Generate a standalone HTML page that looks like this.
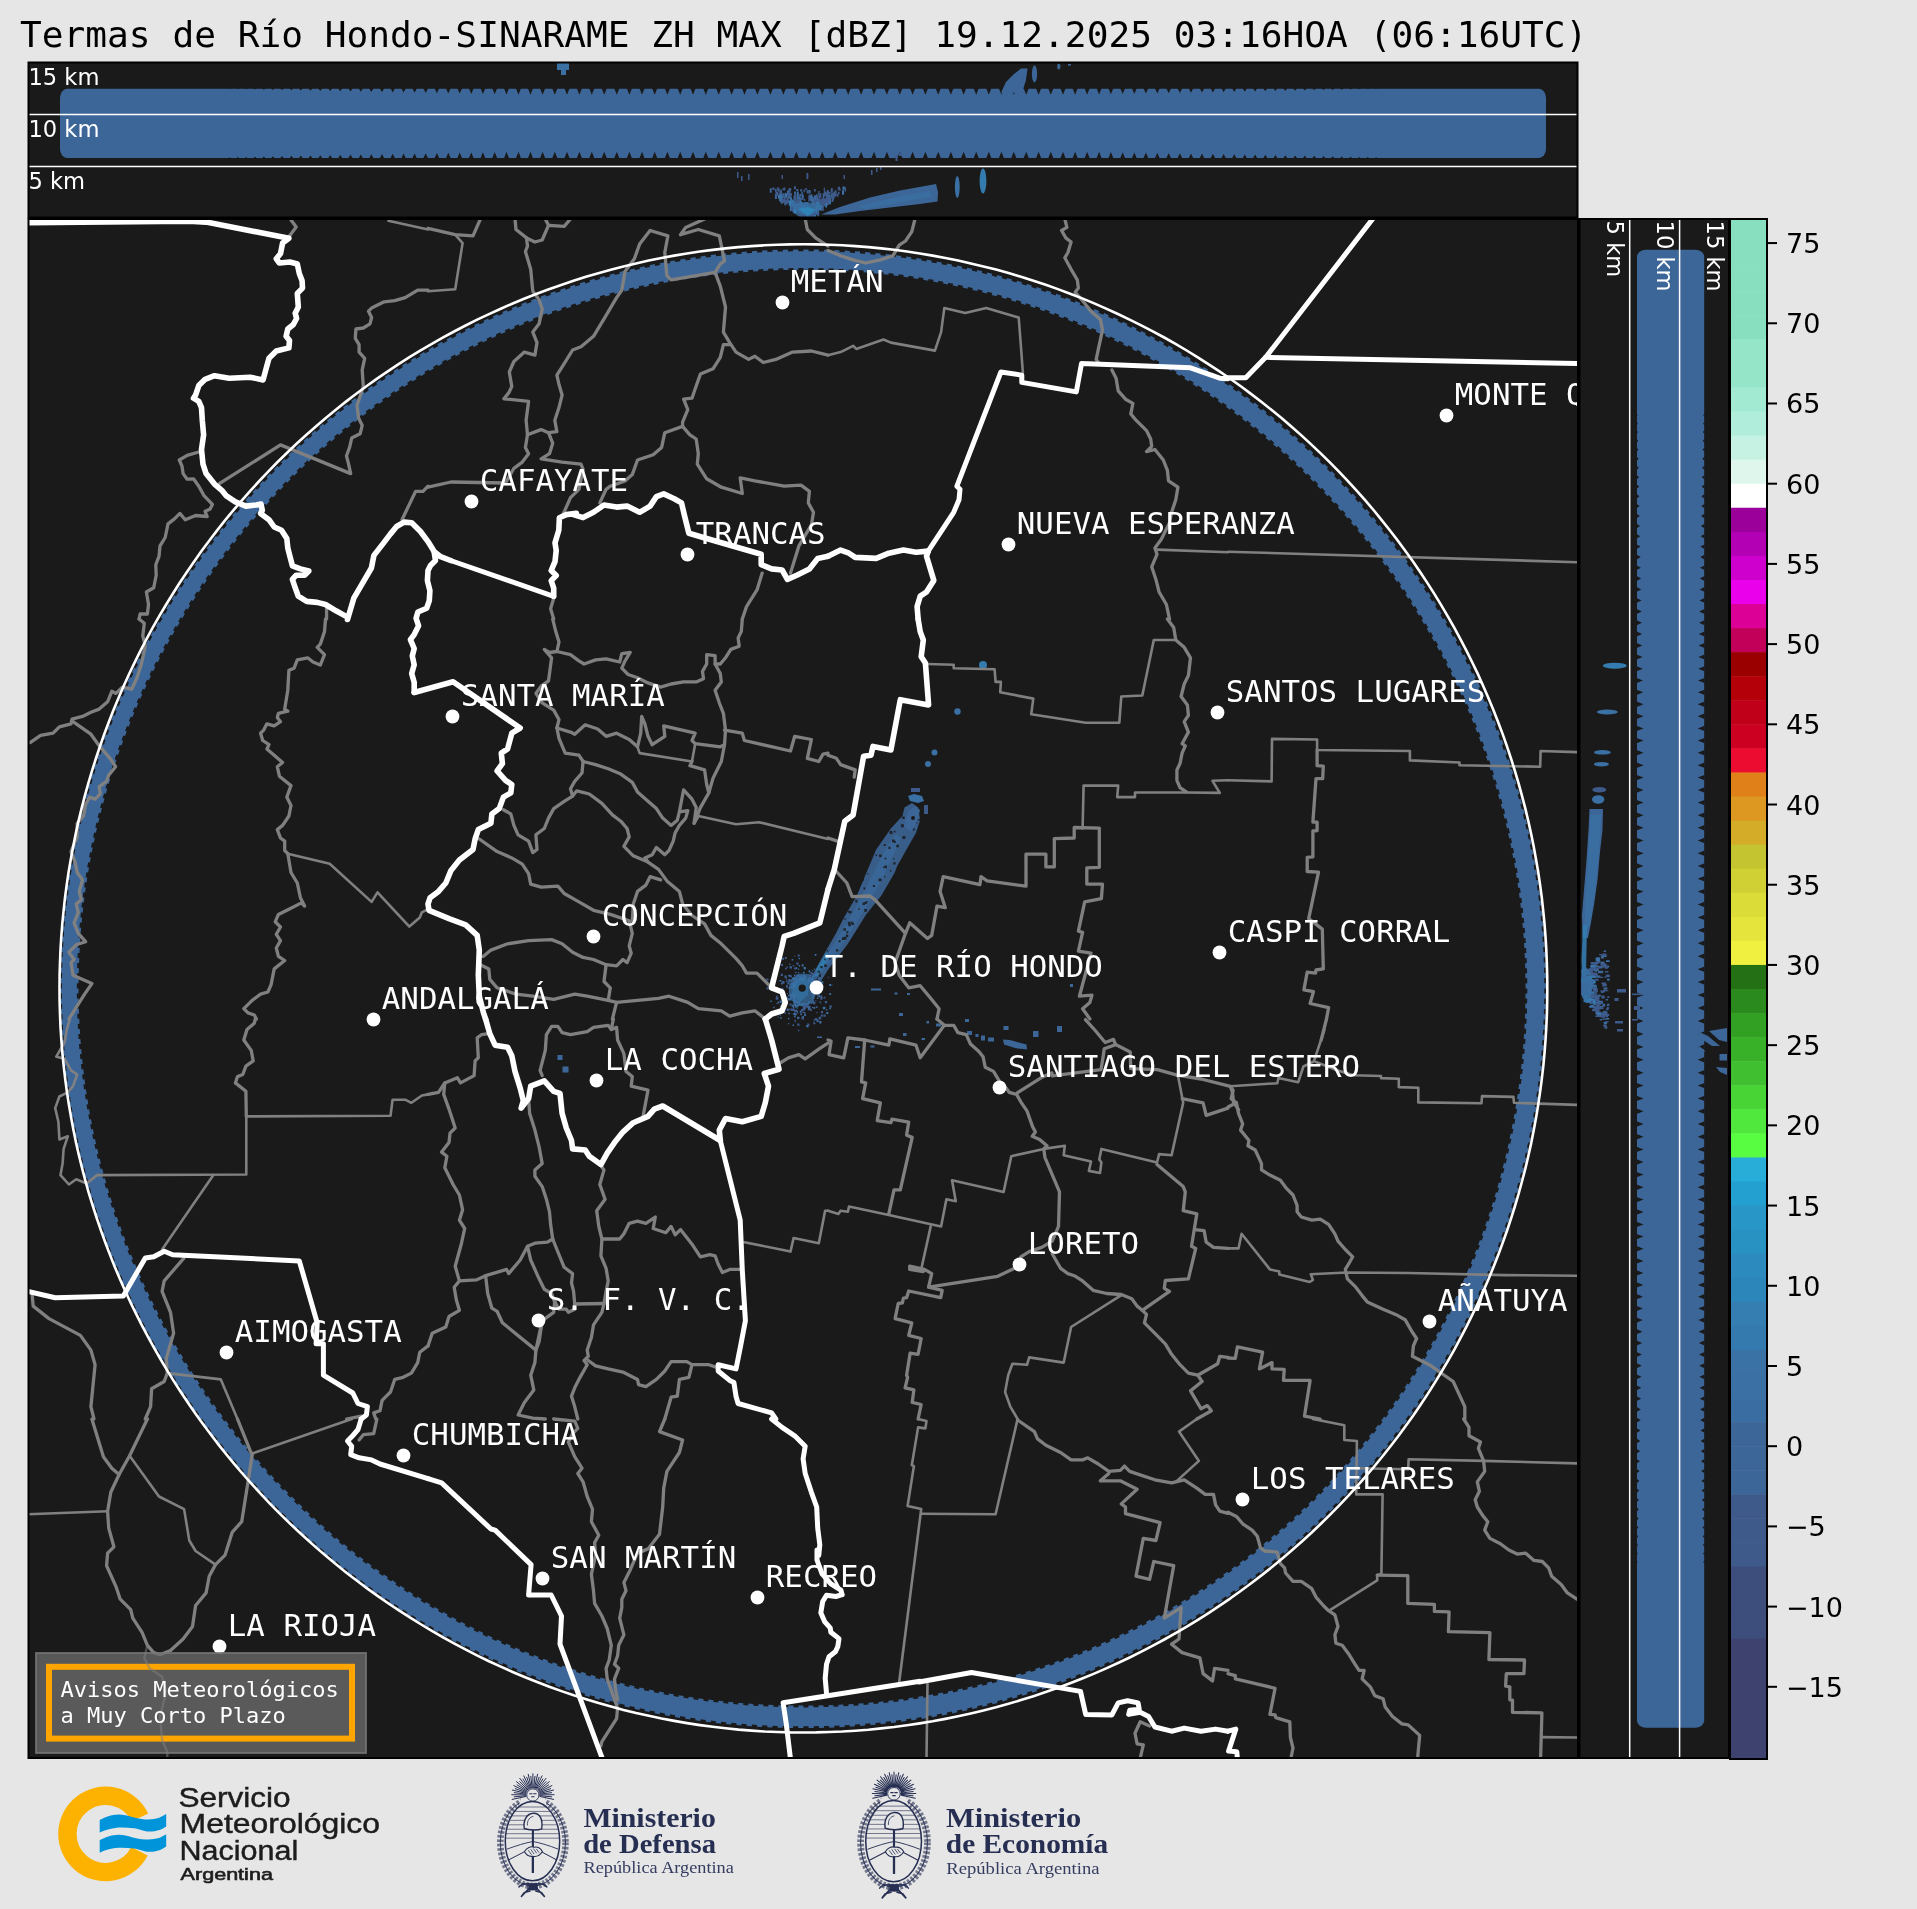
<!DOCTYPE html>
<html lang="es"><head><meta charset="utf-8"><title>Termas de Río Hondo-SINARAME ZH MAX</title>
<style>html,body{margin:0;padding:0;background:#e6e6e6;}body{width:1917px;height:1909px;overflow:hidden;}svg{display:block;will-change:transform;}.mono{font-family:"DejaVu Sans Mono","Liberation Mono",monospace;}.sans{font-family:"DejaVu Sans","Liberation Sans",sans-serif;}.lsans{font-family:"Liberation Sans","DejaVu Sans",sans-serif;}.serif{font-family:"Liberation Serif","DejaVu Serif",serif;}</style></head><body>
<svg width="1917" height="1909" viewBox="0 0 1917 1909">
<rect width="1917" height="1909" fill="#e6e6e6"/>
<text class="mono" x="20" y="47" font-size="36.16" fill="#000" xml:space="preserve">Termas de Río Hondo-SINARAME ZH MAX [dBZ] 19.12.2025 03:16HOA (06:16UTC)</text>
<rect x="28.5" y="62.5" width="1549.0" height="155.0" fill="#1a1a1a"/>
<clipPath id="tclip"><rect x="28.5" y="62.5" width="1549.0" height="155.0"/></clipPath>
<g id="toppanel" clip-path="url(#tclip)">
<rect x="60" y="88.8" width="1486" height="69.2" rx="7" ry="9" fill="#3d6698"/>
<path d="M227.7,88.0L231.3,88.0L229.5,88.8ZM227.7,158.5L231.3,158.5L229.5,157.3ZM236.0,88.0L239.7,88.0L237.8,89.0ZM236.0,158.5L239.7,158.5L237.8,157.1ZM244.4,88.0L248.2,88.0L246.3,89.2ZM244.4,158.5L248.2,158.5L246.3,156.9ZM253.1,88.0L256.9,88.0L255.0,89.4ZM253.1,158.5L256.9,158.5L255.0,156.7ZM261.9,88.0L265.8,88.0L263.8,89.7ZM261.9,158.5L265.8,158.5L263.8,156.5ZM270.9,88.0L274.9,88.0L272.9,89.9ZM270.9,158.5L274.9,158.5L272.9,156.3ZM280.0,88.0L284.1,88.0L282.0,90.1ZM280.0,158.5L284.1,158.5L282.0,156.1ZM289.3,88.0L293.4,88.0L291.4,90.3ZM289.3,158.5L293.4,158.5L291.4,155.8ZM298.7,88.0L302.9,88.0L300.8,90.5ZM298.7,158.5L302.9,158.5L300.8,155.6ZM308.3,88.0L312.6,88.0L310.5,90.7ZM308.3,158.5L312.6,158.5L310.5,155.4ZM318.1,88.0L322.4,88.0L320.3,90.9ZM318.1,158.5L322.4,158.5L320.3,155.2ZM328.0,88.0L332.4,88.0L330.2,91.1ZM328.0,158.5L332.4,158.5L330.2,155.0ZM338.0,88.0L342.5,88.0L340.3,91.3ZM338.0,158.5L342.5,158.5L340.3,154.8ZM348.2,88.0L352.8,88.0L350.5,91.5ZM348.2,158.5L352.8,158.5L350.5,154.6ZM358.6,88.0L363.1,88.0L360.8,91.8ZM358.6,158.5L363.1,158.5L360.8,154.4ZM369.0,88.0L373.7,88.0L371.3,92.0ZM369.0,158.5L373.7,158.5L371.3,154.2ZM379.6,88.0L384.3,88.0L382.0,92.2ZM379.6,158.5L384.3,158.5L382.0,154.0ZM390.3,88.0L395.1,88.0L392.7,92.4ZM390.3,158.5L395.1,158.5L392.7,153.8ZM401.2,88.0L406.0,88.0L403.6,92.6ZM401.2,158.5L406.0,158.5L403.6,153.6ZM412.2,88.0L417.0,88.0L414.6,92.8ZM412.2,158.5L417.0,158.5L414.6,153.4ZM423.2,88.0L428.2,88.0L425.7,93.0ZM423.2,158.5L428.2,158.5L425.7,153.2ZM434.4,88.0L439.4,88.0L436.9,93.2ZM434.4,158.5L439.4,158.5L436.9,153.0ZM445.8,88.0L450.8,88.0L448.3,93.4ZM445.8,158.5L450.8,158.5L448.3,152.8ZM457.2,88.0L462.3,88.0L459.7,93.6ZM457.2,158.5L462.3,158.5L459.7,152.6ZM468.7,88.0L473.8,88.0L471.3,93.9ZM468.7,158.5L473.8,158.5L471.3,152.4ZM480.4,88.0L485.5,88.0L482.9,94.1ZM480.4,158.5L485.5,158.5L482.9,152.2ZM492.1,88.0L497.3,88.0L494.7,94.3ZM492.1,158.5L497.3,158.5L494.7,152.0ZM503.9,88.0L509.1,88.0L506.5,94.5ZM503.9,158.5L509.1,158.5L506.5,151.8ZM515.8,88.0L521.1,88.0L518.5,94.7ZM515.8,158.5L521.1,158.5L518.5,151.7ZM527.8,88.0L533.1,88.0L530.5,94.8ZM527.8,158.5L533.1,158.5L530.5,151.7ZM539.9,88.0L545.3,88.0L542.6,94.8ZM539.9,158.5L545.3,158.5L542.6,151.7ZM552.1,88.0L557.5,88.0L554.8,94.8ZM552.1,158.5L557.5,158.5L554.8,151.7ZM564.3,88.0L569.7,88.0L567.0,94.8ZM564.3,158.5L569.7,158.5L567.0,151.7ZM576.7,88.0L582.1,88.0L579.4,94.8ZM576.7,158.5L582.1,158.5L579.4,151.7ZM589.1,88.0L594.5,88.0L591.8,94.8ZM589.1,158.5L594.5,158.5L591.8,151.7ZM601.5,88.0L606.9,88.0L604.2,94.8ZM601.5,158.5L606.9,158.5L604.2,151.7ZM614.1,88.0L619.5,88.0L616.8,94.8ZM614.1,158.5L619.5,158.5L616.8,151.7ZM626.7,88.0L632.1,88.0L629.4,94.8ZM626.7,158.5L632.1,158.5L629.4,151.7ZM639.3,88.0L644.7,88.0L642.0,94.8ZM639.3,158.5L644.7,158.5L642.0,151.7ZM652.0,88.0L657.4,88.0L654.7,94.8ZM652.0,158.5L657.4,158.5L654.7,151.7ZM664.7,88.0L670.1,88.0L667.4,94.8ZM664.7,158.5L670.1,158.5L667.4,151.7ZM677.5,88.0L682.9,88.0L680.2,94.8ZM677.5,158.5L682.9,158.5L680.2,151.7ZM690.3,88.0L695.7,88.0L693.0,94.8ZM690.3,158.5L695.7,158.5L693.0,151.7ZM703.1,88.0L708.5,88.0L705.8,94.8ZM703.1,158.5L708.5,158.5L705.8,151.7ZM716.0,88.0L721.4,88.0L718.7,94.8ZM716.0,158.5L721.4,158.5L718.7,151.7ZM728.9,88.0L734.3,88.0L731.6,94.8ZM728.9,158.5L734.3,158.5L731.6,151.7ZM741.8,88.0L747.2,88.0L744.5,94.8ZM741.8,158.5L747.2,158.5L744.5,151.7ZM754.7,88.0L760.1,88.0L757.4,94.8ZM754.7,158.5L760.1,158.5L757.4,151.7ZM767.7,88.0L773.1,88.0L770.4,94.8ZM767.7,158.5L773.1,158.5L770.4,151.7ZM780.7,88.0L786.1,88.0L783.4,94.8ZM780.7,158.5L786.1,158.5L783.4,151.7ZM793.6,88.0L799.0,88.0L796.3,94.8ZM793.6,158.5L799.0,158.5L796.3,151.7ZM806.6,88.0L812.0,88.0L809.3,94.8ZM806.6,158.5L812.0,158.5L809.3,151.7ZM819.5,88.0L824.9,88.0L822.2,94.8ZM819.5,158.5L824.9,158.5L822.2,151.7ZM832.5,88.0L837.9,88.0L835.2,94.8ZM832.5,158.5L837.9,158.5L835.2,151.7ZM845.5,88.0L850.9,88.0L848.2,94.8ZM845.5,158.5L850.9,158.5L848.2,151.7ZM858.4,88.0L863.8,88.0L861.1,94.8ZM858.4,158.5L863.8,158.5L861.1,151.7ZM871.3,88.0L876.7,88.0L874.0,94.8ZM871.3,158.5L876.7,158.5L874.0,151.7ZM884.2,88.0L889.6,88.0L886.9,94.8ZM884.2,158.5L889.6,158.5L886.9,151.7ZM897.1,88.0L902.5,88.0L899.8,94.8ZM897.1,158.5L902.5,158.5L899.8,151.7ZM909.9,88.0L915.3,88.0L912.6,94.8ZM909.9,158.5L915.3,158.5L912.6,151.7ZM922.7,88.0L928.1,88.0L925.4,94.8ZM922.7,158.5L928.1,158.5L925.4,151.7ZM935.5,88.0L940.9,88.0L938.2,94.8ZM935.5,158.5L940.9,158.5L938.2,151.7ZM948.2,88.0L953.6,88.0L950.9,94.8ZM948.2,158.5L953.6,158.5L950.9,151.7ZM960.9,88.0L966.3,88.0L963.6,94.8ZM960.9,158.5L966.3,158.5L963.6,151.7ZM973.5,88.0L978.9,88.0L976.2,94.8ZM973.5,158.5L978.9,158.5L976.2,151.7ZM986.1,88.0L991.5,88.0L988.8,94.8ZM986.1,158.5L991.5,158.5L988.8,151.7ZM998.7,88.0L1004.1,88.0L1001.4,94.8ZM998.7,158.5L1004.1,158.5L1001.4,151.7ZM1011.1,88.0L1016.5,88.0L1013.8,94.8ZM1011.1,158.5L1016.5,158.5L1013.8,151.7ZM1023.5,88.0L1028.9,88.0L1026.2,94.8ZM1023.5,158.5L1028.9,158.5L1026.2,151.7ZM1035.9,88.0L1041.3,88.0L1038.6,94.8ZM1035.9,158.5L1041.3,158.5L1038.6,151.7ZM1048.1,88.0L1053.5,88.0L1050.8,94.8ZM1048.1,158.5L1053.5,158.5L1050.8,151.7ZM1060.3,88.0L1065.7,88.0L1063.0,94.8ZM1060.3,158.5L1065.7,158.5L1063.0,151.7ZM1072.5,88.0L1077.8,88.0L1075.1,94.8ZM1072.5,158.5L1077.8,158.5L1075.1,151.7ZM1084.5,88.0L1089.8,88.0L1087.1,94.7ZM1084.5,158.5L1089.8,158.5L1087.1,151.7ZM1096.5,88.0L1101.7,88.0L1099.1,94.5ZM1096.5,158.5L1101.7,158.5L1099.1,151.8ZM1108.3,88.0L1113.5,88.0L1110.9,94.3ZM1108.3,158.5L1113.5,158.5L1110.9,152.0ZM1120.1,88.0L1125.2,88.0L1122.7,94.1ZM1120.1,158.5L1125.2,158.5L1122.7,152.2ZM1131.8,88.0L1136.9,88.0L1134.3,93.9ZM1131.8,158.5L1136.9,158.5L1134.3,152.4ZM1143.3,88.0L1148.4,88.0L1145.9,93.6ZM1143.3,158.5L1148.4,158.5L1145.9,152.6ZM1154.8,88.0L1159.8,88.0L1157.3,93.4ZM1154.8,158.5L1159.8,158.5L1157.3,152.8ZM1166.2,88.0L1171.2,88.0L1168.7,93.2ZM1166.2,158.5L1171.2,158.5L1168.7,153.0ZM1177.4,88.0L1182.4,88.0L1179.9,93.0ZM1177.4,158.5L1182.4,158.5L1179.9,153.2ZM1188.6,88.0L1193.4,88.0L1191.0,92.8ZM1188.6,158.5L1193.4,158.5L1191.0,153.4ZM1199.6,88.0L1204.4,88.0L1202.0,92.6ZM1199.6,158.5L1204.4,158.5L1202.0,153.6ZM1210.5,88.0L1215.3,88.0L1212.9,92.4ZM1210.5,158.5L1215.3,158.5L1212.9,153.8ZM1221.3,88.0L1226.0,88.0L1223.6,92.2ZM1221.3,158.5L1226.0,158.5L1223.6,154.0ZM1231.9,88.0L1236.6,88.0L1234.3,92.0ZM1231.9,158.5L1236.6,158.5L1234.3,154.2ZM1242.5,88.0L1247.0,88.0L1244.8,91.8ZM1242.5,158.5L1247.0,158.5L1244.8,154.4ZM1252.8,88.0L1257.4,88.0L1255.1,91.5ZM1252.8,158.5L1257.4,158.5L1255.1,154.6ZM1263.1,88.0L1267.6,88.0L1265.3,91.3ZM1263.1,158.5L1267.6,158.5L1265.3,154.8ZM1273.2,88.0L1277.6,88.0L1275.4,91.1ZM1273.2,158.5L1277.6,158.5L1275.4,155.0ZM1283.2,88.0L1287.5,88.0L1285.3,90.9ZM1283.2,158.5L1287.5,158.5L1285.3,155.2ZM1293.0,88.0L1297.3,88.0L1295.1,90.7ZM1293.0,158.5L1297.3,158.5L1295.1,155.4ZM1302.7,88.0L1306.9,88.0L1304.8,90.5ZM1302.7,158.5L1306.9,158.5L1304.8,155.6ZM1312.2,88.0L1316.3,88.0L1314.2,90.3ZM1312.2,158.5L1316.3,158.5L1314.2,155.8ZM1321.5,88.0L1325.6,88.0L1323.6,90.1ZM1321.5,158.5L1325.6,158.5L1323.6,156.1ZM1330.7,88.0L1334.7,88.0L1332.7,89.9ZM1330.7,158.5L1334.7,158.5L1332.7,156.3ZM1339.8,88.0L1343.7,88.0L1341.8,89.7ZM1339.8,158.5L1343.7,158.5L1341.8,156.5ZM1348.7,88.0L1352.5,88.0L1350.6,89.4ZM1348.7,158.5L1352.5,158.5L1350.6,156.7ZM1357.4,88.0L1361.2,88.0L1359.3,89.2ZM1357.4,158.5L1361.2,158.5L1359.3,156.9ZM1365.9,88.0L1369.6,88.0L1367.8,89.0ZM1365.9,158.5L1369.6,158.5L1367.8,157.1ZM1374.3,88.0L1377.9,88.0L1376.1,88.8ZM1374.3,158.5L1377.9,158.5L1376.1,157.3Z" fill="#1a1a1a"/>
<path d="M557,63h12v7h-3v5h-5v-5h-4z" fill="#3a70a4"/>
<path d="M1001,92.8L1006,82L1014,74L1021,68.6L1027.5,68.6L1026,80L1022,92.8Z" fill="#3d6698"/>
<ellipse cx="1034.5" cy="74" rx="2.6" ry="8.5" fill="#3d6698"/>
<ellipse cx="1058.8" cy="66.5" rx="1.6" ry="3" fill="#3d6698"/>
<rect x="1068" y="64" width="3" height="1.6" fill="#3d6698"/>
<path d="M785.5,195.1h2.0v3.4h-2.0zM777.7,188.3h1.8v3.5h-1.8zM800.2,189.3h1.9v2.1h-1.9zM799.3,194.0h1.8v2.6h-1.8zM824.9,201.9h2.1v5.7h-2.1zM794.7,201.7h1.8v3.0h-1.8zM769.8,188.3h1.9v4.4h-1.9zM795.4,206.3h1.4v8.3h-1.4zM808.1,206.3h1.9v5.5h-1.9zM788.6,189.4h1.3v3.8h-1.3zM801.6,211.1h2.1v3.1h-2.1zM799.9,209.3h1.9v4.4h-1.9zM813.9,195.3h2.6v5.1h-2.6zM789.0,188.3h2.3v2.2h-2.3zM797.0,196.9h2.2v4.8h-2.2zM800.7,211.1h2.2v5.5h-2.2zM805.8,213.8h2.5v2.6h-2.5zM808.3,190.0h2.3v3.5h-2.3zM799.8,204.4h1.8v3.0h-1.8zM780.4,192.0h1.8v5.1h-1.8zM807.6,212.9h1.8v7.9h-1.8zM806.6,206.7h2.6v4.0h-2.6zM797.3,205.9h2.2v4.0h-2.2zM822.7,193.2h1.6v5.4h-1.6zM830.8,193.3h1.2v4.7h-1.2zM792.9,204.2h1.3v2.0h-1.3zM814.3,209.5h1.6v2.8h-1.6zM818.9,202.8h1.3v4.9h-1.3zM804.3,208.6h2.5v7.0h-2.5zM786.4,200.3h2.5v2.7h-2.5zM800.9,202.2h1.4v6.1h-1.4zM813.5,210.4h2.2v7.4h-2.2zM801.2,211.1h2.1v2.2h-2.1zM798.5,201.9h1.8v3.6h-1.8zM807.2,202.9h1.4v2.0h-1.4zM817.4,204.0h1.6v3.8h-1.6zM805.6,206.9h1.8v3.5h-1.8zM818.0,198.2h1.5v4.9h-1.5zM788.9,201.8h2.1v2.9h-2.1zM792.5,205.6h2.1v2.3h-2.1zM800.1,211.0h2.5v8.9h-2.5zM775.1,188.8h1.6v3.1h-1.6zM802.6,213.4h1.9v8.3h-1.9zM807.3,213.1h1.9v6.5h-1.9zM788.4,193.9h1.4v4.4h-1.4zM819.9,206.3h2.0v4.2h-2.0zM797.6,196.4h2.6v2.8h-2.6zM809.7,206.4h1.6v4.4h-1.6zM806.8,212.3h2.3v5.0h-2.3zM784.2,199.8h1.9v4.5h-1.9zM796.3,204.9h2.1v2.1h-2.1zM797.5,207.2h1.8v2.8h-1.8zM804.2,210.1h1.9v7.5h-1.9zM811.3,197.3h2.6v4.9h-2.6zM818.3,190.9h1.3v4.8h-1.3zM782.9,193.2h1.8v4.3h-1.8zM776.1,191.9h2.2v2.4h-2.2zM804.9,211.8h2.2v3.1h-2.2zM774.9,193.9h2.0v5.0h-2.0zM795.2,196.4h1.2v3.2h-1.2zM816.0,208.9h1.3v3.4h-1.3zM779.2,196.6h2.2v4.1h-2.2zM792.1,200.2h1.5v5.6h-1.5zM806.1,207.3h1.6v2.0h-1.6zM789.9,196.4h1.8v5.4h-1.8zM801.1,210.9h1.3v8.8h-1.3zM780.8,195.4h2.5v2.5h-2.5zM786.2,193.5h1.4v3.3h-1.4zM815.2,207.8h2.5v3.9h-2.5zM806.4,212.7h1.9v6.2h-1.9zM779.1,192.8h1.6v3.9h-1.6zM809.5,205.4h1.3v8.0h-1.3zM790.4,204.6h1.5v3.9h-1.5zM816.9,207.7h2.3v7.9h-2.3zM820.3,205.0h2.1v2.9h-2.1zM828.9,195.0h1.6v2.4h-1.6zM793.5,195.8h2.4v4.4h-2.4zM804.2,202.7h1.8v4.8h-1.8zM807.9,210.5h2.6v6.9h-2.6zM795.7,207.0h1.8v6.9h-1.8zM814.7,207.5h1.6v4.4h-1.6zM796.3,189.0h2.0v2.0h-2.0zM780.6,197.3h2.2v6.4h-2.2zM832.3,197.2h1.5v3.6h-1.5zM799.3,210.8h2.2v5.3h-2.2zM815.5,201.4h2.6v5.8h-2.6zM794.1,191.4h2.1v3.3h-2.1zM779.6,191.6h1.7v4.7h-1.7zM826.5,199.7h1.7v5.0h-1.7zM800.3,200.5h1.4v5.2h-1.4zM810.7,196.0h2.2v5.8h-2.2zM799.5,206.2h2.1v8.1h-2.1zM811.0,193.9h1.3v2.5h-1.3zM831.2,188.2h1.4v2.5h-1.4zM811.7,199.6h2.4v5.9h-2.4zM814.8,203.2h1.3v2.9h-1.3zM800.8,201.7h1.6v5.0h-1.6zM815.7,204.4h2.6v3.4h-2.6zM807.9,212.2h2.0v3.6h-2.0zM831.0,195.6h2.5v2.4h-2.5z" fill="#3d6698"/>
<path d="M828.9,197.9h2.1v6.3h-2.1zM813.9,208.9h1.8v4.5h-1.8zM803.2,212.8h1.5v3.8h-1.5zM790.6,203.2h1.7v5.6h-1.7zM805.5,202.9h1.9v7.5h-1.9zM813.3,208.6h1.5v5.5h-1.5zM806.0,212.8h2.6v9.4h-2.6zM791.1,199.4h2.3v6.7h-2.3zM825.5,199.0h2.6v2.1h-2.6zM798.9,208.6h2.6v6.5h-2.6zM809.2,195.1h2.2v5.6h-2.2zM814.0,209.2h1.4v5.6h-1.4zM799.7,210.7h1.3v2.7h-1.3zM811.5,212.0h1.5v5.4h-1.5zM779.7,196.0h1.8v4.9h-1.8zM797.4,208.4h1.3v7.9h-1.3zM789.9,203.4h2.5v7.6h-2.5zM804.4,209.4h2.2v8.9h-2.2zM807.3,213.2h1.3v3.5h-1.3zM795.7,201.3h1.7v2.0h-1.7zM792.2,204.0h2.1v7.6h-2.1zM807.6,209.4h2.1v6.8h-2.1zM801.6,209.7h1.5v6.6h-1.5zM809.4,207.5h1.3v3.0h-1.3zM813.0,204.2h1.4v4.9h-1.4zM777.9,194.7h1.3v4.0h-1.3zM790.3,197.7h1.7v3.5h-1.7zM787.0,190.8h2.2v4.0h-2.2zM779.2,195.6h2.0v5.6h-2.0zM803.3,213.2h2.2v8.6h-2.2zM800.8,205.7h1.9v6.2h-1.9zM806.3,211.1h1.3v6.4h-1.3zM806.1,213.6h1.3v2.6h-1.3zM802.9,212.8h1.5v4.8h-1.5zM805.1,209.0h1.9v4.6h-1.9zM796.9,191.4h1.8v4.6h-1.8zM805.4,212.7h1.8v5.8h-1.8zM787.8,190.5h2.1v2.6h-2.1zM815.6,206.9h1.4v7.5h-1.4zM803.7,214.0h2.5v8.5h-2.5zM799.7,197.5h1.2v4.2h-1.2zM792.2,203.9h2.2v4.4h-2.2zM803.8,204.7h2.2v7.3h-2.2zM818.9,203.9h2.1v3.1h-2.1zM800.0,211.1h2.3v2.3h-2.3zM801.6,194.6h2.1v3.7h-2.1zM804.4,208.7h1.7v4.5h-1.7zM808.0,213.9h1.5v9.8h-1.5zM797.3,203.1h2.1v7.1h-2.1zM806.1,213.1h2.2v9.0h-2.2zM807.4,213.8h2.3v4.1h-2.3zM826.6,193.6h2.3v5.2h-2.3zM808.0,213.8h2.0v5.0h-2.0zM801.0,209.6h2.5v3.4h-2.5zM809.8,211.5h2.3v6.7h-2.3zM829.5,199.7h1.7v2.5h-1.7zM810.1,211.0h2.1v4.7h-2.1zM832.6,193.4h2.4v2.8h-2.4zM803.6,211.5h1.8v2.1h-1.8zM817.1,205.6h2.1v4.8h-2.1zM815.8,197.5h2.1v5.5h-2.1zM800.5,204.3h2.1v2.5h-2.1zM799.8,200.9h1.5v2.4h-1.5zM800.8,209.5h1.9v7.2h-1.9zM794.1,204.8h1.8v7.0h-1.8zM820.0,205.1h2.6v5.1h-2.6zM785.4,194.0h1.6v3.3h-1.6zM810.2,205.2h1.6v5.7h-1.6zM806.5,207.8h2.0v5.2h-2.0zM824.0,191.6h2.0v4.2h-2.0zM800.1,205.0h2.3v2.6h-2.3zM797.0,196.2h1.8v5.7h-1.8zM802.7,210.4h1.4v4.0h-1.4zM805.9,213.2h1.5v3.9h-1.5zM808.2,208.7h1.3v7.0h-1.3zM842.5,186.5h2.4v3.3h-2.4zM793.5,206.1h1.9v5.2h-1.9zM802.0,203.0h1.8v6.1h-1.8zM801.4,191.7h1.3v3.8h-1.3zM780.3,189.4h1.3v2.5h-1.3zM788.5,196.0h2.0v2.5h-2.0zM815.4,195.4h2.5v4.2h-2.5zM807.8,208.0h2.3v3.6h-2.3zM800.4,210.4h2.0v4.0h-2.0zM793.2,206.0h1.4v3.2h-1.4zM807.2,212.4h1.9v6.0h-1.9zM780.5,193.9h2.5v4.6h-2.5zM789.8,201.2h1.8v3.1h-1.8zM795.1,195.1h1.3v2.0h-1.3zM798.1,204.3h1.4v2.2h-1.4zM801.9,211.3h1.8v6.2h-1.8zM817.8,203.4h2.1v5.5h-2.1zM790.2,201.3h1.3v4.8h-1.3zM779.2,196.4h1.6v5.0h-1.6zM800.7,207.3h1.2v8.5h-1.2zM810.9,210.4h2.1v4.6h-2.1zM800.6,208.2h1.4v2.5h-1.4zM806.7,206.7h1.7v5.5h-1.7zM807.5,211.8h1.5v6.4h-1.5zM800.6,203.5h2.0v3.5h-2.0zM798.8,210.5h2.1v4.3h-2.1zM842.0,190.3h2.1v4.4h-2.1zM813.4,207.4h2.3v8.4h-2.3zM807.8,212.5h1.6v4.0h-1.6zM784.9,192.8h1.6v5.0h-1.6z" fill="#3a70a4"/>
<path d="M802.7,211.5h1.8v3.8h-1.8zM800.3,209.3h1.4v5.7h-1.4zM793.3,200.5h2.2v6.7h-2.2zM820.0,206.5h1.9v3.2h-1.9zM800.7,209.1h1.6v3.7h-1.6zM809.1,207.7h1.4v2.9h-1.4zM817.2,201.7h2.1v4.7h-2.1zM788.8,200.4h2.1v5.3h-2.1zM810.8,209.1h1.8v6.9h-1.8zM804.8,208.0h2.3v4.7h-2.3zM806.4,213.1h2.5v9.2h-2.5zM814.8,210.0h1.4v3.1h-1.4zM809.1,207.6h1.6v4.4h-1.6zM805.8,212.4h1.4v2.7h-1.4zM794.4,200.9h2.3v2.1h-2.3zM794.8,206.6h1.7v7.2h-1.7zM806.5,205.4h1.8v2.9h-1.8zM793.2,206.7h2.4v6.5h-2.4zM816.8,207.9h1.3v5.8h-1.3zM816.5,203.8h2.2v7.1h-2.2zM810.2,210.3h1.4v8.0h-1.4zM819.0,205.8h1.2v4.4h-1.2zM795.3,202.4h1.3v4.5h-1.3zM802.6,207.8h1.7v4.9h-1.7zM815.4,208.5h2.4v2.4h-2.4zM802.0,210.6h1.2v6.0h-1.2zM806.4,202.4h1.8v6.3h-1.8zM813.8,210.6h1.8v6.5h-1.8zM813.0,210.4h1.4v3.4h-1.4zM808.8,209.0h1.3v2.1h-1.3zM811.6,209.7h1.5v8.7h-1.5zM795.8,201.8h1.4v6.7h-1.4zM818.8,200.4h1.3v4.2h-1.3zM808.6,211.9h1.5v5.4h-1.5zM819.5,202.8h1.8v3.3h-1.8zM797.1,203.5h1.3v4.6h-1.3zM825.6,200.8h1.7v5.5h-1.7z" fill="#347cb0"/>
<path d="M783.6,187.4h1.8v3.2h-1.8zM821.0,201.7h1.5v2.5h-1.5zM796.9,198.0h1.6v5.6h-1.6zM823.3,198.8h2.1v2.3h-2.1zM831.9,197.1h1.8v3.2h-1.8zM786.7,198.3h2.0v4.5h-2.0zM784.4,199.5h1.6v6.1h-1.6zM827.2,200.5h2.0v4.6h-2.0zM813.8,199.4h2.1v6.4h-2.1zM804.1,213.1h1.8v5.8h-1.8zM788.4,188.4h2.3v4.1h-2.3zM808.5,197.4h1.7v3.2h-1.7zM772.3,187.4h2.3v2.7h-2.3zM826.0,193.6h1.2v3.8h-1.2zM833.3,191.6h2.6v5.1h-2.6zM826.7,190.0h2.1v2.2h-2.1zM813.6,208.5h2.4v6.7h-2.4zM816.0,194.1h1.4v5.3h-1.4zM783.4,199.6h1.8v3.5h-1.8zM794.1,202.5h1.3v2.6h-1.3zM836.6,194.0h1.9v2.7h-1.9zM819.1,198.6h1.3v6.4h-1.3zM798.2,198.7h2.0v3.2h-2.0zM828.1,196.7h2.3v4.1h-2.3zM838.7,188.4h2.0v2.1h-2.0zM826.0,192.3h1.8v5.2h-1.8zM815.6,199.8h1.8v2.0h-1.8zM787.7,192.5h2.5v3.7h-2.5zM809.2,213.9h1.5v9.5h-1.5zM782.4,188.2h1.3v2.1h-1.3zM823.5,200.0h1.8v5.1h-1.8zM782.2,193.8h1.8v2.7h-1.8zM834.8,190.3h1.8v4.9h-1.8zM814.0,189.0h1.7v2.4h-1.7zM825.7,197.7h1.5v5.3h-1.5zM805.9,210.7h1.2v6.0h-1.2zM785.3,199.5h2.5v5.0h-2.5zM821.7,200.1h2.5v3.6h-2.5zM806.7,190.0h1.6v3.4h-1.6zM827.9,191.7h2.5v2.8h-2.5zM796.4,204.4h1.9v5.8h-1.9zM811.8,211.9h1.3v6.8h-1.3zM821.2,198.2h2.1v6.5h-2.1zM810.0,211.5h1.9v4.1h-1.9zM818.4,195.7h2.4v2.4h-2.4zM817.9,198.6h2.2v3.2h-2.2zM803.6,189.5h1.5v2.8h-1.5zM808.7,213.5h1.8v3.6h-1.8zM804.4,207.0h2.2v7.7h-2.2zM819.6,193.3h1.8v4.5h-1.8zM814.4,209.3h1.6v3.5h-1.6zM805.8,207.8h1.5v6.7h-1.5zM789.7,193.1h2.2v3.0h-2.2zM779.9,190.3h2.0v2.9h-2.0zM776.0,193.0h2.3v3.2h-2.3zM821.3,205.3h2.5v5.4h-2.5zM795.0,202.1h2.4v4.6h-2.4zM825.3,197.8h2.2v4.7h-2.2zM775.4,192.1h2.0v3.5h-2.0zM812.6,210.9h1.2v2.4h-1.2zM805.7,206.4h2.6v2.7h-2.6zM795.1,198.7h1.6v4.9h-1.6zM830.7,188.5h2.0v4.3h-2.0zM819.6,199.3h1.5v5.4h-1.5zM794.4,205.8h1.5v2.6h-1.5zM811.1,211.3h2.3v7.3h-2.3zM826.5,199.1h2.4v2.4h-2.4zM804.8,203.6h2.4v4.8h-2.4zM823.8,192.1h2.3v4.4h-2.3zM813.7,206.5h1.4v6.3h-1.4zM814.3,209.5h1.7v4.0h-1.7zM806.4,210.2h2.5v5.4h-2.5zM831.4,196.0h1.7v3.0h-1.7zM794.2,194.1h2.0v5.6h-2.0zM823.9,200.3h1.6v5.7h-1.6zM820.9,201.3h2.1v3.1h-2.1zM832.5,196.3h2.3v2.1h-2.3zM794.0,186.3h2.0v3.0h-2.0zM805.5,210.4h1.7v5.2h-1.7zM808.8,194.4h1.7v2.9h-1.7zM823.1,198.2h1.8v2.2h-1.8zM781.8,198.7h1.8v4.4h-1.8zM808.3,195.6h1.6v6.0h-1.6zM783.6,197.8h1.9v2.9h-1.9zM814.4,203.7h1.2v2.0h-1.2zM791.2,205.3h2.4v5.6h-2.4zM821.9,198.3h2.5v6.0h-2.5zM832.0,193.1h2.1v4.4h-2.1zM801.1,197.6h2.4v2.4h-2.4zM780.1,191.4h2.1v3.1h-2.1zM837.8,191.8h1.8v2.4h-1.8zM837.8,186.8h2.2v3.5h-2.2zM808.8,196.1h1.6v2.9h-1.6zM804.4,208.9h2.4v5.2h-2.4zM812.1,210.7h1.6v2.2h-1.6zM831.6,197.2h1.6v4.7h-1.6zM791.9,205.8h1.4v6.0h-1.4zM844.5,187.2h1.6v4.2h-1.6zM802.7,209.5h2.1v8.0h-2.1zM787.6,195.1h1.7v4.2h-1.7zM801.8,209.5h1.4v7.6h-1.4zM813.2,209.5h1.8v4.0h-1.8zM823.7,187.5h1.2v4.2h-1.2zM805.2,201.9h1.8v4.9h-1.8zM783.8,196.1h1.5v6.0h-1.5zM798.5,205.9h2.0v6.4h-2.0zM799.0,209.1h2.2v8.6h-2.2zM827.5,198.3h1.6v2.7h-1.6zM809.2,210.5h2.0v3.8h-2.0zM823.6,200.0h1.5v6.1h-1.5zM777.3,187.3h1.6v3.1h-1.6zM817.1,208.7h1.5v8.1h-1.5zM803.8,198.7h1.4v2.3h-1.4zM805.3,187.9h1.6v2.1h-1.6zM821.2,203.9h1.7v6.4h-1.7zM812.3,210.4h1.9v4.5h-1.9z" fill="#3d5a8a"/>
<path d="M790,205L797,203L806,202L816,203.5L824,206L814,213.5L807,216L799,212.5Z" fill="#3a70a4" fill-opacity="0.8"/>
<path d="M798,209L807,207L816,209.5L808,216Z" fill="#2c88bc" fill-opacity="0.8"/>
<rect x="737" y="172" width="1.5" height="6" fill="#3d5a8a"/>
<rect x="741" y="176" width="1.5" height="5" fill="#3d5a8a"/>
<rect x="748" y="174" width="1.5" height="6" fill="#3d5a8a"/>
<rect x="781.5" y="175" width="1.5" height="4" fill="#3d5a8a"/>
<rect x="806.5" y="173" width="1.8" height="6" fill="#3d5a8a"/>
<rect x="843.5" y="175" width="1.5" height="4" fill="#3d5a8a"/>
<rect x="871" y="170" width="1.5" height="5" fill="#3d5a8a"/>
<rect x="876" y="168" width="1.5" height="4" fill="#3d5a8a"/>
<rect x="880" y="167" width="1.5" height="3" fill="#3d5a8a"/>
<rect x="895.5" y="155" width="2" height="6" fill="#3d5a8a"/>
<rect x="899" y="153" width="3" height="3" fill="#3d5a8a"/>
<path d="M821,214.5L840,207L870,197.5L900,190.5L925,186L936,184L938,192L937.5,201.5L920,204L890,207.5L860,211L835,214.5Z" fill="#3d6698"/>
<path d="M860,206L900,196.5L930,191L931,197L900,202L865,209Z" fill="#3a70a4" fill-opacity="0.8"/>
<ellipse cx="957.3" cy="187" rx="2.4" ry="11" fill="#3a70a4"/>
<ellipse cx="983" cy="181" rx="3.4" ry="12.5" fill="#347cb0"/>
<line x1="28.5" x2="1577.5" y1="114.5" y2="114.5" stroke="#fff" stroke-width="1.5"/>
<line x1="28.5" x2="1577.5" y1="166.4" y2="166.4" stroke="#fff" stroke-width="1.5"/>
<text class="sans" x="28.4" y="85.39999999999999" font-size="22.6" fill="#fff">15 km</text>
<text class="sans" x="28.4" y="137.4" font-size="22.6" fill="#fff">10 km</text>
<text class="sans" x="28.4" y="189.1" font-size="22.6" fill="#fff">5 km</text>
</g>
<rect x="28.5" y="62.5" width="1549.0" height="155.0" fill="none" stroke="#000" stroke-width="2"/>
<clipPath id="mapclip"><rect x="28.5" y="219.0" width="1549.5" height="1539.0"/></clipPath>
<rect x="28.5" y="219.0" width="1549.5" height="1539.0" fill="#1a1a1a"/>
<g clip-path="url(#mapclip)">
<path d="M1546.1,988.4L1546.1,983.2L1544.3,983.2L1544.2,978.1L1546.0,978.0L1545.9,972.8L1544.1,972.9L1544.0,967.7L1545.8,967.7L1545.6,962.5L1543.8,962.5L1543.6,957.4L1545.4,957.3L1545.2,952.1L1543.4,952.2L1543.1,947.0L1544.9,946.9L1544.6,941.8L1542.8,941.9L1542.4,936.7L1544.2,936.6L1543.8,931.4L1542.0,931.6L1541.6,926.4L1543.4,926.3L1543.0,921.1L1541.1,921.3L1540.7,916.1L1542.4,915.9L1541.9,910.8L1540.1,911.0L1539.5,905.8L1541.3,905.6L1540.7,900.5L1538.9,900.7L1538.3,895.6L1540.0,895.3L1539.4,890.2L1537.6,890.4L1536.9,885.3L1538.6,885.1L1537.9,879.9L1536.1,880.2L1535.3,875.1L1537.1,874.8L1536.2,869.7L1534.4,870.0L1533.6,864.9L1535.3,864.6L1534.5,859.5L1532.7,859.8L1531.7,854.7L1533.5,854.4L1532.5,849.3L1530.7,849.7L1529.8,844.6L1531.5,844.2L1530.5,839.2L1528.7,839.5L1527.6,834.5L1529.3,834.1L1528.2,829.0L1526.4,829.4L1525.3,824.4L1527.0,824.0L1525.9,818.9L1524.1,819.4L1522.9,814.3L1524.6,813.9L1523.4,808.9L1521.6,809.3L1520.3,804.3L1522.0,803.9L1520.7,798.9L1518.9,799.3L1517.6,794.4L1519.3,793.9L1517.9,788.9L1516.2,789.4L1514.7,784.4L1516.4,783.9L1515.0,779.0L1513.2,779.5L1511.8,774.5L1513.4,774.0L1511.9,769.1L1510.2,769.6L1508.6,764.7L1510.3,764.2L1508.7,759.2L1507.0,759.8L1505.3,754.9L1507.0,754.3L1505.4,749.4L1503.6,750.0L1501.9,745.1L1503.6,744.6L1501.9,739.7L1500.1,740.3L1498.4,735.4L1500.0,734.8L1498.2,730.0L1496.5,730.6L1494.7,725.8L1496.3,725.2L1494.5,720.3L1492.8,721.0L1490.9,716.2L1492.5,715.6L1490.6,710.8L1488.9,711.5L1486.9,706.7L1488.5,706.0L1486.6,701.2L1484.9,701.9L1482.8,697.2L1484.5,696.5L1482.4,691.8L1480.7,692.5L1478.6,687.8L1480.2,687.1L1478.1,682.3L1476.4,683.1L1474.3,678.4L1475.9,677.7L1473.7,673.0L1472.0,673.8L1469.8,669.1L1471.4,668.4L1469.1,663.7L1467.5,664.5L1465.2,659.9L1466.8,659.1L1464.5,654.5L1462.8,655.3L1460.5,650.7L1462.0,649.9L1459.6,645.3L1458.0,646.2L1455.6,641.6L1457.2,640.8L1454.7,636.2L1453.1,637.1L1450.6,632.6L1452.2,631.7L1449.7,627.2L1448.1,628.1L1445.5,623.6L1447.1,622.8L1444.5,618.3L1442.9,619.2L1440.3,614.7L1441.8,613.8L1439.2,609.4L1437.6,610.3L1435.0,605.9L1436.5,605.0L1433.8,600.6L1432.2,601.6L1429.5,597.2L1431.0,596.2L1428.2,591.9L1426.7,592.9L1423.9,588.5L1425.4,587.6L1422.6,583.2L1421.0,584.2L1418.2,579.9L1419.7,578.9L1416.8,574.7L1415.3,575.7L1412.4,571.4L1413.8,570.4L1410.9,566.2L1409.4,567.2L1406.5,563.0L1407.9,562.0L1404.9,557.8L1403.4,558.8L1400.4,554.6L1401.8,553.6L1398.8,549.4L1397.3,550.5L1394.3,546.4L1395.7,545.3L1392.6,541.2L1391.1,542.3L1388.0,538.2L1389.4,537.1L1386.2,533.0L1384.8,534.2L1381.6,530.1L1383.0,529.0L1379.8,525.0L1378.4,526.1L1375.1,522.1L1376.5,521.0L1373.2,517.0L1371.8,518.2L1368.5,514.2L1369.9,513.1L1366.6,509.1L1365.2,510.3L1361.8,506.4L1363.2,505.2L1359.8,501.3L1358.4,502.5L1355.0,498.6L1356.4,497.5L1352.9,493.6L1351.6,494.8L1348.1,491.0L1349.4,489.8L1345.9,486.0L1344.6,487.2L1341.1,483.5L1342.4,482.2L1338.9,478.5L1337.6,479.7L1334.0,476.0L1335.3,474.8L1331.7,471.1L1330.4,472.3L1326.8,468.7L1328.1,467.4L1324.4,463.7L1323.1,465.0L1319.5,461.4L1320.7,460.1L1317.0,456.5L1315.8,457.8L1312.1,454.3L1313.3,452.9L1309.6,449.4L1308.3,450.7L1304.6,447.2L1305.8,445.9L1302.0,442.4L1300.8,443.7L1296.9,440.3L1298.2,438.9L1294.3,435.5L1293.1,436.8L1289.2,433.4L1290.4,432.1L1286.5,428.7L1285.4,430.0L1281.4,426.7L1282.6,425.3L1278.7,422.0L1277.5,423.4L1273.6,420.1L1274.7,418.7L1270.7,415.4L1269.6,416.8L1265.6,413.6L1266.7,412.2L1262.7,409.0L1261.5,410.4L1257.5,407.2L1258.6,405.8L1254.5,402.6L1253.4,404.0L1249.3,400.9L1250.4,399.5L1246.3,396.4L1245.2,397.8L1241.1,394.7L1242.2,393.3L1238.0,390.2L1236.9,391.7L1232.8,388.7L1233.8,387.2L1229.6,384.2L1228.6,385.7L1224.3,382.8L1225.4,381.3L1221.1,378.4L1220.1,379.8L1215.8,376.9L1216.8,375.5L1212.5,372.6L1211.5,374.1L1207.2,371.3L1208.2,369.8L1203.9,366.9L1202.9,368.5L1198.6,365.7L1199.6,364.2L1195.2,361.4L1194.2,362.9L1189.9,360.2L1190.8,358.7L1186.4,356.0L1185.5,357.6L1181.0,354.9L1182.0,353.4L1177.5,350.7L1176.6,352.3L1172.2,349.7L1173.0,348.1L1168.6,345.6L1167.7,347.2L1163.2,344.6L1164.1,343.1L1159.6,340.6L1158.7,342.1L1154.2,339.7L1155.0,338.1L1150.5,335.7L1149.6,337.2L1145.1,334.8L1145.9,333.3L1141.3,330.9L1140.5,332.5L1135.9,330.1L1136.7,328.5L1132.1,326.2L1131.3,327.9L1126.7,325.6L1127.5,324.0L1122.8,321.7L1122.0,323.3L1117.4,321.1L1118.2,319.5L1113.5,317.3L1112.7,319.0L1108.0,316.8L1108.8,315.2L1104.1,313.1L1103.3,314.7L1098.6,312.7L1099.3,311.0L1094.6,309.0L1093.9,310.6L1089.2,308.6L1089.9,307.0L1085.1,305.0L1084.4,306.6L1079.6,304.7L1080.3,303.0L1075.5,301.1L1074.9,302.8L1070.1,300.9L1070.7,299.2L1065.9,297.4L1065.2,299.1L1060.4,297.3L1061.1,295.6L1056.2,293.8L1055.6,295.5L1050.8,293.8L1051.4,292.1L1046.5,290.4L1045.9,292.1L1041.0,290.4L1041.6,288.7L1036.7,287.0L1036.1,288.8L1031.3,287.1L1031.8,285.4L1026.9,283.9L1026.3,285.6L1021.4,284.0L1022.0,282.3L1017.0,280.8L1016.5,282.5L1011.6,281.1L1012.1,279.4L1007.1,277.9L1006.6,279.6L1001.7,278.2L1002.2,276.5L997.2,275.1L996.7,276.9L991.7,275.6L992.2,273.8L987.2,272.5L986.8,274.3L981.8,273.0L982.2,271.3L977.2,270.0L976.8,271.8L971.8,270.6L972.2,268.8L967.1,267.7L966.7,269.4L961.7,268.3L962.1,266.6L957.1,265.5L956.7,267.2L951.6,266.2L952.0,264.4L947.0,263.4L946.6,265.2L941.5,264.2L941.9,262.4L936.8,261.5L936.5,263.3L931.4,262.4L931.7,260.6L926.6,259.7L926.3,261.5L921.3,260.6L921.6,258.9L916.5,258.1L916.2,259.8L911.1,259.1L911.4,257.3L906.3,256.6L906.0,258.3L900.9,257.6L901.1,255.9L896.0,255.2L895.8,257.0L890.7,256.4L890.9,254.6L885.8,254.0L885.6,255.8L880.5,255.2L880.6,253.4L875.5,252.9L875.3,254.7L870.2,254.2L870.4,252.4L865.2,252.0L865.1,253.8L860.0,253.4L860.1,251.6L855.0,251.2L854.8,253.0L849.7,252.6L849.8,250.9L844.7,250.5L844.6,252.3L839.4,252.1L839.5,250.3L834.3,250.0L834.3,251.8L829.1,251.6L829.2,249.8L824.0,249.7L824.0,251.5L818.8,251.4L818.9,249.6L813.7,249.5L813.7,251.3L808.5,251.2L808.6,249.4L803.4,249.4L803.4,251.2L798.3,251.2L798.2,249.4L793.1,249.5L793.1,251.3L788.0,251.4L787.9,249.6L782.8,249.7L782.8,251.5L777.7,251.6L777.6,249.8L772.5,250.0L772.5,251.8L767.4,252.1L767.3,250.3L762.1,250.5L762.2,252.3L757.1,252.6L757.0,250.8L751.8,251.2L752.0,252.9L746.8,253.3L746.7,251.5L741.6,251.9L741.7,253.7L736.6,254.2L736.4,252.4L731.3,252.8L731.5,254.6L726.3,255.1L726.1,253.3L721.0,253.9L721.2,255.7L716.1,256.3L715.9,254.5L710.8,255.1L711.0,256.9L705.9,257.5L705.6,255.7L700.5,256.4L700.8,258.2L695.7,258.9L695.4,257.1L690.3,257.9L690.6,259.7L685.5,260.5L685.2,258.7L680.1,259.5L680.4,261.3L675.3,262.1L675.0,260.4L669.9,261.3L670.3,263.0L665.2,264.0L664.9,262.2L659.8,263.2L660.1,264.9L655.1,265.9L654.7,264.1L649.7,265.2L650.0,266.9L645.0,268.0L644.6,266.2L639.6,267.4L640.0,269.1L635.0,270.2L634.5,268.5L629.5,269.7L629.9,271.4L624.9,272.6L624.5,270.8L619.5,272.1L619.9,273.8L614.9,275.1L614.5,273.4L609.5,274.7L610.0,276.4L605.0,277.8L604.5,276.0L599.5,277.4L600.0,279.1L595.1,280.5L594.6,278.8L589.6,280.3L590.1,282.0L585.2,283.5L584.6,281.7L579.7,283.3L580.3,284.9L575.3,286.5L574.8,284.8L569.9,286.4L570.4,288.1L565.5,289.7L565.0,288.0L560.1,289.7L560.7,291.3L555.8,293.0L555.2,291.3L550.3,293.1L550.9,294.7L546.1,296.5L545.4,294.8L540.6,296.6L541.2,298.3L536.4,300.1L535.8,298.4L531.0,300.3L531.6,301.9L526.8,303.8L526.1,302.1L521.3,304.1L522.0,305.7L517.3,307.7L516.6,306.0L511.8,308.0L512.5,309.7L507.8,311.7L507.0,310.0L502.3,312.1L503.0,313.7L498.3,315.8L497.6,314.2L492.9,316.3L493.6,317.9L488.9,320.1L488.1,318.4L483.5,320.7L484.2,322.3L479.6,324.5L478.8,322.9L474.2,325.1L474.9,326.7L470.3,329.0L469.5,327.4L464.9,329.7L465.7,331.3L461.1,333.7L460.3,332.1L455.7,334.5L456.5,336.0L452.0,338.5L451.1,336.9L446.6,339.3L447.4,340.9L442.9,343.4L442.0,341.8L437.5,344.3L438.4,345.9L433.9,348.4L433.0,346.8L428.5,349.4L429.4,351.0L425.0,353.6L424.0,352.0L419.6,354.7L420.5,356.2L416.1,358.9L415.2,357.3L410.8,360.1L411.7,361.6L407.3,364.3L406.4,362.8L402.0,365.6L403.0,367.1L398.6,369.9L397.6,368.3L393.3,371.2L394.3,372.7L390.0,375.5L389.0,374.0L384.7,376.9L385.7,378.4L381.5,381.3L380.4,379.8L376.2,382.8L377.2,384.3L373.0,387.3L372.0,385.8L367.8,388.8L368.8,390.2L364.6,393.3L363.6,391.8L359.4,394.9L360.5,396.3L356.4,399.4L355.3,398.0L351.1,401.1L352.2,402.5L348.2,405.7L347.0,404.3L343.0,407.5L344.1,408.9L340.0,412.1L338.9,410.7L334.9,413.9L336.0,415.3L332.0,418.6L330.9,417.2L326.9,420.5L328.0,421.9L324.1,425.2L322.9,423.8L319.0,427.2L320.2,428.6L316.3,432.0L315.1,430.6L311.2,434.0L312.4,435.4L308.5,438.8L307.3,437.5L303.5,440.9L304.7,442.3L300.9,445.7L299.7,444.4L295.9,448.0L297.1,449.3L293.4,452.8L292.1,451.5L288.4,455.1L289.6,456.4L285.9,460.0L284.7,458.7L281.0,462.3L282.3,463.6L278.6,467.3L277.3,466.0L273.7,469.7L275.0,470.9L271.4,474.6L270.1,473.4L266.5,477.1L267.8,478.4L264.3,482.1L262.9,480.9L259.4,484.7L260.7,485.9L257.2,489.7L255.9,488.5L252.4,492.3L253.8,493.5L250.3,497.3L249.0,496.1L245.5,500.0L246.9,501.2L243.5,505.1L242.1,503.9L238.8,507.9L240.1,509.0L236.8,513.0L235.4,511.8L232.1,515.8L233.5,516.9L230.2,520.9L228.8,519.8L225.5,523.8L226.9,524.9L223.7,528.9L222.3,527.8L219.1,531.9L220.5,533.0L217.3,537.1L215.9,536.0L212.8,540.1L214.2,541.2L211.1,545.3L209.6,544.2L206.5,548.3L208.0,549.4L204.9,553.6L203.4,552.5L200.4,556.7L201.9,557.7L198.9,562.0L197.4,560.9L194.4,565.2L195.9,566.2L193.0,570.4L191.5,569.4L188.5,573.7L190.0,574.7L187.1,579.0L185.6,578.0L182.8,582.3L184.3,583.3L181.5,587.6L179.9,586.6L177.1,591.0L178.6,591.9L175.9,596.3L174.3,595.3L171.6,599.7L173.1,600.7L170.4,605.1L168.9,604.1L166.2,608.6L167.7,609.5L165.1,613.9L163.5,613.0L160.9,617.5L162.5,618.4L159.9,622.8L158.3,621.9L155.8,626.5L157.3,627.3L154.8,631.8L153.2,631.0L150.7,635.5L152.3,636.4L149.9,640.9L148.3,640.1L145.8,644.6L147.4,645.5L145.0,650.0L143.4,649.2L141.1,653.8L142.6,654.6L140.3,659.3L138.7,658.4L136.4,663.1L138.0,663.9L135.8,668.5L134.1,667.7L131.9,672.4L133.5,673.2L131.3,677.8L129.6,677.1L127.5,681.8L129.1,682.5L127.0,687.2L125.3,686.5L123.2,691.2L124.9,692.0L122.8,696.7L121.1,696.0L119.1,700.7L120.7,701.4L118.7,706.2L117.1,705.5L115.1,710.3L116.7,711.0L114.8,715.8L113.1,715.1L111.2,719.9L112.9,720.6L111.0,725.4L109.3,724.7L107.5,729.6L109.2,730.2L107.4,735.1L105.7,734.4L103.9,739.3L105.6,739.9L103.9,744.8L102.1,744.2L100.4,749.1L102.1,749.7L100.5,754.6L98.7,754.0L97.1,758.9L98.8,759.5L97.2,764.4L95.5,763.8L93.9,768.8L95.6,769.3L94.1,774.3L92.4,773.7L90.9,778.7L92.6,779.2L91.2,784.2L89.4,783.7L88.0,788.7L89.7,789.1L88.3,794.1L86.6,793.6L85.2,798.7L86.9,799.1L85.6,804.1L83.9,803.7L82.6,808.7L84.3,809.1L83.1,814.1L81.3,813.7L80.1,818.8L81.9,819.2L80.7,824.2L78.9,823.8L77.8,828.9L79.5,829.2L78.4,834.3L76.7,833.9L75.6,839.0L77.3,839.4L76.3,844.4L74.5,844.1L73.5,849.2L75.3,849.5L74.3,854.6L72.5,854.3L71.6,859.4L73.4,859.7L72.5,864.8L70.7,864.5L69.9,869.6L71.6,869.9L70.8,875.0L69.0,874.7L68.2,879.8L70.0,880.1L69.3,885.2L67.5,885.0L66.8,890.1L68.5,890.3L67.9,895.5L66.1,895.3L65.4,900.4L67.2,900.6L66.6,905.8L64.8,905.6L64.3,910.7L66.0,910.9L65.5,916.1L63.7,915.9L63.2,921.0L65.0,921.2L64.6,926.4L62.8,926.2L62.3,931.4L64.1,931.5L63.8,936.7L61.9,936.6L61.6,941.7L63.4,941.8L63.1,947.0L61.3,946.9L61.0,952.1L62.8,952.2L62.6,957.3L60.8,957.3L60.6,962.5L62.4,962.5L62.2,967.7L60.4,967.6L60.3,972.8L62.1,972.9L62.0,978.0L60.2,978.0L60.1,983.2L61.9,983.2L61.9,988.4L60.1,988.4L60.1,993.6L61.9,993.6L62.0,998.8L60.2,998.8L60.3,1004.0L62.1,1003.9L62.2,1009.1L60.4,1009.2L60.6,1014.3L62.4,1014.3L62.6,1019.5L60.8,1019.5L61.0,1024.7L62.8,1024.6L63.1,1029.8L61.3,1029.9L61.6,1035.1L63.4,1035.0L63.7,1040.1L62.0,1040.2L62.3,1045.4L64.1,1045.3L64.6,1050.4L62.8,1050.6L63.2,1055.8L65.0,1055.6L65.5,1060.8L63.7,1060.9L64.3,1066.1L66.1,1065.9L66.6,1071.0L64.8,1071.2L65.4,1076.4L67.2,1076.2L67.9,1081.3L66.1,1081.5L66.8,1086.7L68.6,1086.4L69.3,1091.6L67.5,1091.8L68.3,1097.0L70.1,1096.7L70.8,1101.8L69.1,1102.1L69.9,1107.2L71.7,1106.9L72.5,1112.0L70.8,1112.3L71.6,1117.4L73.4,1117.1L74.4,1122.2L72.6,1122.5L73.6,1127.6L75.4,1127.3L76.3,1132.4L74.6,1132.7L75.6,1137.8L77.4,1137.4L78.5,1142.5L76.7,1142.9L77.8,1147.9L79.6,1147.5L80.7,1152.6L79.0,1153.0L80.2,1158.0L82.0,1157.6L83.2,1162.6L81.4,1163.1L82.7,1168.1L84.4,1167.7L85.7,1172.7L84.0,1173.1L85.3,1178.1L87.1,1177.7L88.4,1182.7L86.7,1183.1L88.1,1188.1L89.8,1187.6L91.2,1192.6L89.5,1193.1L91.0,1198.1L92.7,1197.6L94.2,1202.5L92.5,1203.0L94.0,1208.0L95.8,1207.4L97.3,1212.4L95.7,1212.9L97.2,1217.8L99.0,1217.3L100.6,1222.2L98.9,1222.8L100.6,1227.7L102.3,1227.1L104.0,1232.0L102.3,1232.5L104.0,1237.4L105.8,1236.8L107.5,1241.7L105.9,1242.3L107.6,1247.1L109.4,1246.5L111.2,1251.3L109.5,1252.0L111.4,1256.8L113.1,1256.1L115.0,1261.0L113.3,1261.6L115.3,1266.4L117.0,1265.7L118.9,1270.5L117.3,1271.2L119.3,1276.0L121.0,1275.3L123.0,1280.0L121.4,1280.7L123.4,1285.5L125.1,1284.7L127.2,1289.5L125.6,1290.2L127.7,1294.9L129.4,1294.2L131.5,1298.9L129.9,1299.6L132.1,1304.3L133.8,1303.5L136.0,1308.2L134.4,1308.9L136.6,1313.6L138.3,1312.8L140.6,1317.4L139.0,1318.2L141.3,1322.9L142.9,1322.0L145.3,1326.6L143.7,1327.4L146.1,1332.0L147.7,1331.2L150.1,1335.8L148.6,1336.6L151.0,1341.1L152.6,1340.3L155.1,1344.8L153.5,1345.7L156.1,1350.2L157.6,1349.3L160.2,1353.8L158.6,1354.7L161.2,1359.2L162.8,1358.2L165.4,1362.7L163.9,1363.6L166.5,1368.1L168.1,1367.1L170.7,1371.6L169.2,1372.5L171.9,1376.9L173.5,1375.9L176.2,1380.3L174.7,1381.3L177.4,1385.6L179.0,1384.7L181.8,1389.0L180.3,1390.0L183.1,1394.3L184.6,1393.3L187.5,1397.6L186.0,1398.6L188.9,1402.9L190.4,1401.9L193.3,1406.2L191.8,1407.2L194.8,1411.4L196.2,1410.4L199.2,1414.6L197.8,1415.6L200.8,1419.9L202.2,1418.8L205.3,1423.0L203.8,1424.0L206.9,1428.2L208.3,1427.1L211.4,1431.3L210.0,1432.3L213.1,1436.5L214.5,1435.4L217.7,1439.5L216.3,1440.6L219.4,1444.6L220.9,1443.5L224.1,1447.6L222.7,1448.7L225.9,1452.7L227.3,1451.6L230.6,1455.6L229.2,1456.7L232.5,1460.7L233.8,1459.6L237.2,1463.5L235.8,1464.7L239.1,1468.6L240.5,1467.5L243.9,1471.4L242.5,1472.6L245.9,1476.5L247.3,1475.3L250.7,1479.1L249.3,1480.3L252.8,1484.2L254.1,1483.0L257.6,1486.8L256.3,1488.0L259.8,1491.8L261.1,1490.6L264.6,1494.4L263.3,1495.6L266.9,1499.3L268.2,1498.1L271.7,1501.8L270.4,1503.1L274.0,1506.8L275.3,1505.5L279.0,1509.2L277.7,1510.5L281.3,1514.1L282.6,1512.8L286.3,1516.5L285.0,1517.8L288.7,1521.4L290.0,1520.1L293.7,1523.6L292.5,1524.9L296.2,1528.5L297.5,1527.2L301.2,1530.7L300.0,1532.0L303.8,1535.5L305.0,1534.2L308.9,1537.7L307.6,1539.0L311.5,1542.4L312.7,1541.1L316.6,1544.5L315.4,1545.8L319.3,1549.2L320.5,1547.9L324.4,1551.2L323.2,1552.6L327.2,1555.9L328.3,1554.6L332.3,1557.9L331.2,1559.2L335.2,1562.5L336.3,1561.1L340.3,1564.4L339.2,1565.8L343.2,1569.0L344.3,1567.6L348.4,1570.8L347.3,1572.2L351.4,1575.4L352.5,1573.9L356.6,1577.1L355.5,1578.5L359.6,1581.6L360.7,1580.1L364.9,1583.2L363.8,1584.7L368.0,1587.7L369.0,1586.3L373.2,1589.3L372.2,1590.7L376.4,1593.7L377.4,1592.2L381.7,1595.2L380.6,1596.7L384.9,1599.6L385.9,1598.1L390.2,1601.0L389.2,1602.5L393.5,1605.4L394.5,1603.9L398.8,1606.7L397.8,1608.2L402.2,1611.0L403.1,1609.5L407.5,1612.3L406.5,1613.8L410.9,1616.5L411.9,1615.0L416.2,1617.7L415.3,1619.2L419.7,1621.9L420.7,1620.4L425.1,1623.0L424.2,1624.6L428.6,1627.2L429.5,1625.6L434.0,1628.2L433.1,1629.8L437.6,1632.3L438.5,1630.8L443.0,1633.3L442.1,1634.9L446.6,1637.4L447.5,1635.8L452.0,1638.2L451.2,1639.8L455.7,1642.3L456.6,1640.7L461.2,1643.1L460.3,1644.6L464.9,1647.0L465.7,1645.4L470.3,1647.7L469.5,1649.3L474.2,1651.7L475.0,1650.0L479.6,1652.3L478.8,1653.9L483.5,1656.2L484.2,1654.5L488.9,1656.7L488.1,1658.3L492.8,1660.5L493.6,1658.9L498.3,1661.0L497.5,1662.7L502.3,1664.8L503.0,1663.1L507.7,1665.2L507.0,1666.8L511.7,1668.9L512.5,1667.2L517.2,1669.2L516.5,1670.9L521.3,1672.9L522.0,1671.2L526.8,1673.1L526.1,1674.8L530.9,1676.7L531.6,1675.0L536.4,1676.9L535.7,1678.5L540.5,1680.4L541.2,1678.7L546.0,1680.5L545.4,1682.2L550.2,1684.0L550.9,1682.3L555.7,1684.0L555.1,1685.7L560.0,1687.4L560.6,1685.7L565.5,1687.4L564.9,1689.1L569.8,1690.7L570.3,1689.0L575.2,1690.6L574.7,1692.3L579.6,1693.9L580.2,1692.1L585.1,1693.7L584.6,1695.4L589.5,1696.9L590.0,1695.2L595.0,1696.6L594.5,1698.3L599.4,1699.8L599.9,1698.0L604.9,1699.4L604.4,1701.2L609.4,1702.5L609.9,1700.8L614.8,1702.1L614.4,1703.8L619.4,1705.1L619.8,1703.4L624.8,1704.7L624.4,1706.4L629.4,1707.6L629.8,1705.9L634.8,1707.0L634.4,1708.8L639.5,1709.9L639.9,1708.2L644.9,1709.3L644.5,1711.1L649.6,1712.1L649.9,1710.4L655.0,1711.4L654.6,1713.2L659.7,1714.2L660.0,1712.4L665.1,1713.4L664.8,1715.2L669.8,1716.1L670.2,1714.3L675.2,1715.2L674.9,1717.0L680.0,1717.9L680.3,1716.1L685.4,1716.9L685.1,1718.7L690.2,1719.5L690.5,1717.7L695.6,1718.5L695.3,1720.3L700.4,1721.0L700.7,1719.2L705.8,1719.9L705.6,1721.7L710.7,1722.3L710.9,1720.6L716.0,1721.2L715.8,1723.0L720.9,1723.6L721.1,1721.8L726.3,1722.3L726.1,1724.1L731.2,1724.6L731.4,1722.8L736.5,1723.3L736.4,1725.1L741.5,1725.5L741.7,1723.7L746.8,1724.2L746.6,1725.9L751.8,1726.3L751.9,1724.5L757.1,1724.9L757.0,1726.7L762.1,1727.0L762.2,1725.2L767.4,1725.4L767.3,1727.2L772.4,1727.5L772.5,1725.7L777.6,1725.9L777.6,1727.7L782.7,1727.8L782.8,1726.0L787.9,1726.1L787.9,1727.9L793.1,1728.0L793.1,1726.2L798.2,1726.3L798.2,1728.1L803.4,1728.1L803.4,1726.3L808.6,1726.3L808.6,1728.1L813.7,1728.0L813.7,1726.2L818.9,1726.1L818.9,1727.9L824.1,1727.8L824.0,1726.0L829.2,1725.9L829.2,1727.7L834.4,1727.5L834.3,1725.7L839.4,1725.4L839.5,1727.2L844.7,1727.0L844.6,1725.2L849.7,1724.9L849.8,1726.7L855.0,1726.3L854.9,1724.6L860.0,1724.2L860.2,1726.0L865.3,1725.6L865.2,1723.8L870.3,1723.3L870.4,1725.1L875.6,1724.7L875.4,1722.9L880.5,1722.4L880.7,1724.2L885.9,1723.6L885.7,1721.8L890.8,1721.2L891.0,1723.0L896.1,1722.4L895.9,1720.6L901.0,1720.0L901.3,1721.8L906.4,1721.1L906.1,1719.3L911.2,1718.6L911.5,1720.4L916.6,1719.6L916.3,1717.9L921.4,1717.1L921.7,1718.9L926.8,1718.0L926.5,1716.3L931.6,1715.4L931.9,1717.2L937.0,1716.3L936.7,1714.5L941.7,1713.6L942.1,1715.4L947.1,1714.4L946.8,1712.6L951.9,1711.6L952.2,1713.4L957.3,1712.3L956.9,1710.6L961.9,1709.5L962.3,1711.3L967.4,1710.2L967.0,1708.5L972.0,1707.3L972.4,1709.1L977.5,1707.9L977.0,1706.2L982.1,1704.9L982.5,1706.7L987.5,1705.4L987.1,1703.7L992.1,1702.4L992.5,1704.2L997.5,1702.9L997.1,1701.2L1002.0,1699.8L1002.5,1701.5L1007.5,1700.1L1007.0,1698.4L1012.0,1697.0L1012.5,1698.8L1017.4,1697.3L1016.9,1695.6L1021.8,1694.1L1022.4,1695.8L1027.3,1694.3L1026.8,1692.6L1031.7,1691.0L1032.3,1692.8L1037.2,1691.2L1036.6,1689.5L1041.5,1687.8L1042.1,1689.6L1047.0,1687.9L1046.4,1686.2L1051.3,1684.5L1051.9,1686.3L1056.8,1684.5L1056.2,1682.8L1061.0,1681.1L1061.6,1682.8L1066.5,1681.0L1065.9,1679.3L1070.7,1677.5L1071.3,1679.2L1076.2,1677.3L1075.5,1675.7L1080.3,1673.7L1081.0,1675.4L1085.8,1673.5L1085.1,1671.9L1089.9,1669.9L1090.6,1671.6L1095.3,1669.6L1094.6,1667.9L1099.4,1665.9L1100.1,1667.6L1104.9,1665.5L1104.1,1663.9L1108.8,1661.8L1109.6,1663.4L1114.3,1661.3L1113.6,1659.7L1118.2,1657.5L1119.0,1659.2L1123.7,1656.9L1122.9,1655.3L1127.6,1653.1L1128.4,1654.7L1133.0,1652.5L1132.3,1650.9L1136.9,1648.6L1137.7,1650.2L1142.3,1647.9L1141.5,1646.3L1146.1,1643.9L1146.9,1645.5L1151.5,1643.1L1150.7,1641.6L1155.2,1639.1L1156.1,1640.7L1160.7,1638.3L1159.8,1636.7L1164.3,1634.2L1165.2,1635.8L1169.7,1633.3L1168.9,1631.7L1173.3,1629.2L1174.3,1630.8L1178.7,1628.1L1177.8,1626.6L1182.3,1624.0L1183.2,1625.6L1187.7,1622.9L1186.8,1621.4L1191.2,1618.7L1192.1,1620.3L1196.5,1617.5L1195.6,1616.0L1200.0,1613.3L1200.9,1614.8L1205.3,1612.0L1204.3,1610.5L1208.7,1607.7L1209.7,1609.3L1214.0,1606.4L1213.0,1604.9L1217.3,1602.0L1218.3,1603.6L1222.6,1600.7L1221.6,1599.2L1225.9,1596.3L1226.9,1597.8L1231.2,1594.8L1230.1,1593.3L1234.3,1590.3L1235.4,1591.8L1239.6,1588.8L1238.6,1587.3L1242.7,1584.3L1243.8,1585.8L1248.0,1582.7L1246.9,1581.2L1251.0,1578.1L1252.1,1579.6L1256.3,1576.4L1255.2,1575.0L1259.3,1571.9L1260.4,1573.3L1264.4,1570.1L1263.3,1568.7L1267.4,1565.5L1268.5,1566.9L1272.5,1563.6L1271.4,1562.2L1275.4,1559.0L1276.6,1560.4L1280.5,1557.0L1279.4,1555.7L1283.3,1552.3L1284.5,1553.7L1288.5,1550.3L1287.3,1549.0L1291.2,1545.6L1292.4,1547.0L1296.3,1543.5L1295.1,1542.2L1298.9,1538.7L1300.1,1540.1L1304.0,1536.6L1302.8,1535.3L1306.6,1531.8L1307.8,1533.1L1311.6,1529.6L1310.4,1528.3L1314.1,1524.7L1315.4,1526.0L1319.1,1522.4L1317.9,1521.1L1321.6,1517.5L1322.8,1518.8L1326.5,1515.2L1325.3,1513.9L1328.9,1510.3L1330.2,1511.5L1333.8,1507.8L1332.5,1506.6L1336.1,1502.9L1337.4,1504.1L1341.0,1500.4L1339.7,1499.1L1343.3,1495.4L1344.6,1496.6L1348.1,1492.8L1346.8,1491.6L1350.3,1487.8L1351.6,1489.0L1355.1,1485.2L1353.8,1484.0L1357.2,1480.1L1358.6,1481.3L1362.0,1477.4L1360.6,1476.2L1364.0,1472.3L1365.4,1473.5L1368.8,1469.6L1367.4,1468.4L1370.7,1464.5L1372.1,1465.6L1375.4,1461.6L1374.1,1460.5L1377.3,1456.5L1378.7,1457.6L1382.0,1453.6L1380.6,1452.5L1383.8,1448.4L1385.2,1449.5L1388.4,1445.5L1387.0,1444.4L1390.2,1440.3L1391.6,1441.4L1394.8,1437.3L1393.3,1436.2L1396.4,1432.0L1397.9,1433.1L1401.0,1429.0L1399.5,1427.9L1402.6,1423.7L1404.0,1424.8L1407.1,1420.6L1405.6,1419.5L1408.6,1415.3L1410.1,1416.4L1413.0,1412.1L1411.6,1411.1L1414.5,1406.8L1416.0,1407.9L1418.9,1403.6L1417.4,1402.6L1420.3,1398.3L1421.8,1399.3L1424.7,1394.9L1423.1,1394.0L1426.0,1389.6L1427.5,1390.6L1430.3,1386.2L1428.8,1385.3L1431.5,1380.9L1433.0,1381.8L1435.8,1377.4L1434.2,1376.5L1436.9,1372.1L1438.5,1373.0L1441.1,1368.6L1439.6,1367.7L1442.2,1363.2L1443.8,1364.1L1446.4,1359.6L1444.8,1358.7L1447.4,1354.3L1449.0,1355.1L1451.5,1350.6L1450.0,1349.7L1452.5,1345.2L1454.0,1346.1L1456.5,1341.5L1454.9,1340.7L1457.4,1336.1L1459.0,1337.0L1461.4,1332.4L1459.8,1331.6L1462.2,1327.0L1463.8,1327.8L1466.1,1323.2L1464.5,1322.4L1466.9,1317.7L1468.5,1318.5L1470.8,1313.9L1469.1,1313.1L1471.4,1308.5L1473.0,1309.2L1475.3,1304.5L1473.6,1303.8L1475.8,1299.1L1477.4,1299.9L1479.6,1295.1L1478.0,1294.4L1480.1,1289.7L1481.7,1290.4L1483.8,1285.7L1482.2,1285.0L1484.2,1280.2L1485.9,1280.9L1487.9,1276.1L1486.3,1275.5L1488.3,1270.7L1489.9,1271.4L1491.9,1266.6L1490.2,1265.9L1492.1,1261.1L1493.8,1261.8L1495.7,1256.9L1494.0,1256.3L1495.9,1251.5L1497.6,1252.1L1499.4,1247.2L1497.7,1246.6L1499.5,1241.8L1501.2,1242.4L1502.9,1237.5L1501.3,1236.9L1503.0,1232.0L1504.7,1232.6L1506.4,1227.7L1504.7,1227.1L1506.3,1222.2L1508.0,1222.8L1509.6,1217.9L1507.9,1217.3L1509.5,1212.4L1511.2,1212.9L1512.8,1208.0L1511.1,1207.5L1512.6,1202.5L1514.3,1203.0L1515.8,1198.1L1514.1,1197.6L1515.5,1192.6L1517.2,1193.1L1518.7,1188.1L1516.9,1187.6L1518.3,1182.6L1520.0,1183.1L1521.4,1178.1L1519.6,1177.6L1521.0,1172.6L1522.7,1173.1L1524.0,1168.1L1522.2,1167.6L1523.5,1162.6L1525.2,1163.0L1526.4,1158.0L1524.7,1157.6L1525.8,1152.5L1527.6,1152.9L1528.7,1147.9L1527.0,1147.5L1528.1,1142.4L1529.8,1142.8L1530.9,1137.7L1529.1,1137.4L1530.1,1132.3L1531.9,1132.6L1532.9,1127.6L1531.1,1127.2L1532.1,1122.1L1533.9,1122.5L1534.8,1117.4L1533.0,1117.0L1533.9,1112.0L1535.7,1112.3L1536.5,1107.1L1534.7,1106.9L1535.5,1101.7L1537.3,1102.0L1538.1,1096.9L1536.3,1096.6L1537.1,1091.5L1538.8,1091.8L1539.6,1086.6L1537.8,1086.4L1538.4,1081.3L1540.2,1081.5L1540.9,1076.3L1539.1,1076.1L1539.7,1071.0L1541.5,1071.2L1542.0,1066.0L1540.2,1065.8L1540.8,1060.7L1542.5,1060.9L1543.0,1055.7L1541.2,1055.5L1541.7,1050.4L1543.5,1050.5L1543.9,1045.4L1542.1,1045.2L1542.5,1040.1L1544.3,1040.2L1544.6,1035.0L1542.8,1034.9L1543.1,1029.8L1544.9,1029.9L1545.2,1024.7L1543.4,1024.6L1543.6,1019.4L1545.4,1019.5L1545.6,1014.3L1543.8,1014.3L1544.0,1009.1L1545.8,1009.1L1545.9,1004.0L1544.1,1003.9L1544.2,998.7L1546.0,998.8L1546.1,993.6L1544.3,993.6L1544.3,988.4ZM1525.5,988.4L1525.5,983.4L1527.3,983.3L1527.2,978.3L1525.4,978.3L1525.3,973.3L1527.1,973.2L1527.0,968.2L1525.2,968.2L1525.1,963.2L1526.8,963.1L1526.6,958.1L1524.8,958.2L1524.6,953.1L1526.4,953.0L1526.1,948.0L1524.3,948.1L1524.0,943.1L1525.8,942.9L1525.5,937.9L1523.7,938.0L1523.3,933.0L1525.1,932.9L1524.7,927.8L1522.9,928.0L1522.4,923.0L1524.2,922.8L1523.7,917.8L1521.9,917.9L1521.4,912.9L1523.2,912.7L1522.7,907.7L1520.8,907.9L1520.3,902.9L1522.0,902.7L1521.4,897.7L1519.6,897.9L1519.0,892.9L1520.7,892.7L1520.0,887.7L1518.2,887.9L1517.5,882.9L1519.3,882.7L1518.5,877.7L1516.7,878.0L1515.9,873.0L1517.7,872.7L1516.8,867.7L1515.0,868.0L1514.2,863.1L1515.9,862.8L1515.0,857.8L1513.2,858.1L1512.3,853.2L1514.1,852.8L1513.1,847.9L1511.3,848.2L1510.3,843.3L1512.0,842.9L1511.0,838.0L1509.2,838.4L1508.1,833.5L1509.9,833.1L1508.8,828.1L1507.0,828.6L1505.8,823.6L1507.6,823.2L1506.4,818.3L1504.6,818.8L1503.4,813.9L1505.1,813.4L1503.9,808.5L1502.1,809.0L1500.8,804.1L1502.5,803.7L1501.2,798.8L1499.4,799.3L1498.1,794.4L1499.8,794.0L1498.4,789.1L1496.7,789.6L1495.3,784.8L1496.9,784.3L1495.5,779.4L1493.7,780.0L1492.3,775.2L1494.0,774.6L1492.4,769.8L1490.7,770.4L1489.1,765.6L1490.8,765.0L1489.2,760.3L1487.5,760.8L1485.9,756.1L1487.6,755.5L1485.9,750.7L1484.2,751.3L1482.5,746.6L1484.2,746.0L1482.4,741.2L1480.7,741.9L1479.0,737.2L1480.6,736.5L1478.8,731.8L1477.1,732.5L1475.3,727.8L1477.0,727.1L1475.1,722.5L1473.4,723.1L1471.5,718.5L1473.2,717.8L1471.3,713.1L1469.5,713.8L1467.6,709.2L1469.2,708.5L1467.3,703.9L1465.6,704.6L1463.6,700.0L1465.2,699.3L1463.1,694.7L1461.5,695.4L1459.4,690.8L1461.0,690.1L1458.9,685.5L1457.2,686.3L1455.1,681.7L1456.7,681.0L1454.5,676.4L1452.9,677.2L1450.7,672.7L1452.3,671.9L1450.0,667.4L1448.4,668.2L1446.1,663.7L1447.7,662.9L1445.4,658.5L1443.8,659.3L1441.5,654.8L1443.0,654.0L1440.7,649.6L1439.0,650.4L1436.7,646.0L1438.2,645.2L1435.8,640.7L1434.2,641.6L1431.7,637.2L1433.3,636.4L1430.8,632.0L1429.2,632.9L1426.7,628.5L1428.2,627.7L1425.7,623.3L1424.1,624.2L1421.6,619.9L1423.1,619.0L1420.5,614.7L1418.9,615.6L1416.3,611.3L1417.8,610.4L1415.1,606.1L1413.6,607.1L1410.9,602.9L1412.4,601.9L1409.7,597.7L1408.1,598.7L1405.4,594.5L1406.9,593.5L1404.1,589.3L1402.6,590.3L1399.8,586.1L1401.3,585.1L1398.4,581.0L1396.9,582.0L1394.1,577.9L1395.5,576.9L1392.6,572.7L1391.1,573.8L1388.2,569.7L1389.7,568.7L1386.7,564.6L1385.2,565.7L1382.3,561.6L1383.7,560.6L1380.7,556.5L1379.3,557.6L1376.2,553.6L1377.6,552.5L1374.6,548.5L1373.1,549.6L1370.1,545.7L1371.5,544.6L1368.4,540.6L1366.9,541.8L1363.8,537.8L1365.2,536.7L1362.0,532.8L1360.6,534.0L1357.4,530.1L1358.8,528.9L1355.6,525.1L1354.2,526.2L1350.9,522.4L1352.3,521.2L1349.0,517.4L1347.7,518.6L1344.4,514.8L1345.7,513.6L1342.4,509.9L1341.0,511.1L1337.7,507.3L1339.0,506.1L1335.6,502.4L1334.3,503.6L1330.9,499.9L1332.2,498.7L1328.8,495.0L1327.5,496.3L1324.0,492.6L1325.3,491.4L1321.8,487.8L1320.5,489.0L1317.0,485.4L1318.3,484.2L1314.8,480.6L1313.5,481.8L1310.0,478.3L1311.2,477.0L1307.6,473.5L1306.4,474.8L1302.8,471.3L1304.0,470.0L1300.4,466.5L1299.2,467.8L1295.5,464.3L1296.8,463.0L1293.1,459.6L1291.8,460.9L1288.2,457.5L1289.4,456.2L1285.6,452.8L1284.4,454.2L1280.7,450.8L1281.9,449.5L1278.1,446.1L1276.9,447.5L1273.1,444.2L1274.3,442.8L1270.5,439.6L1269.3,440.9L1265.5,437.7L1266.7,436.3L1262.8,433.1L1261.6,434.5L1257.8,431.3L1258.9,429.9L1255.0,426.7L1253.9,428.1L1249.9,425.0L1251.1,423.6L1247.1,420.5L1246.0,421.9L1242.0,418.8L1243.1,417.4L1239.1,414.4L1238.0,415.8L1234.0,412.8L1235.1,411.3L1231.1,408.3L1230.0,409.8L1225.9,406.8L1227.0,405.4L1222.9,402.4L1221.9,403.9L1217.8,401.0L1218.8,399.5L1214.7,396.6L1213.7,398.1L1209.5,395.3L1210.5,393.8L1206.4,390.9L1205.4,392.4L1201.2,389.6L1202.2,388.2L1198.0,385.4L1197.0,386.9L1192.8,384.2L1193.8,382.6L1189.5,379.9L1188.6,381.5L1184.3,378.8L1185.3,377.3L1181.0,374.6L1180.1,376.1L1175.8,373.5L1176.7,372.0L1172.4,369.4L1171.5,371.0L1167.2,368.4L1168.1,366.8L1163.7,364.3L1162.8,365.9L1158.5,363.4L1159.3,361.8L1155.0,359.4L1154.1,360.9L1149.7,358.5L1150.6,356.9L1146.1,354.5L1145.3,356.1L1140.9,353.7L1141.7,352.1L1137.3,349.8L1136.4,351.4L1132.0,349.1L1132.8,347.5L1128.3,345.2L1127.5,346.8L1123.0,344.6L1123.8,343.0L1119.3,340.7L1118.5,342.4L1114.0,340.2L1114.8,338.6L1110.2,336.4L1109.4,338.0L1104.9,335.9L1105.6,334.3L1101.1,332.2L1100.3,333.8L1095.8,331.8L1096.5,330.1L1091.9,328.1L1091.2,329.8L1086.6,327.8L1087.3,326.1L1082.6,324.1L1081.9,325.8L1077.3,323.9L1078.0,322.2L1073.3,320.3L1072.6,322.0L1068.0,320.1L1068.6,318.5L1064.0,316.6L1063.3,318.3L1058.6,316.5L1059.3,314.8L1054.6,313.1L1053.9,314.7L1049.2,313.0L1049.8,311.3L1045.1,309.6L1044.5,311.3L1039.8,309.7L1040.4,308.0L1035.6,306.3L1035.0,308.0L1030.3,306.4L1030.8,304.7L1026.0,303.2L1025.5,304.9L1020.7,303.3L1021.3,301.6L1016.5,300.1L1015.9,301.8L1011.1,300.4L1011.6,298.7L1006.8,297.2L1006.3,299.0L1001.5,297.6L1002.0,295.8L997.2,294.5L996.7,296.2L991.8,294.9L992.3,293.1L987.4,291.8L987.0,293.6L982.1,292.3L982.6,290.6L977.7,289.3L977.3,291.1L972.4,289.9L972.8,288.1L967.9,287.0L967.5,288.7L962.6,287.6L963.0,285.8L958.1,284.8L957.7,286.5L952.8,285.5L953.2,283.7L948.3,282.7L947.9,284.4L943.0,283.4L943.3,281.7L938.4,280.7L938.1,282.5L933.1,281.6L933.5,279.8L928.5,278.9L928.2,280.7L923.2,279.8L923.5,278.1L918.6,277.2L918.3,279.0L913.3,278.2L913.6,276.5L908.6,275.7L908.4,277.5L903.4,276.8L903.7,275.0L898.7,274.3L898.4,276.1L893.5,275.4L893.7,273.7L888.7,273.0L888.5,274.8L883.5,274.3L883.7,272.5L878.7,271.9L878.5,273.7L873.5,273.2L873.7,271.4L868.7,271.0L868.5,272.7L863.5,272.3L863.7,270.5L858.7,270.1L858.5,271.9L853.5,271.5L853.7,269.7L848.6,269.4L848.5,271.2L843.5,270.9L843.6,269.1L838.6,268.9L838.5,270.7L833.5,270.4L833.6,268.6L828.5,268.4L828.5,270.2L823.5,270.1L823.5,268.3L818.5,268.2L818.4,270.0L813.4,269.9L813.5,268.1L808.4,268.0L808.4,269.8L803.4,269.8L803.4,268.0L798.4,268.0L798.4,269.8L793.4,269.9L793.3,268.1L788.3,268.2L788.4,270.0L783.3,270.1L783.3,268.3L778.3,268.4L778.3,270.2L773.3,270.4L773.2,268.6L768.2,268.8L768.3,270.6L763.3,270.9L763.2,269.1L758.2,269.4L758.3,271.2L753.3,271.5L753.1,269.7L748.1,270.0L748.3,271.8L743.3,272.2L743.1,270.4L738.1,270.9L738.3,272.6L733.3,273.1L733.1,271.3L728.1,271.8L728.3,273.6L723.3,274.1L723.1,272.3L718.1,272.9L718.3,274.6L713.3,275.2L713.1,273.4L708.1,274.1L708.3,275.8L703.4,276.5L703.1,274.7L698.1,275.4L698.4,277.2L693.4,277.9L693.1,276.1L688.2,276.9L688.4,278.7L683.5,279.5L683.2,277.7L678.2,278.5L678.5,280.3L673.6,281.1L673.3,279.3L668.3,280.3L668.6,282.0L663.7,283.0L663.4,281.2L658.4,282.1L658.8,283.9L653.9,284.9L653.5,283.1L648.6,284.2L648.9,285.9L644.0,287.0L643.6,285.2L638.7,286.3L639.1,288.0L634.2,289.2L633.8,287.4L628.9,288.6L629.3,290.3L624.5,291.5L624.0,289.7L619.1,291.0L619.6,292.7L614.7,294.0L614.3,292.2L609.4,293.6L609.9,295.2L605.0,296.6L604.5,294.8L599.7,296.2L600.2,297.9L595.4,299.3L594.8,297.6L590.0,299.0L590.5,300.7L585.7,302.2L585.2,300.5L580.4,302.0L580.9,303.7L576.1,305.2L575.6,303.5L570.8,305.1L571.3,306.7L566.6,308.4L566.0,306.6L561.2,308.3L561.8,309.9L557.1,311.6L556.4,309.9L551.7,311.6L552.3,313.3L547.6,315.0L547.0,313.3L542.2,315.1L542.9,316.7L538.2,318.6L537.5,316.8L532.8,318.7L533.5,320.3L528.8,322.2L528.1,320.5L523.5,322.5L524.1,324.1L519.5,326.0L518.8,324.3L514.1,326.3L514.8,327.9L510.2,330.0L509.5,328.3L504.9,330.3L505.6,331.9L501.0,334.0L500.3,332.3L495.7,334.5L496.4,336.0L491.9,338.2L491.1,336.5L486.5,338.7L487.3,340.3L482.8,342.5L482.0,340.9L477.4,343.1L478.2,344.7L473.7,347.0L472.9,345.3L468.4,347.6L469.2,349.2L464.8,351.5L463.9,349.9L459.5,352.3L460.3,353.8L455.9,356.2L455.0,354.6L450.6,357.1L451.4,358.6L447.0,361.1L446.1,359.4L441.7,362.0L442.6,363.5L438.2,366.0L437.3,364.4L433.0,367.0L433.9,368.5L429.5,371.1L428.6,369.5L424.3,372.1L425.2,373.6L420.9,376.3L419.9,374.7L415.7,377.4L416.6,378.9L412.4,381.6L411.4,380.1L407.1,382.8L408.1,384.3L403.9,387.1L402.9,385.5L398.7,388.3L399.6,389.8L395.5,392.6L394.4,391.1L390.3,394.0L391.3,395.4L387.2,398.3L386.1,396.8L382.0,399.8L383.0,401.2L378.9,404.1L377.8,402.7L373.8,405.6L374.8,407.1L370.8,410.1L369.7,408.6L365.6,411.6L366.7,413.1L362.7,416.1L361.6,414.7L357.6,417.8L358.7,419.2L354.7,422.3L353.6,420.9L349.6,424.0L350.7,425.4L346.8,428.6L345.7,427.2L341.8,430.4L342.9,431.7L339.0,435.0L337.8,433.6L334.0,436.8L335.1,438.2L331.3,441.5L330.1,440.1L326.3,443.4L327.5,444.8L323.7,448.1L322.5,446.7L318.7,450.1L319.9,451.4L316.2,454.8L315.0,453.5L311.2,456.9L312.5,458.2L308.8,461.7L307.5,460.3L303.9,463.8L305.1,465.1L301.4,468.6L300.2,467.3L296.6,470.8L297.8,472.1L294.2,475.7L293.0,474.4L289.4,478.0L290.7,479.2L287.1,482.8L285.8,481.6L282.3,485.2L283.6,486.4L280.1,490.1L278.8,488.8L275.3,492.5L276.6,493.7L273.2,497.4L271.9,496.2L268.5,499.9L269.8,501.1L266.4,504.9L265.0,503.7L261.7,507.4L263.0,508.6L259.7,512.4L258.3,511.2L255.0,515.0L256.4,516.2L253.1,520.0L251.7,518.9L248.4,522.7L249.8,523.9L246.6,527.8L245.2,526.6L242.0,530.5L243.4,531.6L240.2,535.6L238.8,534.4L235.6,538.4L237.0,539.5L233.9,543.5L232.5,542.3L229.4,546.3L230.8,547.4L227.7,551.4L226.3,550.3L223.2,554.4L224.7,555.4L221.6,559.5L220.2,558.4L217.2,562.5L218.6,563.5L215.7,567.6L214.2,566.6L211.3,570.7L212.7,571.7L209.8,575.9L208.3,574.8L205.5,579.0L206.9,580.0L204.1,584.2L202.6,583.1L199.8,587.4L201.3,588.3L198.5,592.5L197.0,591.6L194.2,595.8L195.7,596.8L193.0,601.0L191.4,600.0L188.7,604.3L190.2,605.3L187.6,609.5L186.0,608.6L183.4,612.9L184.9,613.8L182.3,618.2L180.7,617.2L178.2,621.6L179.7,622.5L177.2,626.8L175.6,625.9L173.1,630.3L174.6,631.2L172.1,635.6L170.5,634.7L168.1,639.1L169.6,640.0L167.2,644.4L165.6,643.5L163.2,648.0L164.8,648.8L162.4,653.3L160.8,652.5L158.5,657.0L160.0,657.8L157.8,662.3L156.1,661.4L153.9,666.0L155.4,666.7L153.2,671.3L151.6,670.5L149.4,675.0L151.0,675.8L148.8,680.4L147.1,679.6L145.0,684.2L146.6,684.9L144.5,689.5L142.8,688.8L140.8,693.4L142.4,694.1L140.3,698.7L138.7,698.0L136.6,702.6L138.3,703.3L136.3,708.0L134.6,707.3L132.7,711.9L134.3,712.6L132.4,717.3L130.7,716.6L128.8,721.3L130.5,722.0L128.6,726.7L126.9,726.0L125.1,730.7L126.7,731.4L125.0,736.1L123.3,735.5L121.5,740.2L123.2,740.8L121.5,745.6L119.7,745.0L118.0,749.7L119.7,750.3L118.1,755.1L116.3,754.5L114.7,759.3L116.4,759.9L114.8,764.7L113.1,764.1L111.5,768.9L113.2,769.5L111.7,774.3L110.0,773.7L108.5,778.6L110.2,779.1L108.7,783.9L107.0,783.4L105.6,788.3L107.3,788.8L105.9,793.7L104.1,793.2L102.8,798.0L104.5,798.5L103.2,803.4L101.4,802.9L100.1,807.8L101.9,808.3L100.6,813.2L98.9,812.7L97.6,817.7L99.4,818.1L98.2,823.0L96.4,822.6L95.3,827.5L97.0,827.9L95.9,832.8L94.1,832.5L93.1,837.4L94.8,837.8L93.8,842.7L92.0,842.4L91.0,847.3L92.7,847.7L91.8,852.6L90.0,852.3L89.0,857.3L90.8,857.6L89.9,862.6L88.1,862.3L87.2,867.3L89.0,867.6L88.2,872.6L86.4,872.3L85.6,877.3L87.3,877.5L86.6,882.5L84.8,882.3L84.1,887.3L85.8,887.6L85.1,892.6L83.3,892.3L82.7,897.4L84.5,897.6L83.8,902.6L82.0,902.4L81.4,907.4L83.2,907.6L82.7,912.6L80.9,912.5L80.4,917.5L82.1,917.7L81.7,922.7L79.9,922.6L79.4,927.6L81.2,927.8L80.8,932.8L79.0,932.7L78.6,937.7L80.4,937.8L80.1,942.9L78.3,942.8L78.0,947.8L79.8,947.9L79.5,953.0L77.7,952.9L77.5,958.0L79.3,958.0L79.1,963.1L77.3,963.0L77.1,968.1L78.9,968.2L78.8,973.2L77.0,973.2L76.9,978.3L78.7,978.3L78.6,983.3L76.8,983.3L76.8,988.4L78.6,988.4L78.6,993.5L76.8,993.5L76.9,998.5L78.7,998.5L78.8,1003.6L77.0,1003.6L77.1,1008.7L78.9,1008.6L79.1,1013.7L77.3,1013.8L77.5,1018.8L79.3,1018.8L79.5,1023.8L77.7,1023.9L78.0,1029.0L79.8,1028.9L80.1,1033.9L78.3,1034.0L78.6,1039.1L80.4,1039.0L80.8,1044.0L79.0,1044.1L79.4,1049.2L81.2,1049.0L81.7,1054.1L79.9,1054.2L80.4,1059.3L82.2,1059.1L82.7,1064.1L80.9,1064.3L81.5,1069.4L83.3,1069.2L83.9,1074.2L82.1,1074.4L82.7,1079.4L84.5,1079.2L85.2,1084.2L83.4,1084.5L84.1,1089.5L85.9,1089.2L86.7,1094.2L84.9,1094.5L85.7,1099.5L87.5,1099.2L88.3,1104.2L86.5,1104.5L87.3,1109.5L89.1,1109.2L90.0,1114.2L88.3,1114.5L89.2,1119.5L91.0,1119.2L91.9,1124.1L90.2,1124.5L91.1,1129.4L92.9,1129.1L93.9,1134.0L92.2,1134.4L93.2,1139.3L95.0,1139.0L96.1,1143.9L94.4,1144.3L95.5,1149.2L97.3,1148.8L98.4,1153.8L96.7,1154.2L97.9,1159.1L99.7,1158.6L100.9,1163.6L99.2,1164.0L100.4,1168.9L102.2,1168.4L103.5,1173.3L101.8,1173.8L103.1,1178.7L104.9,1178.2L106.2,1183.1L104.5,1183.5L105.9,1188.4L107.7,1187.9L109.1,1192.7L107.4,1193.2L108.9,1198.1L110.6,1197.6L112.1,1202.4L110.4,1202.9L111.9,1207.7L113.7,1207.2L115.2,1212.0L113.6,1212.5L115.2,1217.3L116.9,1216.8L118.5,1221.6L116.9,1222.1L118.5,1226.9L120.3,1226.3L121.9,1231.1L120.3,1231.6L122.0,1236.4L123.7,1235.8L125.5,1240.5L123.9,1241.1L125.6,1245.9L127.4,1245.2L129.2,1249.9L127.5,1250.5L129.4,1255.3L131.1,1254.6L133.0,1259.3L131.4,1259.9L133.3,1264.6L135.0,1263.9L136.9,1268.6L135.3,1269.2L137.3,1273.9L139.0,1273.2L141.0,1277.8L139.4,1278.5L141.4,1283.1L143.1,1282.4L145.2,1287.0L143.6,1287.7L145.7,1292.3L147.4,1291.5L149.5,1296.1L147.9,1296.8L150.1,1301.4L151.8,1300.6L154.0,1305.1L152.4,1305.9L154.6,1310.5L156.3,1309.6L158.5,1314.1L157.0,1314.9L159.3,1319.4L160.9,1318.6L163.2,1323.1L161.7,1323.9L164.1,1328.3L165.7,1327.5L168.1,1331.9L166.5,1332.8L168.9,1337.2L170.6,1336.3L173.0,1340.7L171.5,1341.6L174.0,1346.0L175.6,1345.1L178.1,1349.4L176.5,1350.3L179.1,1354.7L180.7,1353.7L183.2,1358.1L181.7,1359.0L184.3,1363.3L185.9,1362.4L188.5,1366.7L187.0,1367.6L189.7,1371.9L191.3,1370.9L194.0,1375.2L192.5,1376.1L195.2,1380.4L196.7,1379.4L199.5,1383.6L198.0,1384.6L200.8,1388.8L202.3,1387.8L205.1,1391.9L203.7,1392.9L206.5,1397.1L208.0,1396.1L210.9,1400.2L209.4,1401.2L212.3,1405.4L213.8,1404.3L216.7,1408.4L215.3,1409.4L218.3,1413.5L219.7,1412.5L222.7,1416.5L221.3,1417.6L224.3,1421.6L225.8,1420.5L228.8,1424.6L227.4,1425.6L230.4,1429.6L231.9,1428.5L235.0,1432.5L233.6,1433.6L236.7,1437.6L238.1,1436.4L241.3,1440.4L239.9,1441.5L243.1,1445.4L244.5,1444.3L247.7,1448.1L246.3,1449.3L249.5,1453.2L250.9,1452.0L254.2,1455.8L252.8,1457.0L256.1,1460.8L257.5,1459.6L260.8,1463.4L259.4,1464.6L262.8,1468.4L264.1,1467.2L267.5,1470.9L266.2,1472.1L269.5,1475.9L270.9,1474.7L274.3,1478.4L273.0,1479.6L276.4,1483.3L277.7,1482.0L281.2,1485.7L279.9,1486.9L283.4,1490.6L284.7,1489.3L288.2,1492.9L286.9,1494.2L290.5,1497.8L291.7,1496.5L295.3,1500.1L294.0,1501.3L297.6,1504.9L298.9,1503.6L302.5,1507.1L301.2,1508.4L304.9,1511.9L306.1,1510.6L309.8,1514.1L308.6,1515.4L312.2,1518.8L313.5,1517.5L317.2,1520.9L316.0,1522.2L319.7,1525.6L320.9,1524.3L324.7,1527.6L323.5,1528.9L327.3,1532.3L328.5,1530.9L332.3,1534.2L331.1,1535.6L334.9,1538.9L336.1,1537.5L339.9,1540.7L338.8,1542.1L342.7,1545.3L343.8,1543.9L347.7,1547.1L346.6,1548.5L350.5,1551.7L351.7,1550.2L355.6,1553.4L354.5,1554.8L358.5,1557.9L359.6,1556.5L363.6,1559.5L362.5,1560.9L366.5,1564.0L367.6,1562.6L371.6,1565.6L370.6,1567.0L374.6,1570.0L375.7,1568.5L379.7,1571.5L378.7,1572.9L382.8,1575.9L383.9,1574.4L388.0,1577.3L387.0,1578.8L391.1,1581.6L392.1,1580.1L396.3,1583.0L395.3,1584.5L399.4,1587.3L400.5,1585.8L404.7,1588.6L403.7,1590.0L407.9,1592.8L408.9,1591.3L413.1,1594.0L412.2,1595.5L416.4,1598.2L417.4,1596.6L421.6,1599.3L420.7,1600.8L425.0,1603.5L426.0,1601.9L430.3,1604.5L429.4,1606.0L433.7,1608.6L434.6,1607.0L438.9,1609.6L438.1,1611.1L442.4,1613.6L443.3,1612.0L447.7,1614.5L446.8,1616.1L451.2,1618.5L452.1,1616.9L456.5,1619.4L455.7,1620.9L460.1,1623.3L461.0,1621.7L465.4,1624.1L464.6,1625.6L469.0,1628.0L469.9,1626.3L474.4,1628.6L473.6,1630.2L478.1,1632.5L478.9,1630.8L483.4,1633.1L482.6,1634.6L487.1,1636.9L487.9,1635.2L492.5,1637.4L491.7,1639.0L496.3,1641.1L497.0,1639.4L501.6,1641.6L500.9,1643.1L505.4,1645.2L506.2,1643.6L510.8,1645.6L510.1,1647.2L514.7,1649.2L515.4,1647.5L520.0,1649.5L519.4,1651.1L524.0,1653.1L524.7,1651.4L529.3,1653.3L528.7,1654.9L533.3,1656.8L534.0,1655.1L538.7,1657.0L538.0,1658.6L542.7,1660.4L543.4,1658.7L548.1,1660.5L547.5,1662.1L552.2,1663.9L552.8,1662.2L557.5,1663.9L556.9,1665.6L561.7,1667.3L562.3,1665.5L567.0,1667.2L566.5,1668.8L571.2,1670.5L571.8,1668.7L576.6,1670.3L576.0,1672.0L580.8,1673.5L581.4,1671.8L586.1,1673.3L585.6,1675.0L590.4,1676.5L591.0,1674.7L595.7,1676.2L595.2,1677.9L600.1,1679.3L600.6,1677.5L605.4,1678.9L604.9,1680.6L609.8,1682.0L610.2,1680.2L615.1,1681.5L614.6,1683.2L619.5,1684.5L620.0,1682.7L624.8,1684.0L624.4,1685.7L629.2,1686.9L629.7,1685.1L634.6,1686.3L634.1,1688.0L639.0,1689.2L639.5,1687.4L644.3,1688.5L643.9,1690.2L648.8,1691.3L649.2,1689.5L654.1,1690.6L653.8,1692.3L658.7,1693.3L659.1,1691.5L664.0,1692.5L663.6,1694.3L668.6,1695.2L668.9,1693.4L673.8,1694.3L673.5,1696.1L678.5,1697.0L678.8,1695.2L683.7,1696.0L683.4,1697.7L688.4,1698.6L688.7,1696.8L693.6,1697.5L693.3,1699.3L698.3,1700.0L698.6,1698.2L703.5,1698.9L703.3,1700.7L708.3,1701.4L708.5,1699.6L713.5,1700.2L713.3,1702.0L718.2,1702.6L718.5,1700.8L723.4,1701.3L723.2,1703.1L728.2,1703.7L728.4,1701.8L733.4,1702.3L733.2,1704.1L738.2,1704.6L738.4,1702.8L743.4,1703.2L743.2,1705.0L748.2,1705.4L748.4,1703.6L753.4,1703.9L753.2,1705.7L758.2,1706.1L758.4,1704.2L763.4,1704.5L763.3,1706.3L768.3,1706.6L768.4,1704.8L773.4,1705.0L773.3,1706.8L778.3,1707.0L778.4,1705.2L783.4,1705.3L783.3,1707.1L788.3,1707.3L788.4,1705.4L793.4,1705.5L793.4,1707.3L798.4,1707.4L798.4,1705.6L803.4,1705.6L803.4,1707.4L808.4,1707.4L808.4,1705.6L813.4,1705.5L813.4,1707.3L818.5,1707.2L818.4,1705.5L823.4,1705.3L823.5,1707.1L828.5,1707.0L828.4,1705.2L833.4,1705.0L833.5,1706.8L838.5,1706.6L838.4,1704.8L843.4,1704.5L843.5,1706.3L848.5,1706.0L848.4,1704.3L853.4,1703.9L853.6,1705.7L858.6,1705.4L858.4,1703.6L863.4,1703.2L863.6,1705.0L868.6,1704.6L868.4,1702.8L873.4,1702.3L873.6,1704.1L878.6,1703.6L878.4,1701.9L883.4,1701.3L883.6,1703.1L888.6,1702.6L888.3,1700.8L893.3,1700.2L893.5,1702.0L898.5,1701.4L898.3,1699.6L903.3,1698.9L903.5,1700.7L908.5,1700.0L908.2,1698.3L913.2,1697.5L913.5,1699.3L918.4,1698.5L918.1,1696.8L923.1,1696.0L923.4,1697.8L928.3,1696.9L928.0,1695.2L933.0,1694.3L933.3,1696.1L938.2,1695.2L937.9,1693.5L942.8,1692.5L943.2,1694.3L948.1,1693.3L947.8,1691.6L952.7,1690.6L953.0,1692.4L958.0,1691.3L957.6,1689.6L962.5,1688.5L962.9,1690.3L967.8,1689.2L967.4,1687.5L972.2,1686.3L972.7,1688.1L977.6,1686.9L977.1,1685.2L982.0,1684.0L982.5,1685.8L987.3,1684.5L986.9,1682.8L991.7,1681.5L992.2,1683.3L997.1,1682.0L996.6,1680.3L1001.4,1679.0L1001.9,1680.7L1006.8,1679.3L1006.3,1677.7L1011.1,1676.2L1011.6,1678.0L1016.4,1676.5L1015.9,1674.9L1020.7,1673.4L1021.2,1675.1L1026.0,1673.6L1025.5,1671.9L1030.3,1670.4L1030.9,1672.1L1035.6,1670.5L1035.1,1668.9L1039.8,1667.3L1040.4,1669.0L1045.2,1667.3L1044.6,1665.7L1049.3,1664.0L1049.9,1665.7L1054.7,1664.0L1054.1,1662.4L1058.7,1660.6L1059.4,1662.4L1064.1,1660.5L1063.5,1658.9L1068.2,1657.1L1068.8,1658.8L1073.5,1657.0L1072.9,1655.3L1077.5,1653.4L1078.2,1655.2L1082.9,1653.2L1082.2,1651.6L1086.8,1649.7L1087.6,1651.4L1092.2,1649.4L1091.5,1647.8L1096.1,1645.8L1096.8,1647.5L1101.4,1645.4L1100.7,1643.8L1105.3,1641.7L1106.1,1643.4L1110.6,1641.3L1109.9,1639.7L1114.4,1637.6L1115.2,1639.2L1119.8,1637.0L1119.0,1635.5L1123.5,1633.3L1124.3,1634.9L1128.8,1632.7L1128.1,1631.1L1132.5,1628.8L1133.4,1630.5L1137.9,1628.2L1137.1,1626.6L1141.5,1624.3L1142.4,1625.9L1146.8,1623.5L1146.0,1622.0L1150.4,1619.6L1151.3,1621.2L1155.7,1618.8L1154.9,1617.2L1159.2,1614.8L1160.1,1616.4L1164.5,1613.9L1163.7,1612.4L1168.0,1609.8L1168.9,1611.4L1173.3,1608.9L1172.4,1607.4L1176.7,1604.8L1177.7,1606.4L1182.0,1603.7L1181.0,1602.2L1185.3,1599.6L1186.3,1601.2L1190.6,1598.5L1189.6,1597.0L1193.9,1594.3L1194.9,1595.8L1199.1,1593.1L1198.1,1591.6L1202.3,1588.8L1203.4,1590.4L1207.6,1587.6L1206.6,1586.1L1210.7,1583.3L1211.8,1584.8L1215.9,1581.9L1214.9,1580.5L1219.0,1577.6L1220.1,1579.1L1224.2,1576.2L1223.2,1574.8L1227.3,1571.8L1228.4,1573.3L1232.4,1570.3L1231.4,1568.9L1235.4,1565.9L1236.5,1567.4L1240.6,1564.3L1239.5,1562.9L1243.5,1559.9L1244.6,1561.3L1248.6,1558.2L1247.5,1556.8L1251.5,1553.7L1252.6,1555.1L1256.5,1552.0L1255.4,1550.6L1259.3,1547.4L1260.5,1548.9L1264.4,1545.7L1263.3,1544.3L1267.1,1541.1L1268.3,1542.5L1272.2,1539.2L1271.0,1537.8L1274.8,1534.6L1276.0,1535.9L1279.8,1532.6L1278.7,1531.3L1282.4,1528.0L1283.6,1529.3L1287.4,1525.9L1286.2,1524.6L1289.9,1521.2L1291.2,1522.6L1294.9,1519.2L1293.7,1517.8L1297.4,1514.4L1298.6,1515.7L1302.3,1512.3L1301.0,1511.0L1304.7,1507.5L1305.9,1508.8L1309.5,1505.2L1308.3,1504.0L1311.9,1500.4L1313.1,1501.7L1316.7,1498.1L1315.4,1496.9L1319.0,1493.3L1320.2,1494.5L1323.8,1490.9L1322.5,1489.7L1326.0,1486.0L1327.3,1487.3L1330.7,1483.6L1329.4,1482.4L1332.9,1478.7L1334.2,1479.9L1337.6,1476.2L1336.3,1475.0L1339.7,1471.2L1341.0,1472.5L1344.4,1468.7L1343.0,1467.5L1346.3,1463.7L1347.7,1464.9L1351.0,1461.1L1349.7,1459.9L1352.9,1456.1L1354.3,1457.3L1357.6,1453.4L1356.2,1452.2L1359.4,1448.4L1360.8,1449.5L1364.0,1445.6L1362.6,1444.5L1365.8,1440.6L1367.2,1441.7L1370.3,1437.8L1368.9,1436.6L1372.0,1432.7L1373.5,1433.8L1376.6,1429.8L1375.1,1428.7L1378.2,1424.7L1379.6,1425.8L1382.7,1421.8L1381.2,1420.7L1384.2,1416.6L1385.7,1417.7L1388.7,1413.6L1387.2,1412.6L1390.2,1408.5L1391.6,1409.5L1394.6,1405.4L1393.1,1404.4L1396.0,1400.3L1397.5,1401.3L1400.3,1397.1L1398.9,1396.1L1401.7,1392.0L1403.2,1393.0L1406.0,1388.8L1404.5,1387.8L1407.3,1383.6L1408.8,1384.6L1411.5,1380.3L1410.0,1379.3L1412.7,1375.1L1414.3,1376.1L1417.0,1371.8L1415.4,1370.8L1418.1,1366.6L1419.6,1367.5L1422.3,1363.2L1420.7,1362.3L1423.3,1357.9L1424.9,1358.9L1427.4,1354.5L1425.9,1353.6L1428.4,1349.3L1430.0,1350.2L1432.5,1345.8L1430.9,1344.9L1433.4,1340.5L1435.0,1341.4L1437.4,1337.0L1435.9,1336.1L1438.3,1331.7L1439.9,1332.5L1442.3,1328.1L1440.7,1327.2L1443.0,1322.8L1444.6,1323.6L1446.9,1319.1L1445.4,1318.3L1447.6,1313.8L1449.3,1314.6L1451.5,1310.1L1449.9,1309.3L1452.1,1304.8L1453.8,1305.6L1456.0,1301.1L1454.3,1300.3L1456.5,1295.7L1458.1,1296.5L1460.3,1291.9L1458.6,1291.2L1460.7,1286.6L1462.4,1287.3L1464.5,1282.7L1462.8,1282.0L1464.9,1277.4L1466.5,1278.1L1468.5,1273.5L1466.9,1272.8L1468.8,1268.1L1470.5,1268.8L1472.4,1264.2L1470.8,1263.5L1472.7,1258.8L1474.4,1259.5L1476.2,1254.8L1474.6,1254.1L1476.4,1249.4L1478.1,1250.1L1479.9,1245.4L1478.2,1244.7L1480.0,1240.0L1481.7,1240.7L1483.4,1235.9L1481.8,1235.3L1483.5,1230.6L1485.2,1231.2L1486.8,1226.4L1485.2,1225.8L1486.8,1221.0L1488.5,1221.6L1490.1,1216.8L1488.4,1216.3L1490.0,1211.5L1491.7,1212.0L1493.3,1207.2L1491.5,1206.7L1493.0,1201.9L1494.8,1202.4L1496.3,1197.6L1494.5,1197.1L1496.0,1192.2L1497.7,1192.7L1499.1,1187.9L1497.4,1187.4L1498.8,1182.5L1500.5,1183.0L1501.8,1178.2L1500.1,1177.7L1501.4,1172.8L1503.2,1173.3L1504.4,1168.4L1502.7,1168.0L1503.9,1163.1L1505.7,1163.5L1506.9,1158.6L1505.2,1158.2L1506.3,1153.3L1508.1,1153.7L1509.2,1148.8L1507.5,1148.4L1508.6,1143.4L1510.3,1143.8L1511.4,1138.9L1509.6,1138.5L1510.7,1133.6L1512.4,1133.9L1513.4,1129.0L1511.7,1128.6L1512.6,1123.7L1514.4,1124.0L1515.3,1119.1L1513.6,1118.7L1514.5,1113.8L1516.2,1114.1L1517.1,1109.1L1515.3,1108.8L1516.2,1103.8L1517.9,1104.1L1518.7,1099.1L1517.0,1098.9L1517.7,1093.9L1519.5,1094.1L1520.2,1089.1L1518.4,1088.9L1519.1,1083.9L1520.9,1084.1L1521.6,1079.1L1519.8,1078.9L1520.4,1073.9L1522.2,1074.1L1522.8,1069.1L1521.0,1068.9L1521.5,1063.9L1523.3,1064.1L1523.8,1059.0L1522.0,1058.9L1522.5,1053.8L1524.3,1054.0L1524.7,1049.0L1523.0,1048.8L1523.4,1043.8L1525.2,1043.9L1525.5,1038.9L1523.7,1038.8L1524.1,1033.7L1525.9,1033.9L1526.2,1028.8L1524.4,1028.7L1524.6,1023.7L1526.4,1023.8L1526.7,1018.7L1524.9,1018.6L1525.1,1013.6L1526.9,1013.7L1527.0,1008.6L1525.2,1008.6L1525.3,1003.5L1527.1,1003.6L1527.2,998.5L1525.4,998.5L1525.5,993.4L1527.3,993.5L1527.3,988.4Z" fill="#3d6698" fill-rule="evenodd"/>
<path d="M808,981L810.7,978.4L821,959.5L836.1,933.1L843.7,918L856.9,895.4L866.4,872.8L876.2,849.5L890.9,828.5L902.4,816L904.5,807.6L912,803L918.1,807.6L920.2,820L916,832.7L904,854L897.1,866.2L894.6,872.8L881.4,895.4L866.3,914.3L847.4,944.5L828.6,969L819.1,984L812,988Z" fill="#3d6698" fill-opacity="0.88"/>
<path d="M816,972L830,950L846,924L860,900L872,876L884,852L896,834L901,838L893,856L882,880L868,904L852,930L836,954L822,972Z" fill="#3a70a4" fill-opacity="0.5"/>
<path d="M809,982L818,966L826,953L830,955L821,970L812,986Z" fill="#2c88bc" fill-opacity="0.6"/>
<path d="M878.6,878.6h2.6v2.6h-2.6zM910.6,824.3h2.9v2.9h-2.9zM814.8,977.0h2.9v2.9h-2.9zM884.1,875.9h1.4v1.4h-1.4zM855.3,900.2h2.2v2.2h-2.2zM861.2,879.7h1.6v1.6h-1.6zM843.9,936.8h2.6v2.6h-2.6zM830.0,956.0h1.4v1.4h-1.4zM867.1,873.2h1.2v1.2h-1.2zM893.9,830.8h1.6v1.6h-1.6zM916.9,818.9h1.7v1.7h-1.7zM908.9,819.0h2.4v2.4h-2.4zM835.9,949.2h2.4v2.4h-2.4zM915.7,821.8h1.7v1.7h-1.7zM844.2,918.3h1.5v1.5h-1.5zM817.6,970.4h2.3v2.3h-2.3zM812.9,981.7h1.8v1.8h-1.8zM846.3,931.2h2.1v2.1h-2.1zM843.4,928.2h2.5v2.5h-2.5zM819.7,973.5h1.2v1.2h-1.2zM893.2,858.1h1.2v1.2h-1.2zM888.4,846.7h2.2v2.2h-2.2zM811.5,979.7h1.5v1.5h-1.5zM902.1,816.4h2.6v2.6h-2.6zM912.9,828.6h1.8v1.8h-1.8zM847.8,921.8h2.6v2.6h-2.6zM824.2,964.4h2.6v2.6h-2.6zM889.6,831.0h2.9v2.9h-2.9zM820.3,966.0h2.3v2.3h-2.3zM900.9,824.3h2.9v2.9h-2.9zM863.5,887.6h1.8v1.8h-1.8zM826.7,950.1h1.5v1.5h-1.5zM889.8,870.0h1.5v1.5h-1.5zM818.8,974.9h2.2v2.2h-2.2zM849.3,911.1h2.3v2.3h-2.3zM893.8,841.1h2.0v2.0h-2.0zM819.3,973.5h1.3v1.3h-1.3zM866.4,901.0h1.4v1.4h-1.4zM893.3,862.3h2.3v2.3h-2.3zM883.7,843.9h2.0v2.0h-2.0zM829.1,957.9h1.7v1.7h-1.7zM864.2,909.0h2.7v2.7h-2.7zM908.8,815.6h2.1v2.1h-2.1zM884.6,857.8h1.7v1.7h-1.7zM847.9,910.8h1.9v1.9h-1.9zM919.1,818.8h2.3v2.3h-2.3zM859.5,895.7h1.4v1.4h-1.4zM841.9,937.3h2.8v2.8h-2.8zM851.4,922.5h2.6v2.6h-2.6zM884.4,865.6h2.6v2.6h-2.6zM850.7,921.6h1.7v1.7h-1.7zM864.5,901.7h2.4v2.4h-2.4zM845.8,934.6h2.4v2.4h-2.4zM861.8,878.5h2.2v2.2h-2.2zM838.6,940.3h2.0v2.0h-2.0zM896.3,844.7h2.6v2.6h-2.6zM848.4,923.8h2.5v2.5h-2.5zM892.1,839.6h2.7v2.7h-2.7zM902.4,836.1h3.0v3.0h-3.0zM908.0,819.6h2.2v2.2h-2.2zM830.9,955.1h2.9v2.9h-2.9zM862.5,902.5h2.5v2.5h-2.5zM879.1,854.4h2.6v2.6h-2.6zM872.9,884.9h2.0v2.0h-2.0zM879.3,878.8h2.3v2.3h-2.3zM875.6,854.6h1.5v1.5h-1.5zM858.1,908.2h1.6v1.6h-1.6zM882.9,866.8h1.3v1.3h-1.3zM855.3,899.6h1.3v1.3h-1.3zM824.2,958.7h1.5v1.5h-1.5z" fill="#1a1a1a" fill-opacity="0.85"/>
<path d="M904,826L908,812L915,806L920,810L917,822L911,832Z" fill="#3d6698"/>
<circle cx="913" cy="818" r="2" fill="#1a1a1a"/>
<path d="M908,796L914,794L922,796L924,801L918,803L910,801Z" fill="#3a70a4"/>
<rect x="911" y="788" width="9" height="4" fill="#3d5a8a"/>
<rect x="924" y="805" width="4" height="9" fill="#3d5a8a"/>
<circle cx="928" cy="764" r="3" fill="#3a70a4"/>
<circle cx="934.5" cy="752.5" r="3" fill="#3a70a4"/>
<circle cx="957.5" cy="711.5" r="3.2" fill="#3a70a4"/>
<circle cx="983" cy="665" r="4" fill="#347cb0"/>
<path d="M804.1,1014.0h2.0v2.0h-2.0zM786.2,984.8h1.5v1.5h-1.5zM819.1,1021.2h2.4v2.4h-2.4zM794.8,1021.2h1.1v1.1h-1.1zM807.9,1009.1h1.2v1.2h-1.2zM791.6,993.9h1.4v1.4h-1.4zM806.4,978.5h1.2v1.2h-1.2zM816.4,1019.6h2.3v2.3h-2.3zM800.2,1013.4h1.8v1.8h-1.8zM797.9,968.4h1.3v1.3h-1.3zM829.2,993.1h1.9v1.9h-1.9zM786.8,1009.4h1.6v1.6h-1.6zM799.0,978.2h1.7v1.7h-1.7zM789.1,963.8h1.2v1.2h-1.2zM789.9,994.7h1.8v1.8h-1.8zM793.9,974.5h1.5v1.5h-1.5zM804.6,968.1h1.2v1.2h-1.2zM812.0,984.2h1.9v1.9h-1.9zM802.1,1016.0h1.9v1.9h-1.9zM798.8,976.2h2.4v2.4h-2.4zM776.1,995.8h1.6v1.6h-1.6zM790.1,995.2h2.1v2.1h-2.1zM807.4,1005.4h2.1v2.1h-2.1zM789.6,966.3h2.3v2.3h-2.3zM794.0,1003.4h2.4v2.4h-2.4zM808.7,979.2h1.2v1.2h-1.2zM791.4,983.2h2.3v2.3h-2.3zM788.1,1023.0h1.2v1.2h-1.2zM812.6,992.7h1.3v1.3h-1.3zM823.9,1007.1h1.5v1.5h-1.5zM795.4,1000.5h2.5v2.5h-2.5zM803.1,1003.2h2.0v2.0h-2.0zM795.2,981.1h2.0v2.0h-2.0zM813.8,968.5h1.3v1.3h-1.3zM803.5,1006.7h2.3v2.3h-2.3zM789.6,983.9h1.0v1.0h-1.0zM793.0,984.9h1.7v1.7h-1.7zM799.0,977.7h1.2v1.2h-1.2zM810.2,1001.2h1.6v1.6h-1.6zM793.6,980.4h1.3v1.3h-1.3zM818.0,986.6h1.9v1.9h-1.9zM791.6,1004.4h2.5v2.5h-2.5zM792.8,982.5h1.6v1.6h-1.6zM809.2,1001.0h1.5v1.5h-1.5zM797.0,1016.7h2.4v2.4h-2.4zM776.5,1003.0h1.1v1.1h-1.1zM811.6,980.0h1.1v1.1h-1.1zM811.1,979.1h2.5v2.5h-2.5zM819.8,979.7h1.5v1.5h-1.5zM796.5,1004.6h2.1v2.1h-2.1zM780.9,982.7h1.7v1.7h-1.7zM794.7,979.8h1.6v1.6h-1.6zM793.0,1000.3h1.9v1.9h-1.9zM801.9,1003.6h2.1v2.1h-2.1zM779.3,980.1h1.3v1.3h-1.3zM805.0,1004.2h1.6v1.6h-1.6zM812.4,980.8h2.0v2.0h-2.0zM829.5,1005.4h2.2v2.2h-2.2zM794.8,1013.2h2.0v2.0h-2.0zM795.3,980.4h1.8v1.8h-1.8zM787.4,982.2h2.0v2.0h-2.0zM781.5,988.1h1.8v1.8h-1.8zM786.5,966.5h1.3v1.3h-1.3zM813.6,987.0h2.4v2.4h-2.4zM795.4,1009.4h1.4v1.4h-1.4zM789.8,980.0h1.3v1.3h-1.3zM809.2,1006.0h1.4v1.4h-1.4zM810.3,979.3h1.4v1.4h-1.4zM796.0,1000.5h1.5v1.5h-1.5zM785.7,997.0h2.2v2.2h-2.2zM801.6,964.3h2.1v2.1h-2.1zM787.9,1017.9h1.5v1.5h-1.5zM797.5,978.3h1.3v1.3h-1.3zM815.1,972.4h1.1v1.1h-1.1zM789.2,1008.7h1.0v1.0h-1.0zM798.7,1003.3h2.3v2.3h-2.3zM797.7,974.9h1.6v1.6h-1.6zM779.7,1000.5h2.6v2.6h-2.6zM819.3,1021.0h2.2v2.2h-2.2zM807.8,1007.6h2.1v2.1h-2.1zM795.2,971.8h1.4v1.4h-1.4zM792.3,977.5h2.6v2.6h-2.6zM777.6,1016.4h1.2v1.2h-1.2zM813.1,997.7h1.0v1.0h-1.0zM807.9,978.7h1.9v1.9h-1.9zM816.8,997.4h1.6v1.6h-1.6zM794.4,999.6h1.8v1.8h-1.8zM829.4,1007.7h1.5v1.5h-1.5zM782.1,957.7h2.0v2.0h-2.0zM797.7,1001.7h2.1v2.1h-2.1zM793.2,999.3h1.2v1.2h-1.2zM796.4,1010.5h1.2v1.2h-1.2zM814.0,982.7h1.3v1.3h-1.3zM795.5,1005.4h1.7v1.7h-1.7z" fill="#3d6698"/>
<path d="M826.3,1011.9h2.1v2.1h-2.1zM797.9,1004.7h1.4v1.4h-1.4zM807.3,1023.6h1.1v1.1h-1.1zM781.1,994.3h2.2v2.2h-2.2zM788.3,1012.7h1.6v1.6h-1.6zM793.5,1002.0h2.3v2.3h-2.3zM801.2,1005.1h1.5v1.5h-1.5zM779.9,980.0h1.5v1.5h-1.5zM795.7,967.3h1.6v1.6h-1.6zM793.0,982.0h1.3v1.3h-1.3zM803.0,975.1h2.0v2.0h-2.0zM778.6,988.4h1.9v1.9h-1.9zM814.7,954.1h1.7v1.7h-1.7zM791.7,993.6h1.1v1.1h-1.1zM785.8,978.2h1.2v1.2h-1.2zM814.7,985.7h1.8v1.8h-1.8zM794.9,1005.3h2.3v2.3h-2.3zM792.9,997.2h1.3v1.3h-1.3zM812.2,985.7h1.0v1.0h-1.0zM797.1,1012.5h1.1v1.1h-1.1zM813.5,1007.0h1.7v1.7h-1.7zM818.7,982.1h1.8v1.8h-1.8zM770.3,1000.5h1.5v1.5h-1.5zM831.3,984.5h1.1v1.1h-1.1zM797.1,1001.5h2.6v2.6h-2.6zM789.7,997.4h1.5v1.5h-1.5zM792.6,983.0h1.8v1.8h-1.8zM813.8,1022.2h1.1v1.1h-1.1zM808.5,977.4h2.5v2.5h-2.5zM792.5,1024.4h1.5v1.5h-1.5zM800.8,974.9h1.4v1.4h-1.4zM787.9,998.1h2.3v2.3h-2.3zM822.8,1006.8h2.4v2.4h-2.4zM790.5,986.2h2.4v2.4h-2.4zM788.9,980.5h1.5v1.5h-1.5zM812.1,1000.9h1.9v1.9h-1.9zM790.3,993.9h1.6v1.6h-1.6zM820.4,1002.6h1.0v1.0h-1.0zM803.1,977.1h2.4v2.4h-2.4zM795.7,967.5h1.2v1.2h-1.2zM798.8,965.1h1.3v1.3h-1.3zM790.3,998.1h1.3v1.3h-1.3zM811.3,982.1h2.2v2.2h-2.2zM807.8,978.1h1.8v1.8h-1.8zM808.2,1001.2h1.0v1.0h-1.0zM790.1,998.9h1.5v1.5h-1.5zM808.5,971.1h1.5v1.5h-1.5zM810.3,1009.4h1.5v1.5h-1.5zM796.3,1010.7h1.5v1.5h-1.5zM814.2,985.7h2.2v2.2h-2.2zM790.4,994.4h1.1v1.1h-1.1zM812.3,1000.4h1.9v1.9h-1.9zM800.4,1003.4h1.4v1.4h-1.4zM801.2,978.1h2.3v2.3h-2.3zM794.8,1004.6h1.3v1.3h-1.3zM793.1,984.9h2.1v2.1h-2.1zM798.6,957.7h1.5v1.5h-1.5zM803.6,966.9h2.3v2.3h-2.3zM788.4,975.0h1.8v1.8h-1.8zM791.6,959.0h1.6v1.6h-1.6zM788.0,995.0h1.6v1.6h-1.6zM783.2,995.5h1.0v1.0h-1.0zM794.0,998.4h1.7v1.7h-1.7zM800.8,976.0h1.6v1.6h-1.6zM796.7,1007.4h1.2v1.2h-1.2zM808.7,970.3h1.6v1.6h-1.6zM820.3,985.8h2.3v2.3h-2.3zM819.4,1001.2h1.2v1.2h-1.2zM794.1,977.2h1.1v1.1h-1.1zM804.1,975.2h1.3v1.3h-1.3zM815.4,982.8h1.8v1.8h-1.8zM818.4,995.3h1.9v1.9h-1.9zM793.2,1013.1h2.0v2.0h-2.0zM821.3,981.3h2.1v2.1h-2.1zM806.2,1024.9h2.4v2.4h-2.4zM803.0,971.8h1.7v1.7h-1.7zM797.3,974.4h1.1v1.1h-1.1zM816.7,983.4h2.4v2.4h-2.4zM814.8,975.3h1.3v1.3h-1.3zM829.2,984.1h1.8v1.8h-1.8zM821.8,985.5h1.5v1.5h-1.5zM812.3,995.9h1.0v1.0h-1.0z" fill="#3a70a4"/>
<path d="M791.1,984.5h1.9v1.9h-1.9zM812.3,985.7h2.3v2.3h-2.3zM776.4,997.2h2.1v2.1h-2.1zM810.7,1002.3h1.7v1.7h-1.7zM799.7,975.9h1.9v1.9h-1.9zM815.8,1006.3h1.8v1.8h-1.8zM786.7,1008.5h2.5v2.5h-2.5zM817.4,986.5h1.2v1.2h-1.2zM785.0,967.8h1.7v1.7h-1.7zM789.8,974.7h1.6v1.6h-1.6zM801.7,978.0h2.1v2.1h-2.1zM802.4,1011.4h1.5v1.5h-1.5zM813.6,1019.5h1.4v1.4h-1.4zM797.2,1023.4h2.3v2.3h-2.3zM788.1,979.0h2.4v2.4h-2.4zM792.9,1007.1h1.7v1.7h-1.7zM808.1,1001.2h2.4v2.4h-2.4zM820.1,996.3h2.2v2.2h-2.2zM770.5,979.0h2.4v2.4h-2.4zM785.9,985.7h2.0v2.0h-2.0zM790.1,975.8h1.8v1.8h-1.8zM780.0,1005.4h1.4v1.4h-1.4zM817.1,982.0h2.3v2.3h-2.3zM820.9,1011.0h2.2v2.2h-2.2zM813.2,994.3h2.1v2.1h-2.1zM803.1,1004.9h2.0v2.0h-2.0zM784.1,1003.9h2.5v2.5h-2.5zM811.7,1006.9h1.3v1.3h-1.3zM814.6,971.3h2.1v2.1h-2.1zM784.4,975.6h2.4v2.4h-2.4zM820.9,995.3h1.3v1.3h-1.3zM803.8,1012.1h1.7v1.7h-1.7zM813.1,980.4h1.5v1.5h-1.5zM817.0,995.3h1.1v1.1h-1.1zM817.2,982.5h2.2v2.2h-2.2zM791.9,985.9h1.6v1.6h-1.6zM812.7,983.6h2.2v2.2h-2.2zM799.5,977.6h1.9v1.9h-1.9zM789.1,994.4h1.8v1.8h-1.8zM819.2,982.2h1.1v1.1h-1.1zM812.2,973.0h2.3v2.3h-2.3zM781.9,981.1h2.6v2.6h-2.6zM821.8,1015.6h1.1v1.1h-1.1zM788.2,974.7h1.0v1.0h-1.0zM798.0,972.1h1.1v1.1h-1.1zM792.8,995.4h2.4v2.4h-2.4zM814.8,992.7h1.2v1.2h-1.2zM791.4,996.9h1.6v1.6h-1.6zM797.1,1002.4h2.0v2.0h-2.0zM815.4,982.4h1.4v1.4h-1.4zM790.6,993.9h1.5v1.5h-1.5zM792.5,1009.0h2.1v2.1h-2.1zM794.9,1014.8h1.1v1.1h-1.1zM809.3,1008.7h1.9v1.9h-1.9zM814.9,1018.0h2.3v2.3h-2.3zM816.3,981.0h1.4v1.4h-1.4zM812.2,985.2h2.2v2.2h-2.2zM813.0,1001.9h2.4v2.4h-2.4zM790.3,995.4h2.0v2.0h-2.0zM797.7,954.6h2.0v2.0h-2.0zM794.4,1001.8h1.7v1.7h-1.7zM799.7,1010.4h2.2v2.2h-2.2zM818.6,1016.8h2.6v2.6h-2.6zM812.0,985.3h2.3v2.3h-2.3zM789.9,996.8h1.8v1.8h-1.8zM820.9,1014.6h1.8v1.8h-1.8zM784.8,956.9h2.0v2.0h-2.0zM812.5,997.8h1.2v1.2h-1.2zM823.6,996.8h1.8v1.8h-1.8zM792.9,996.8h1.8v1.8h-1.8zM797.8,1029.8h1.5v1.5h-1.5zM790.9,993.5h2.1v2.1h-2.1zM811.7,984.3h1.2v1.2h-1.2zM802.9,1008.6h1.8v1.8h-1.8zM775.6,997.4h2.4v2.4h-2.4zM786.0,980.5h1.7v1.7h-1.7zM790.7,979.5h1.6v1.6h-1.6zM780.7,973.8h2.2v2.2h-2.2zM815.8,986.4h1.8v1.8h-1.8zM782.5,995.4h2.6v2.6h-2.6zM812.7,988.1h1.9v1.9h-1.9zM773.2,1006.7h1.6v1.6h-1.6zM814.1,977.1h2.4v2.4h-2.4zM792.2,984.8h2.4v2.4h-2.4zM808.4,977.7h1.6v1.6h-1.6zM808.1,977.6h2.3v2.3h-2.3zM777.4,1001.6h2.0v2.0h-2.0zM803.8,1008.9h1.5v1.5h-1.5zM807.8,1023.8h1.6v1.6h-1.6zM793.2,982.8h2.4v2.4h-2.4zM825.9,1008.9h1.5v1.5h-1.5zM766.3,978.4h2.2v2.2h-2.2zM817.6,980.2h2.2v2.2h-2.2zM799.7,1011.8h1.4v1.4h-1.4zM796.0,976.7h1.6v1.6h-1.6zM780.0,1017.0h1.8v1.8h-1.8zM819.6,986.0h1.4v1.4h-1.4zM766.6,987.3h2.2v2.2h-2.2zM801.5,1017.0h2.5v2.5h-2.5zM805.9,1004.0h2.2v2.2h-2.2zM813.0,993.0h1.6v1.6h-1.6zM817.4,993.2h2.3v2.3h-2.3zM812.5,994.1h1.3v1.3h-1.3zM792.3,996.9h1.3v1.3h-1.3zM794.2,955.7h1.1v1.1h-1.1zM787.0,992.9h1.1v1.1h-1.1zM794.2,1010.1h2.3v2.3h-2.3zM805.4,1003.3h1.8v1.8h-1.8zM812.7,988.4h1.6v1.6h-1.6zM812.1,999.6h1.4v1.4h-1.4zM788.7,982.3h1.1v1.1h-1.1zM804.9,1005.5h2.0v2.0h-2.0zM801.0,977.3h1.8v1.8h-1.8zM812.8,977.3h1.1v1.1h-1.1zM827.9,976.7h1.1v1.1h-1.1zM793.3,997.3h1.4v1.4h-1.4zM811.9,970.0h1.3v1.3h-1.3zM797.0,978.8h1.6v1.6h-1.6zM813.4,1002.4h1.7v1.7h-1.7zM791.6,993.7h2.4v2.4h-2.4zM784.6,997.2h2.2v2.2h-2.2zM783.6,995.1h1.8v1.8h-1.8zM812.7,987.1h1.2v1.2h-1.2zM810.7,981.5h2.3v2.3h-2.3zM815.3,1000.3h1.1v1.1h-1.1zM821.5,997.3h1.3v1.3h-1.3zM819.0,967.5h1.0v1.0h-1.0zM809.0,1008.0h1.7v1.7h-1.7zM824.8,1000.9h2.3v2.3h-2.3zM806.4,1005.8h1.9v1.9h-1.9zM814.3,992.5h2.5v2.5h-2.5zM820.0,992.7h1.1v1.1h-1.1zM804.9,976.4h1.9v1.9h-1.9zM796.2,974.8h1.9v1.9h-1.9zM812.7,1007.1h1.1v1.1h-1.1zM801.0,1008.9h2.1v2.1h-2.1zM790.4,1008.5h2.3v2.3h-2.3zM802.9,1004.5h1.2v1.2h-1.2zM810.3,971.9h2.2v2.2h-2.2zM793.0,1000.6h1.3v1.3h-1.3zM809.5,974.2h2.4v2.4h-2.4zM796.7,1001.6h1.5v1.5h-1.5zM795.3,977.9h2.4v2.4h-2.4zM814.6,976.2h2.5v2.5h-2.5zM789.5,1003.6h2.0v2.0h-2.0zM816.4,1012.0h1.2v1.2h-1.2zM808.5,977.5h1.1v1.1h-1.1zM771.8,976.9h1.9v1.9h-1.9zM823.4,1014.5h2.3v2.3h-2.3zM815.1,986.0h2.3v2.3h-2.3zM807.2,1002.9h2.1v2.1h-2.1zM781.0,964.0h2.1v2.1h-2.1zM792.7,965.0h1.4v1.4h-1.4zM784.4,1012.1h1.6v1.6h-1.6zM788.4,987.3h1.6v1.6h-1.6zM817.2,971.5h1.3v1.3h-1.3zM794.4,1019.7h1.5v1.5h-1.5zM820.4,997.7h2.0v2.0h-2.0zM793.8,1015.7h1.9v1.9h-1.9zM802.6,1007.8h1.8v1.8h-1.8zM779.7,1014.6h1.3v1.3h-1.3zM813.4,1022.3h1.9v1.9h-1.9zM802.9,1006.9h1.6v1.6h-1.6zM794.1,967.5h1.9v1.9h-1.9zM796.3,962.5h2.3v2.3h-2.3z" fill="#3d5a8a"/>
<path d="M789,986L792,978L799,973.5L809,974L814,980L813,990L815,998L809,1004L800,1006L792,1001L789,994Z" fill="#3a70a4" fill-opacity="0.75"/>
<path d="M793,984L801,977L809,981L808,995L800,1002L792,995Z" fill="#347cb0" fill-opacity="0.55"/>
<circle cx="802.2" cy="988.2" r="3.6" fill="#1a1a1a"/>
<rect x="926.5" y="1021" width="2.5" height="2.5" fill="#3d6698"/>
<rect x="936" y="1023.5" width="5" height="3" fill="#3d6698"/>
<rect x="965" y="1019" width="4" height="3" fill="#3d6698"/>
<rect x="967" y="1031" width="5" height="4" fill="#3d6698"/>
<rect x="975.5" y="1034" width="3" height="3" fill="#3d6698"/>
<rect x="981" y="1035.5" width="4" height="5" fill="#3d6698"/>
<rect x="988" y="1037.5" width="6" height="4" fill="#3d6698"/>
<rect x="1003.5" y="1026" width="5" height="4" fill="#3d6698"/>
<rect x="1033" y="1031" width="5.5" height="6" fill="#3d6698"/>
<rect x="1057" y="1026" width="5" height="6" fill="#3d6698"/>
<rect x="855" y="1046" width="5" height="2" fill="#3d6698"/>
<rect x="921.5" y="1038" width="3.5" height="2" fill="#3d6698"/>
<rect x="871" y="988.5" width="10" height="2" fill="#3d6698"/>
<rect x="894.5" y="992.5" width="3" height="2" fill="#3d6698"/>
<rect x="907" y="993" width="3" height="2" fill="#3d6698"/>
<rect x="899" y="1013" width="4" height="3" fill="#3d6698"/>
<rect x="817" y="1036.5" width="5" height="1.5" fill="#3d6698"/>
<rect x="870.5" y="1045.5" width="4" height="2" fill="#3d6698"/>
<rect x="903" y="1033" width="3.5" height="3" fill="#3d6698"/>
<rect x="1070" y="984" width="3" height="3" fill="#3d6698"/>
<rect x="557.5" y="1055" width="5" height="5" fill="#3d6698"/>
<rect x="562.5" y="1066.5" width="6" height="6" fill="#3d6698"/>
<path d="M1003,1039.5L1010,1040L1026.5,1044.5L1027,1049.5L1015,1048L1004,1044.5Z" fill="#3d6698"/>
<g fill="none" stroke="#808080" stroke-width="2.3" stroke-linejoin="round" stroke-linecap="round">
<polyline points="291.0,220.0 296.2,227.0 288.9,236.8" stroke-width="3.3"/>
<polyline points="388.4,220.7 428.0,229.5" stroke-width="2.6"/>
<polyline points="428.0,290.2 417.7,290.2 405.2,297.6 394.7,300.7 384.2,301.8 371.6,308.1 368.5,311.2 371.6,317.5 370.0,323.8 363.3,328.0 355.9,329.0 355.3,338.4 359.1,344.7 359.1,352.1 364.7,358.3 362.2,369.9 363.3,386.6 359.1,399.2 357.0,405.5 358.6,418.1 362.2,425.4 360.1,433.8 351.7,438.0 349.6,447.4 346.5,455.8 348.6,464.2 350.7,473.6 280.5,444.9 219.7,483.4" stroke-width="3.3"/>
<polyline points="198.8,452.0 187.2,455.4 179.3,460.0 182.0,466.2 183.1,473.6 187.2,479.2 193.5,478.8 198.8,486.2 204.0,495.6 212.4,504.4 209.9,509.2 205.1,511.3 207.2,516.5 195.6,515.5 185.2,519.7 179.9,513.4 174.7,518.6 168.0,523.9 165.2,537.5 160.0,545.9 159.0,556.3 155.8,564.7 156.2,575.2 153.7,587.8 146.4,592.0 148.5,604.5 147.4,614.0 140.1,614.0 139.1,619.0" stroke-width="3.3"/>
<polyline points="428.0,486.2 423.0,491.4 415.6,491.4 402.0,519.7" stroke-width="3.3"/>
<polyline points="326.6,607.7 326.6,619.0" stroke-width="3.3"/>
<polyline points="428.0,228.4 455.2,234.7 473.0,235.8 480.4,219.0" stroke-width="3.3"/>
<polyline points="455.2,234.7 462.6,243.1 455.2,289.2 428.0,291.3" stroke-width="2.6"/>
<polyline points="515.0,219.0 516.0,229.5 526.5,237.9 527.5,246.2 525.4,251.5 530.7,269.3 532.8,291.3 539.1,299.7 542.2,309.1 539.1,323.8 532.8,332.1 537.0,342.6 534.9,355.2 524.4,352.1 513.9,361.5 509.3,372.0 511.8,386.6 508.7,392.9 503.9,398.8 528.6,401.3 526.1,420.2 527.5,434.8 525.4,447.4 528.6,453.7 522.3,462.1 513.9,468.3 505.5,483.0 451.0,482.0 428.0,487.2" stroke-width="3.3"/>
<polyline points="526.5,237.9 534.9,242.0 542.2,240.0 548.5,225.3 564.2,226.3 570.5,219.0" stroke-width="3.3"/>
<polyline points="545.3,219.0 548.5,225.3" stroke-width="3.3"/>
<polyline points="527.5,434.8 541.1,429.6 548.5,432.7 556.9,431.7 554.8,420.2 559.0,407.6 562.1,395.0 559.0,384.5 556.9,375.1 564.2,363.6 572.6,350.0 581.0,346.8 593.5,336.3 606.1,315.4 616.6,297.6 621.8,290.2 625.0,271.4 634.4,258.8 639.6,244.1 650.1,230.5 667.9,235.8 664.8,252.5 666.9,275.6 671.1,279.8 696.2,275.6 715.1,272.4 720.3,264.0 724.5,260.9 719.3,235.8 698.3,229.5 680.5,234.7 685.7,227.4 704.6,219.0" stroke-width="3.3"/>
<polyline points="715.1,272.4 720.3,286.1 725.5,307.0 723.4,332.1 729.7,342.6 736.0,352.1 748.6,359.4 754.9,356.2 763.3,362.5 775.8,359.4 792.6,352.1 811.4,351.0 828.0,355.2" stroke-width="3.3"/>
<polyline points="729.7,344.7 723.4,344.7 720.3,357.3 713.0,368.8 700.4,374.1 695.2,388.7 692.0,398.2 683.6,399.2 687.8,409.7 682.6,422.2 682.6,426.4 664.8,432.7 661.6,447.4 653.2,454.7 637.5,460.0 632.3,474.6 625.0,480.9 610.3,486.2 606.1,489.3 599.8,502.9" stroke-width="3.3"/>
<polyline points="682.6,426.4 689.9,434.8 696.2,439.0 698.3,453.7 697.3,464.2 706.7,478.8 721.3,487.2 742.3,493.5 740.2,477.8 754.9,480.9 784.2,486.2 801.0,485.1 809.4,491.4 808.3,502.9 813.5,512.3 811.4,524.9 798.9,545.9 790.5,573.1" stroke-width="3.3"/>
<polyline points="548.5,432.7 552.7,443.2 549.5,453.7 541.1,458.9 562.1,462.1 581.0,464.2 583.1,469.4 578.9,489.3 570.5,497.7 562.1,516.5" stroke-width="3.3"/>
<polyline points="805.2,219.0 807.3,229.5 815.6,237.9 828.0,246.2" stroke-width="3.3"/>
<polyline points="553.7,598.3 550.6,608.7 553.7,619.0" stroke-width="3.3"/>
<polyline points="762.2,573.1 757.0,589.9 746.5,606.6 742.3,619.0" stroke-width="3.3"/>
<polyline points="915.0,219.0 911.8,231.6 905.5,241.0 899.2,245.2 893.0,255.7 880.4,259.9 865.7,263.0 853.1,259.9 840.6,255.7 828.0,250.4" stroke-width="3.3"/>
<polyline points="828.0,355.2 840.6,352.1 853.1,345.8 856.3,348.9 883.5,339.5 890.9,342.6 934.9,350.6 941.1,332.1 944.3,308.1 965.2,312.9 986.2,308.1 1018.7,317.5 1020.8,344.7 1022.9,373.0" stroke-width="2.6"/>
<polyline points="1064.8,219.0 1066.9,227.4 1061.6,230.5 1065.8,237.9 1071.1,242.0 1067.9,252.5 1064.8,257.8 1071.1,269.3 1077.3,279.8 1078.4,288.1 1075.2,292.3 1082.6,300.7 1091.0,311.2 1100.4,319.6 1102.5,330.1 1099.3,344.7 1096.2,359.4 1099.3,363.6" stroke-width="3.3"/>
<polyline points="1111.9,369.9 1116.1,378.2 1118.2,390.8 1125.5,399.2 1132.9,403.4 1130.8,413.9 1136.0,420.2 1146.5,430.6 1150.7,439.0 1151.7,446.3 1146.5,451.6 1154.9,449.5 1163.3,460.0 1167.4,470.4 1168.5,480.9 1177.9,487.2 1175.8,499.8 1171.6,512.3 1169.5,522.8 1161.2,539.6 1154.9,548.0 1157.0,554.3 1151.7,566.8 1155.9,579.4 1159.1,592.0 1166.4,604.5 1169.5,619.0" stroke-width="3.3"/>
<polyline points="1157.0,549.6 1228.0,552.2" stroke-width="2.6"/>
<polyline points="1228.0,551.7 1576.9,562.2" stroke-width="2.6"/>
<polyline points="139.1,619.0 144.3,623.2 142.8,635.8 145.3,646.2 141.1,665.1 137.0,677.7 131.7,689.2 122.3,687.1 116.0,693.4 111.8,691.3 107.6,701.8 99.2,709.1 90.9,712.2 82.5,716.4 72.0,719.2 71.0,723.8 59.4,726.9 53.1,733.2 40.6,735.3 30.1,742.6" stroke-width="3.3"/>
<polyline points="73.0,721.7 90.9,734.2 99.2,745.8 110.8,759.4 115.6,766.7 108.7,775.1 106.6,781.4 99.2,786.6 100.3,794.0 95.1,799.2 89.8,797.1 85.6,804.4 83.5,816.0 77.2,823.3 77.2,836.9 71.0,851.6 75.1,862.1 77.2,872.5 82.5,879.9 79.3,891.4 81.4,899.8 76.2,904.0 78.3,912.3 74.1,922.8 78.3,933.3 85.6,941.7 76.2,944.8 68.9,952.2 74.1,959.5 71.0,962.6 73.0,975.2 91.9,983.6 84.6,994.1 68.9,1019.0" stroke-width="3.3"/>
<polyline points="325.5,619.0 324.5,631.6 320.3,644.1 317.2,647.3 324.5,654.6 320.3,665.1 313.0,662.0 307.7,657.8 297.3,659.9 294.1,668.2 288.9,670.3 287.8,690.2 284.7,709.1 287.8,711.2 278.4,713.3 277.3,717.5 280.5,721.7 274.2,725.9 266.9,723.8 263.7,730.1 260.6,733.2 262.7,740.5 269.0,744.7 266.9,748.9 282.6,762.5 277.3,766.7 279.4,776.2 291.0,785.6 286.8,797.1 291.0,805.5 288.9,816.0 282.6,825.4 277.3,829.6 280.5,838.0 284.7,841.1 284.7,850.5 287.8,853.7" stroke-width="3.3"/>
<polyline points="287.8,853.7 329.7,863.7 371.6,901.9 377.5,892.4 409.4,926.6 419.8,917.6 421.9,912.3 428.0,909.2" stroke-width="2.6"/>
<polyline points="287.8,853.7 291.0,872.5 297.3,883.0 300.4,897.7 304.6,906.1 301.4,902.9 288.9,909.2 278.4,914.4 275.2,921.8 280.5,927.0 276.3,934.3 280.5,940.6 276.3,948.0 278.4,956.3 284.7,960.5 274.2,968.9 271.1,984.6 267.9,992.0 260.6,994.1 252.2,1000.4 243.8,1008.7 248.0,1012.9 254.3,1015.0 256.4,1019.0" stroke-width="3.3"/>
<polyline points="552.7,619.0 555.8,631.6 559.0,642.0 556.9,651.5 549.5,652.5 544.3,649.4 551.6,657.8 549.5,673.5 548.5,680.8 541.1,686.1 535.9,693.4 542.2,702.8 553.7,710.1 559.0,719.6 556.9,728.0" stroke-width="3.3"/>
<polyline points="556.9,651.5 570.5,654.6 578.9,660.9 584.1,664.0 595.6,659.9 606.1,658.8 619.7,662.0 621.8,653.6 630.2,652.5 625.0,660.9 621.8,668.2 628.1,674.5 637.5,677.7 648.0,682.9 660.6,687.1 671.1,684.0 683.6,681.9 696.2,681.9 703.5,678.7 702.5,671.4 706.7,664.0 706.7,654.6 715.1,655.7 715.1,664.0 720.3,673.5 721.3,681.9 715.1,690.2 719.3,702.8 723.4,713.3 725.5,730.1 724.5,744.7 721.3,761.5 713.0,778.2 708.8,792.9 700.4,807.6 694.1,823.3" stroke-width="3.3"/>
<polyline points="742.3,619.0 741.3,631.6 738.1,637.9 739.2,646.2 730.8,649.4 725.5,657.8 720.3,664.0 715.1,664.0" stroke-width="3.3"/>
<polyline points="556.9,728.0 570.5,732.1 574.7,734.2 585.2,724.8 597.7,729.0 606.1,736.3 616.6,733.2 629.2,739.5 637.5,746.8 640.7,733.2 641.7,716.4 644.9,723.8 648.0,736.3 652.2,744.7 664.8,736.3 663.7,725.9 695.2,733.2 692.0,740.5 695.2,743.7 720.3,746.8 724.5,744.7" stroke-width="3.3"/>
<polyline points="637.5,746.8 639.6,753.1 692.0,761.5 695.2,743.7" stroke-width="2.6"/>
<polyline points="692.0,761.5 689.9,765.7 704.6,769.9 706.7,784.5 708.8,792.9" stroke-width="3.3"/>
<polyline points="556.9,728.0 559.0,738.4 565.2,753.1 578.9,755.2 583.1,761.5 582.0,773.0 574.7,781.4 570.5,788.7 572.6,796.1 564.2,801.3 553.7,808.6 548.5,818.1 544.3,828.5 535.9,834.8 537.0,849.5 532.8,852.6 528.6,841.1 518.1,834.8 513.9,825.4 510.8,813.9 503.4,809.7" stroke-width="3.3"/>
<polyline points="583.1,761.5 595.6,764.6 608.2,768.8 620.8,774.1 632.3,782.4 637.5,791.9 648.0,801.3 656.4,808.6 662.7,818.1 671.1,825.4 677.3,820.2 679.4,811.8 687.8,810.7 685.7,818.1 679.4,825.4 675.2,832.7 673.2,841.1 669.0,850.5 664.8,854.7 656.4,847.4 652.2,854.7 644.9,857.9 648.0,862.1" stroke-width="3.3"/>
<polyline points="679.4,811.8 683.6,789.8 692.0,799.2 696.2,807.6 694.1,823.3 698.3,816.0" stroke-width="3.3"/>
<polyline points="572.6,796.1 576.8,790.8 589.3,794.0 601.9,803.4 612.4,814.9 620.8,821.2 627.1,828.5 629.2,836.9 623.9,846.3 633.3,855.8 648.0,862.1 658.5,869.4 666.9,880.9 679.4,891.4 682.6,904.0 692.0,915.5 704.6,923.9 710.9,935.4 721.3,943.8 736.0,958.4 742.3,965.8 746.5,973.1 757.0,973.1 763.3,979.4 771.6,987.8" stroke-width="3.3"/>
<polyline points="698.3,816.0 736.0,824.3 759.1,822.2 828.0,839.0" stroke-width="2.6"/>
<polyline points="724.5,730.1 742.3,733.2 744.4,740.5 790.5,751.0 794.7,736.3 811.4,739.5 807.3,758.3 818.8,761.5 823.0,754.1 828.0,753.1" stroke-width="3.3"/>
<polyline points="479.3,839.0 497.1,851.6 511.8,857.9 522.3,864.2 528.6,873.6 530.7,884.1 541.1,887.2 557.9,886.2 564.2,893.5 578.9,901.9 593.5,910.3 610.3,914.4 629.2,920.7 632.3,933.3 629.2,945.9 631.2,953.2 627.1,962.6 622.9,959.5 616.6,965.8 606.1,964.7 593.5,959.5 583.1,957.4 572.6,952.2 562.1,943.8 551.6,939.6 528.6,940.6 507.6,943.8 490.9,950.1 483.5,956.3 480.4,956.3" stroke-width="3.3"/>
<polyline points="632.3,920.7 633.3,904.0 637.5,891.4 645.9,885.1 650.1,876.7 660.6,879.9" stroke-width="3.3"/>
<polyline points="606.1,964.7 604.0,981.5 610.3,987.8 608.2,1000.4 616.6,1002.4 612.4,1019.0" stroke-width="3.3"/>
<polyline points="608.2,1000.4 587.2,996.2 574.7,994.1 553.7,999.3 532.8,996.2 516.0,994.1" stroke-width="3.3"/>
<polyline points="616.6,1002.4 637.5,1000.4 658.5,998.3 669.0,996.2 687.8,1002.4 698.3,1008.7 721.3,1010.8 729.7,1016.1 742.3,1012.9 754.9,1010.8 765.3,1019.0" stroke-width="3.3"/>
<polyline points="480.4,964.7 488.8,968.9 489.8,979.4 497.1,987.8 516.0,994.1" stroke-width="3.3"/>
<polyline points="828.0,755.2 836.4,758.3 840.6,764.6 855.2,769.9 854.2,777.2" stroke-width="3.3"/>
<polyline points="828.0,838.0 837.4,841.1" stroke-width="3.3"/>
<polyline points="927.5,664.0 953.7,664.7 953.7,668.2 994.6,669.3 995.6,681.9 1000.9,681.9 1000.2,692.3 1033.3,698.6 1031.2,714.3 1085.7,722.7 1119.3,722.7 1121.3,696.5 1142.3,695.5 1153.8,640.0 1175.8,640.0" stroke-width="2.6"/>
<polyline points="1167.4,619.0 1173.7,627.4 1175.8,640.0 1184.2,647.3 1190.5,657.8 1188.4,675.6 1184.2,684.0 1181.1,696.5 1187.4,704.9 1188.4,715.4 1184.2,721.7 1188.4,732.1 1182.1,743.7 1185.3,745.8 1182.1,753.1 1180.0,763.6 1176.9,769.9 1176.9,780.3 1180.0,787.7 1186.3,791.9" stroke-width="3.3"/>
<polyline points="1082.6,828.5 1083.6,785.6 1118.2,785.6 1117.2,797.1 1135.0,797.1 1135.0,792.5 1186.3,792.5 1219.8,792.9 1212.5,780.8 1228.0,780.3" stroke-width="2.6"/>
<polyline points="836.4,871.5 846.9,883.0 852.1,896.6 869.9,896.0 875.1,899.8 905.5,933.3 909.7,922.8 927.5,938.5 931.7,935.4 937.0,906.1 945.3,907.7 940.1,891.4 943.2,876.7 979.9,884.7 981.0,876.7 987.2,880.9 1026.0,886.2 1026.0,854.1 1045.9,854.1 1045.9,866.9 1054.3,866.9 1054.3,838.6 1074.2,838.0 1074.2,827.5 1099.3,828.1 1099.3,867.3 1086.8,867.9 1086.8,884.1 1102.5,884.1 1101.4,898.7 1084.7,901.9 1078.4,931.2 1082.6,932.3 1078.4,951.1 1091.0,953.2 1079.4,996.2 1092.0,995.1 1089.9,1002.4 1082.6,1008.7 1089.9,1019.0" stroke-width="3.3"/>
<polyline points="905.5,933.3 895.1,962.6 899.2,975.2 908.7,987.8 920.2,985.7 930.7,998.3 939.1,1008.7 937.0,1019.0" stroke-width="3.3"/>
<polyline points="1228.0,780.3 1271.6,781.4 1272.0,738.9 1317.1,739.5 1317.1,750.0 1409.9,751.0 1409.9,760.4 1459.5,762.5 1459.5,765.3 1540.2,766.7 1540.6,751.0 1576.9,752.1" stroke-width="2.6"/>
<polyline points="1317.1,750.0 1317.1,765.7 1323.3,766.1 1322.7,778.7 1316.0,778.7 1312.9,822.2 1317.1,822.2 1317.1,830.6 1312.9,831.0 1312.9,856.8 1307.2,857.4 1307.2,871.5 1318.5,872.1 1308.7,918.6 1322.3,929.1 1323.3,968.9 1316.0,970.0 1315.6,973.1 1307.2,972.1 1303.9,989.9 1313.5,991.6 1310.1,1003.5 1328.6,1007.7 1326.5,1019.0" stroke-width="3.3"/>
<polyline points="69.9,1019.0 66.8,1029.5 64.7,1042.0 56.3,1056.7 64.7,1058.8 71.0,1070.3 77.2,1074.5 73.0,1086.1 67.8,1092.3 59.4,1096.5 55.2,1108.1 58.4,1121.7 59.4,1139.5 67.8,1136.3 63.6,1148.9 62.6,1163.6 60.5,1175.1 68.9,1184.5 76.2,1179.3 86.7,1183.5 97.1,1175.1 246.3,1174.5 246.3,1116.4 390.5,1115.8 392.6,1099.7 405.2,1099.7 411.4,1102.8 421.9,1095.5 428.0,1094.4" stroke-width="2.6"/>
<polyline points="246.3,1116.4 245.9,1091.3 235.4,1082.9 237.5,1076.6 242.8,1074.5 245.9,1066.1 253.2,1060.9 251.2,1050.4 243.8,1040.0 247.0,1029.5 254.3,1023.2 255.3,1019.0" stroke-width="3.3"/>
<polyline points="213.4,1175.1 162.1,1249.5" stroke-width="2.6"/>
<polyline points="184.1,1257.9 164.2,1280.9 162.1,1291.4 170.5,1312.3 173.6,1333.3 166.3,1358.4 167.3,1373.1 164.2,1381.5 151.6,1388.8 150.6,1406.6 145.3,1419.0" stroke-width="3.3"/>
<polyline points="167.3,1373.1 220.8,1379.4 237.5,1419.0" stroke-width="2.6"/>
<polyline points="32.2,1295.6 33.2,1306.1 49.0,1318.6 80.4,1335.4 90.9,1350.1 95.1,1364.7 93.0,1385.7 90.9,1406.6 94.0,1419.0" stroke-width="3.3"/>
<polyline points="428.0,1345.9 419.8,1352.2 417.7,1362.6 411.4,1373.1 403.1,1377.3 394.7,1379.4 390.5,1392.0 382.1,1400.4 380.0,1410.8 373.7,1412.9 375.8,1419.0" stroke-width="3.3"/>
<polyline points="361.2,1416.1 346.5,1419.0" stroke-width="3.3"/>
<polyline points="428.0,1094.4 438.5,1092.3 444.8,1082.9 457.3,1077.7 460.5,1082.9 474.1,1075.6 475.1,1060.9 478.3,1057.8 477.2,1037.9 481.4,1034.7 488.8,1033.7" stroke-width="3.3"/>
<polyline points="444.8,1082.9 443.7,1094.4 449.0,1109.1 455.2,1128.0 450.0,1133.2 449.0,1142.6 441.6,1152.1 446.9,1156.2 444.8,1167.8 453.1,1184.5 459.4,1195.0 462.6,1209.7 459.4,1220.2 464.7,1228.5 461.5,1243.2 455.2,1266.2 459.4,1280.9 454.2,1287.2 456.3,1299.8 459.4,1310.3 449.0,1316.5 445.8,1327.0 432.2,1333.3 428.0,1345.9" stroke-width="3.3"/>
<polyline points="459.4,1280.9 476.2,1279.9 485.6,1275.7 503.4,1270.4 506.6,1269.4 508.7,1273.6 520.2,1260.0 527.5,1246.3 534.9,1243.2 547.4,1242.2 552.7,1239.0" stroke-width="3.3"/>
<polyline points="485.6,1275.7 487.7,1293.5 491.9,1308.2 497.1,1311.3 502.4,1322.8 535.9,1350.1 542.2,1320.7 553.7,1312.3 554.8,1299.8" stroke-width="3.3"/>
<polyline points="527.5,1246.3 530.7,1260.0 539.1,1278.8 544.3,1289.3 551.6,1293.5 553.7,1299.8 559.0,1309.2 566.3,1309.2 568.4,1312.3 574.7,1309.2 574.7,1304.0 604.0,1303.5" stroke-width="3.3"/>
<polyline points="552.7,1239.0 556.9,1249.5 564.2,1267.3 572.6,1273.6 571.5,1283.0 573.6,1291.4 574.7,1304.0" stroke-width="3.3"/>
<polyline points="528.6,1098.6 529.6,1113.3 534.9,1130.1 539.1,1146.8 542.2,1163.6 534.9,1169.9 534.9,1176.2 542.2,1186.6 546.4,1199.2 549.5,1211.8 550.6,1224.3 552.7,1239.0" stroke-width="3.3"/>
<polyline points="542.2,1075.6 540.1,1070.3 545.3,1050.4 546.4,1034.7 551.6,1026.3 557.9,1026.3 562.1,1032.6 570.5,1034.7 587.2,1031.6 593.5,1027.4 608.2,1025.3 611.3,1029.5 616.6,1027.4 617.6,1040.0 623.9,1053.6 626.0,1071.4 632.3,1076.6 631.2,1086.1 648.0,1090.2 642.8,1117.5" stroke-width="3.3"/>
<polyline points="611.3,1029.5 613.4,1019.0" stroke-width="3.3"/>
<polyline points="600.9,1165.7 604.0,1169.9 599.8,1184.5 605.1,1199.2 596.7,1210.7 598.8,1226.4 601.9,1239.0 600.9,1255.8 606.1,1268.3 608.2,1280.9 606.1,1291.4 604.0,1303.5 601.9,1312.3 593.5,1324.9 591.4,1337.5 587.2,1350.1 588.3,1356.3 584.1,1360.5 587.2,1364.7 578.9,1379.4 574.7,1387.8 571.5,1396.2 574.7,1406.6 577.8,1419.0" stroke-width="3.3"/>
<polyline points="601.9,1239.0 619.7,1239.0 623.9,1233.8 629.2,1223.3 637.5,1221.2 645.9,1223.3 655.3,1217.0 653.2,1228.5 665.8,1232.7 671.1,1226.4 675.2,1234.8 680.5,1229.6 692.0,1244.2 700.4,1256.8 709.8,1254.7 715.1,1255.8 718.2,1264.2 722.4,1272.5 729.7,1269.4 741.3,1269.4" stroke-width="3.3"/>
<polyline points="588.3,1360.5 595.6,1365.8 608.2,1368.9 622.9,1372.1 637.5,1379.4 638.6,1384.6 645.9,1386.7 656.4,1379.4 664.8,1371.0 671.1,1361.6 686.8,1361.6 692.0,1364.7 708.8,1364.7 718.2,1367.9" stroke-width="3.3"/>
<polyline points="692.0,1364.7 688.9,1377.3 679.4,1379.4 677.3,1396.2 671.1,1397.2 664.8,1419.0" stroke-width="3.3"/>
<polyline points="542.2,1320.7 539.1,1341.7 535.9,1350.1 534.9,1362.6 530.7,1375.2 533.8,1389.9 524.4,1402.4 518.1,1415.0 532.8,1418.2 545.3,1419.0" stroke-width="3.3"/>
<polyline points="744.4,1242.2 790.5,1251.6 793.6,1238.0 818.8,1243.2 825.1,1210.7 828.0,1210.7" stroke-width="2.6"/>
<polyline points="780.0,1063.0 788.4,1057.8 798.9,1054.6 805.2,1058.8 819.8,1048.3 828.0,1043.1" stroke-width="3.3"/>
<polyline points="828.0,1040.0 831.1,1041.0 829.0,1054.6 843.7,1057.8 847.9,1037.9 864.7,1040.0 888.8,1045.2 889.8,1038.9 916.0,1045.2 920.2,1057.8 944.3,1025.3 937.0,1019.0" stroke-width="3.3"/>
<polyline points="864.7,1040.0 861.5,1081.9 865.7,1082.9 862.6,1098.6 880.4,1102.8 877.2,1120.6 890.9,1122.7 891.9,1119.2 908.7,1122.1 906.6,1135.3 912.2,1137.4 900.3,1189.8 894.0,1189.8 888.8,1213.9" stroke-width="3.3"/>
<polyline points="828.0,1210.7 838.5,1213.9 840.6,1210.7 847.9,1211.8 849.0,1206.5 888.8,1214.9 941.1,1226.4 946.4,1199.2 955.8,1201.3 952.0,1180.3 1003.6,1191.9 1011.3,1156.2 1043.8,1148.9 1064.8,1145.8 1063.7,1155.2 1091.0,1161.5 1088.9,1170.9 1100.0,1173.0 1101.4,1162.5 1099.3,1159.4 1101.4,1148.9 1157.0,1162.5 1159.1,1154.1 1171.6,1155.2 1183.2,1102.8 1177.9,1075.6" stroke-width="2.6"/>
<polyline points="945.3,1025.3 953.7,1025.3 957.9,1032.6 966.3,1034.7 970.5,1044.1 978.9,1051.5 983.1,1056.7 985.2,1067.2 993.5,1071.4 999.8,1081.9 1006.1,1088.1 1009.2,1092.3 1016.6,1094.4 1020.8,1101.8 1027.1,1111.2 1032.3,1125.9 1035.4,1132.1 1032.3,1136.3 1039.6,1139.5 1047.0,1145.8 1043.8,1148.9" stroke-width="3.3"/>
<polyline points="1043.8,1148.9 1044.9,1157.3 1059.5,1191.9 1058.5,1226.4 1052.2,1241.1 1041.7,1247.4 1029.2,1251.6 1020.8,1256.8" stroke-width="3.3"/>
<polyline points="1016.6,1267.3 997.7,1276.3 928.6,1287.2 931.7,1273.6 924.4,1269.4 909.7,1266.2 909.7,1269.4 923.3,1271.5" stroke-width="3.3"/>
<polyline points="930.7,1226.4 921.2,1269.4" stroke-width="2.6"/>
<polyline points="928.6,1287.2 942.2,1290.3 940.7,1297.7 908.7,1291.0 906.6,1297.7 903.4,1298.1 902.4,1302.9 898.2,1303.5 895.1,1318.6 911.8,1322.8 908.7,1335.4 921.2,1338.5 918.1,1354.3 910.1,1353.2 906.6,1375.2 907.6,1377.3 905.1,1387.8 913.9,1389.9 912.2,1402.4 921.2,1404.5 918.1,1419.0" stroke-width="3.3"/>
<polyline points="1052.2,1253.7 1060.6,1268.3 1067.9,1273.6 1074.2,1275.7 1082.6,1280.9 1093.1,1290.3 1106.7,1293.5 1121.3,1294.5 1131.8,1298.7 1137.1,1306.1 1142.3,1310.3 1146.5,1314.4 1144.4,1322.8 1154.9,1333.3 1165.3,1343.8 1171.6,1354.3 1180.0,1364.7 1188.4,1373.1 1197.8,1375.2 1202.0,1381.5" stroke-width="3.3"/>
<polyline points="1121.3,1295.2 1071.1,1327.0 1063.7,1362.6 1029.2,1357.4 1027.1,1364.7 1012.4,1363.7 1008.2,1375.2 1005.1,1392.0 1010.3,1406.6 1017.6,1419.0" stroke-width="2.6"/>
<polyline points="1142.3,1310.3 1169.5,1291.4 1164.3,1288.3 1165.3,1280.5 1188.4,1278.8 1195.7,1248.4 1191.5,1246.3 1196.8,1213.9 1183.2,1210.7 1185.3,1191.9 1183.2,1186.6 1157.0,1164.6" stroke-width="3.3"/>
<polyline points="1194.7,1229.6 1204.1,1230.6 1206.2,1242.2 1213.5,1247.4 1228.0,1248.4" stroke-width="3.3"/>
<polyline points="1182.1,1098.6 1203.1,1102.8 1206.2,1115.4 1228.0,1108.1" stroke-width="3.3"/>
<polyline points="1197.8,1375.2 1217.7,1363.7 1219.8,1356.3 1228.0,1357.4" stroke-width="3.3"/>
<polyline points="1202.0,1381.5 1190.5,1390.9 1201.0,1408.7 1207.3,1405.6 1211.4,1410.8 1196.8,1419.0" stroke-width="3.3"/>
<polyline points="1085.4,1019.6 1094.8,1030.0 1105.2,1042.5 1113.5,1039.4 1115.6,1044.6 1130.2,1051.9 1130.7,1068.6 1157.4,1069.6 1176.1,1074.9 1201.2,1079.0 1230.4,1086.3 1232.5,1092.6 1233.5,1102.0 1238.7,1109.9" stroke-width="3.3"/>
<polyline points="1115.6,1044.6 1104.2,1048.8 1103.1,1057.1 1101.0,1069.6 1052.0,1075.9 1052.0,1072.8 1042.6,1076.9 1017.6,1092.6" stroke-width="3.3"/>
<polyline points="1324.3,1030.0 1313.9,1061.3 1303.4,1066.5 1298.2,1082.2 1278.4,1078.0 1277.3,1083.2 1230.4,1086.3" stroke-width="2.6"/>
<polyline points="1326.5,1019.0 1321.2,1040.0" stroke-width="3.3"/>
<polyline points="1230.1,1086.5 1233.2,1090.2 1231.1,1098.6 1236.4,1102.8 1228.0,1107.0" stroke-width="3.3"/>
<polyline points="1316.0,1062.0 1337.0,1070.3 1353.7,1075.2 1381.0,1076.0 1381.0,1078.1 1398.8,1078.7 1398.8,1087.1 1418.3,1087.7 1418.3,1102.4 1481.5,1103.2 1482.0,1096.1 1513.4,1096.9 1514.0,1102.8 1576.9,1104.9" stroke-width="2.6"/>
<polyline points="1236.4,1102.8 1238.5,1113.3 1242.7,1123.8 1240.6,1130.1 1249.0,1140.5 1247.9,1145.8 1255.2,1150.0 1261.5,1163.6 1261.5,1169.9 1269.9,1175.1 1280.4,1180.3 1286.7,1188.7 1293.0,1195.0 1297.1,1205.5 1297.1,1211.8 1301.3,1217.0 1311.8,1220.2 1320.2,1219.1 1328.6,1224.3 1334.9,1233.8 1338.0,1241.1 1345.3,1249.5 1352.7,1256.8 1348.5,1264.2 1345.3,1269.4 1347.4,1278.8 1355.8,1287.2 1362.1,1295.6 1367.3,1301.9 1383.1,1309.2 1395.6,1314.4 1405.1,1319.7 1412.4,1332.3 1416.6,1338.5 1413.4,1345.9 1412.4,1356.3 1429.2,1364.7 1453.2,1381.5 1464.8,1406.6 1464.8,1419.0" stroke-width="3.3"/>
<polyline points="1228.0,1248.4 1238.5,1248.4 1241.6,1233.8 1269.9,1269.4 1279.3,1271.5 1279.3,1274.6 1309.7,1282.0 1312.9,1279.9 1310.8,1274.2 1346.4,1272.5 1408.2,1273.0 1504.6,1275.1 1576.9,1275.7" stroke-width="2.6"/>
<polyline points="1228.0,1358.0 1235.3,1358.4 1237.4,1346.9 1262.6,1352.2 1259.4,1368.9 1272.0,1362.6 1272.0,1368.9 1284.2,1369.3 1283.5,1380.4 1310.1,1380.4 1304.5,1416.1 1320.2,1419.0" stroke-width="3.3"/>
<polyline points="376.9,1419.0 373.7,1433.7 363.3,1434.7 359.1,1440.0" stroke-width="3.3"/>
<polyline points="91.9,1419.0 103.4,1456.7 111.8,1468.2 119.1,1474.5" stroke-width="3.3"/>
<polyline points="147.4,1419.0 129.6,1455.7 119.1,1474.5 110.8,1492.3 107.6,1511.2 108.7,1528.0 113.9,1546.8 107.6,1553.1 106.6,1565.7 116.0,1586.6 120.2,1599.2 130.7,1609.7 132.8,1618.1 142.2,1632.7 147.4,1645.3 153.7,1652.6 160.0,1654.7 170.5,1650.5 183.1,1639.0 192.5,1626.4 195.6,1605.5 206.1,1592.9 209.2,1576.2 215.5,1564.6 225.0,1555.2 232.3,1532.1 241.7,1521.7 248.0,1481.9 252.2,1454.6 250.1,1450.4 237.5,1419.0" stroke-width="3.3"/>
<polyline points="129.6,1455.7 159.0,1496.5 184.1,1509.1 189.3,1540.5 195.6,1551.0 215.5,1564.6" stroke-width="2.6"/>
<polyline points="252.2,1453.6 351.7,1419.0" stroke-width="2.6"/>
<polyline points="28.0,1514.3 107.6,1511.2" stroke-width="2.6"/>
<polyline points="553.7,1419.0 574.7,1421.1 577.8,1428.4 572.6,1433.7 568.4,1442.0 574.7,1456.7 582.0,1468.2 577.8,1473.5 583.1,1481.9 587.2,1496.5 592.5,1509.1 591.4,1521.7 598.8,1535.3 594.6,1542.6 595.6,1555.2 591.4,1574.1 593.5,1590.8 594.6,1603.4 601.9,1616.0 607.2,1628.5 611.3,1645.3 609.2,1660.0 606.1,1668.3 607.2,1678.8 612.4,1693.5 617.6,1708.2 616.6,1718.6 601.9,1741.7 600.9,1745.9" stroke-width="3.3"/>
<polyline points="664.8,1419.0 659.5,1431.6 682.6,1440.0 679.4,1452.5 666.9,1471.4 663.7,1488.1 662.7,1507.0 659.5,1534.2 648.0,1548.9 637.5,1553.1 630.2,1569.9 623.9,1582.4 626.0,1590.8 621.8,1599.2 621.8,1607.6 619.7,1618.1 623.9,1634.8 618.7,1645.3 617.6,1655.8 614.5,1664.2 618.7,1668.3 614.5,1678.8 615.5,1689.3 617.6,1699.8" stroke-width="3.3"/>
<polyline points="918.1,1419.0 926.5,1421.1 925.4,1428.4 918.1,1427.4 911.8,1465.1 913.9,1466.1 907.6,1506.0 921.2,1509.1 899.2,1682.0" stroke-width="2.6"/>
<polyline points="921.2,1513.7 995.6,1514.3 1017.6,1419.0" stroke-width="2.6"/>
<polyline points="1017.6,1420.0 1034.4,1431.6 1037.5,1438.9 1045.9,1445.2 1060.6,1452.5 1071.1,1459.9 1082.6,1459.9 1087.8,1457.8 1098.3,1464.0 1108.8,1471.4 1120.3,1470.3 1124.5,1466.1 1129.7,1471.4 1142.3,1475.6 1154.9,1479.8 1171.6,1482.9 1184.2,1479.8 1196.8,1488.1 1205.2,1494.4 1213.5,1494.4 1215.6,1504.9 1219.8,1511.2 1228.0,1513.3" stroke-width="3.3"/>
<polyline points="1108.8,1473.5 1100.4,1480.8 1120.3,1480.8 1137.1,1489.2 1121.3,1503.9 1125.5,1507.0 1125.5,1513.7 1160.1,1522.7 1155.9,1540.5 1143.3,1538.4 1136.0,1576.2 1149.6,1579.3 1153.8,1561.5 1173.7,1565.7 1164.3,1618.1 1181.1,1607.6 1179.0,1639.0 1171.6,1644.2 1182.1,1652.6 1199.9,1657.9 1203.1,1673.6 1212.5,1680.9 1214.6,1668.3 1228.0,1670.4" stroke-width="3.3"/>
<polyline points="1175.8,1481.9 1198.9,1460.9 1179.0,1431.6 1196.8,1419.0" stroke-width="2.6"/>
<polyline points="927.5,1684.1 926.5,1758.4" stroke-width="2.6"/>
<polyline points="1149.6,1726.0 1140.2,1721.8 1135.0,1733.3 1137.1,1743.8 1143.3,1744.8 1140.2,1758.4" stroke-width="3.3"/>
<polyline points="1312.9,1419.0 1344.3,1425.3 1344.3,1440.0 1356.9,1441.0 1356.2,1494.4 1382.6,1494.4 1381.4,1574.1 1377.2,1575.1 1377.2,1580.3 1330.7,1609.7" stroke-width="2.6"/>
<polyline points="1356.2,1468.2 1408.2,1469.3 1408.6,1459.2 1483.6,1460.9 1576.9,1463.4" stroke-width="2.6"/>
<polyline points="1377.2,1575.1 1407.8,1575.7 1407.8,1603.4 1434.4,1604.4 1434.4,1611.4 1449.1,1611.8 1448.4,1631.7 1489.9,1632.7 1488.9,1659.5 1524.5,1660.0 1523.9,1673.6 1506.3,1673.6 1505.6,1686.2 1509.8,1686.8 1509.8,1699.8 1512.5,1700.2 1512.5,1712.3 1541.9,1712.8 1540.6,1758.4" stroke-width="3.3"/>
<polyline points="1541.3,1737.1 1576.9,1737.5" stroke-width="2.6"/>
<polyline points="1228.0,1512.2 1236.4,1516.4 1242.7,1523.8 1252.1,1530.1 1257.3,1536.3 1260.5,1547.9 1264.7,1551.0 1277.2,1552.1 1280.4,1563.6 1284.6,1567.8 1285.6,1573.0 1293.0,1581.4 1301.3,1581.4 1311.8,1588.7 1316.0,1597.1 1323.3,1605.5 1328.6,1610.7 1334.9,1614.9 1338.0,1626.4 1334.9,1634.8 1335.9,1643.2 1342.2,1645.3 1348.5,1653.7 1353.7,1662.1 1359.0,1670.4 1364.2,1670.4 1362.1,1678.8 1370.5,1687.2 1374.7,1695.6 1383.1,1698.7 1385.2,1707.1 1392.5,1716.5 1401.9,1723.9 1408.2,1724.9 1419.7,1735.4 1418.7,1745.9 1417.6,1758.4" stroke-width="3.3"/>
<polyline points="1463.7,1419.0 1469.0,1427.4 1469.0,1435.8 1480.5,1442.0 1478.4,1448.3 1483.6,1460.9 1484.7,1471.4 1477.3,1481.9 1479.4,1491.3 1475.2,1499.7 1477.3,1507.0 1482.6,1515.4 1487.8,1521.7 1484.7,1530.1 1489.9,1538.4 1500.4,1543.7 1508.8,1550.0 1517.2,1554.1 1525.5,1553.1 1533.9,1560.4 1542.3,1561.5 1548.6,1567.8 1551.7,1576.2 1561.2,1584.5 1567.4,1592.9 1576.9,1599.2" stroke-width="3.3"/>
<polyline points="1228.0,1673.6 1235.3,1675.7 1235.3,1678.8 1275.1,1688.3 1269.9,1714.4 1275.1,1714.9 1275.8,1717.6 1289.8,1721.8 1290.4,1737.5 1293.0,1748.0 1290.9,1758.4" stroke-width="3.3"/>
</g>
<g fill="none" stroke="#fff" stroke-width="4" stroke-linejoin="round" stroke-linecap="round">
<polyline points="28.0,222.6 189.3,221.1 206.1,222.1 288.9,238.3 282.6,243.1 280.5,253.6 276.3,258.8 279.4,263.0 289.9,262.0 297.3,264.0 299.3,273.5 302.1,280.8 302.5,288.1 297.3,293.4 298.3,307.0 295.2,313.3 296.6,318.5 293.1,324.8 287.8,329.0 286.1,336.3 289.5,340.5 288.9,347.9 276.3,351.0 269.0,358.3 266.9,365.7 263.1,379.9 250.1,377.2 229.2,378.2 214.5,375.7 205.1,379.3 198.8,385.6 195.6,395.0 193.5,398.2 198.8,401.3 201.5,407.6 202.3,420.2 203.6,434.8 201.5,449.5 203.0,464.2 206.1,473.6 214.5,484.1 221.8,490.3 226.0,495.6 235.4,501.9 245.9,506.1 256.4,505.0 261.0,504.0 262.3,510.3 260.6,513.4 269.0,519.7 274.2,527.0 281.5,530.2 286.8,538.5 287.8,548.0 289.9,556.3 292.4,565.8 300.4,568.9 308.8,571.0 304.6,575.2 296.2,575.2 292.4,579.4 295.2,587.8 298.3,596.2 306.7,601.4 317.2,602.4 325.5,604.5 336.0,610.8 347.5,617.1" stroke-width="5.6"/>
<polyline points="347.5,619.5 353.8,598.2 363.3,581.8 371.4,568.0 373.9,555.4 382.7,544.1 390.3,534.1 396.6,526.5 404.1,522.1 411.7,522.7 420.5,531.5 428.0,541.6 434.3,551.7 440.6,556.7 450.6,560.5" stroke-width="5.6"/>
<polyline points="450.6,560.5 553.7,596.3" stroke-width="5.0"/>
<polyline points="434.3,552.9 435.5,560.5 430.5,565.5 428.0,570.5 427.4,580.6 429.9,590.6 429.3,600.7 426.7,608.2 417.9,612.0 416.1,618.3 418.6,625.8 414.2,634.6 410.4,639.7 414.2,648.5 412.3,656.0 414.2,664.8 411.7,673.6 414.2,682.4 414.2,692.5" stroke-width="5.6"/>
<polyline points="553.7,596.3 553.7,588.1 551.2,580.6 556.2,575.5 551.2,570.5 555.0,561.7 556.2,550.4 555.0,542.9 558.8,530.3 559.4,517.7 566.3,514.6 576.4,513.3 572.6,514.4 583.1,517.6 593.5,512.3 604.0,505.0 616.6,507.1 627.1,506.1 639.6,512.3 650.1,506.1 656.4,496.6 663.7,493.9 674.2,498.7 681.5,502.9 684.7,516.5 688.9,533.3 706.7,538.5 761.2,554.3 761.2,564.7 771.6,568.9 782.1,570.0 787.4,579.4 796.8,575.2 809.4,568.9 817.7,558.4 828.0,556.3" stroke-width="5.6"/>
<polyline points="828.0,556.3 840.6,550.1 849.0,553.2 855.2,557.4 876.2,558.4 888.8,553.2 903.4,550.1 916.0,552.2 928.2,551.1" stroke-width="5.6"/>
<polyline points="928.2,551.1 953.7,512.3 959.0,499.8 960.0,489.3 956.9,486.2 1000.9,372.0 1021.8,375.1 1021.8,382.4 1076.3,391.9 1081.5,363.6 1190.5,367.8 1219.8,378.2 1228.0,378.7" stroke-width="5.0"/>
<polyline points="928.2,551.1 926.5,556.3 933.8,580.4 926.5,592.0 920.2,596.2 917.1,606.6 918.1,619.0" stroke-width="5.6"/>
<polyline points="1228.0,377.8 1245.8,377.8 1265.7,357.3 1372.6,219.0" stroke-width="5.0"/>
<polyline points="1265.7,357.3 1576.9,363.6" stroke-width="5.0"/>
<polyline points="414.2,692.5 453.1,681.8 520.2,728.0 511.8,733.2 507.6,748.9 501.3,753.1 502.4,763.6 497.1,770.9 505.5,780.3 511.8,784.5 510.8,792.9 503.4,797.1 499.2,808.6 491.9,813.9 490.9,823.3 478.3,829.6 475.1,839.0 473.0,849.5 459.4,860.0 451.0,870.4 445.8,883.0 438.5,891.4 430.1,897.7 428.0,904.0 429.0,910.3 449.0,918.6 465.7,924.9 477.2,935.4 479.3,950.1 478.3,975.2 479.3,996.2 483.5,1012.9 485.6,1019.0" stroke-width="5.6"/>
<polyline points="828.0,889.3 819.8,922.8 793.6,933.3 784.2,936.4 782.1,945.9 771.6,987.8 782.1,992.0 785.3,1002.4 782.1,1010.8 771.6,1014.0 765.3,1019.0" stroke-width="5.6"/>
<polyline points="918.1,619.0 920.2,631.6 923.3,640.0 921.2,656.7 925.4,663.0 928.6,704.9 900.3,699.7 890.9,750.0 873.0,746.4 871.0,755.2 863.6,756.2 853.1,814.9 844.8,821.2 834.3,869.4 828.0,889.3" stroke-width="5.6"/>
<polyline points="28.0,1291.4 55.2,1297.7 123.3,1296.0 145.3,1257.9 153.7,1256.8 164.2,1251.2 172.6,1254.7 299.3,1261.0 317.2,1322.8 316.1,1343.8 323.4,1343.8 323.4,1375.2 352.8,1393.0 358.0,1403.5 367.4,1406.6 366.4,1415.0 361.2,1419.0" stroke-width="5.0"/>
<polyline points="485.6,1019.0 489.8,1033.7 495.1,1045.2 507.6,1047.3 511.8,1055.7 515.0,1071.4 520.2,1088.1 523.3,1100.7 521.2,1108.1 528.6,1098.6 530.7,1086.1 544.3,1080.8 553.7,1091.3 560.0,1093.4 562.1,1113.3 566.3,1128.0 571.5,1140.5 572.6,1148.9 585.2,1150.0 589.3,1156.2 600.9,1164.6 607.2,1153.1 614.5,1142.6 622.9,1132.1 633.3,1122.7 648.0,1116.4 654.3,1109.1 662.7,1106.0 720.3,1140.5" stroke-width="5.6"/>
<polyline points="720.3,1140.5 719.3,1130.1 725.5,1118.5 742.3,1121.7 761.2,1116.4 765.3,1102.8 768.5,1086.1 764.3,1073.5 779.0,1069.3 771.6,1040.0 765.3,1019.0" stroke-width="5.6"/>
<polyline points="720.3,1140.5 729.7,1178.2 740.2,1220.2 742.3,1270.4 745.4,1320.7 740.2,1348.0 736.0,1368.9 718.2,1364.7 718.2,1371.0 729.7,1380.4 733.9,1382.5 736.0,1396.2 738.1,1403.5 771.6,1412.9 775.8,1419.0" stroke-width="5.0"/>
<polyline points="361.2,1419.0 358.0,1429.5 351.7,1436.8 347.5,1441.0 351.7,1446.2 350.7,1454.6 359.1,1457.8 371.6,1459.9 380.0,1464.0 428.0,1478.7" stroke-width="5.0"/>
<polyline points="428.0,1478.7 441.6,1482.9 490.9,1529.0 495.1,1530.1 531.1,1564.6 528.6,1595.0 551.2,1595.0 561.5,1616.0 560.0,1644.2 601.9,1757.4" stroke-width="5.0"/>
<polyline points="771.6,1419.0 782.1,1427.4 794.7,1435.8 805.2,1446.2 803.1,1458.8 805.2,1473.5 811.4,1492.3 816.7,1507.0 817.7,1528.0 819.8,1544.7 818.8,1555.2" stroke-width="5.0"/>
<polyline points="817.0,1549.9 817.0,1560.0 822.1,1573.8 830.9,1583.9 840.9,1590.2 842.2,1594.6 835.9,1596.5 826.5,1595.2 822.7,1601.5 820.8,1612.8 824.6,1621.6 830.2,1627.9 830.9,1632.3 839.0,1638.6 837.8,1646.7 835.3,1651.8 829.0,1656.8 826.5,1664.3 825.2,1678.2 826.5,1693.3" stroke-width="5.0"/>
<polyline points="790.6,1759.9 786.2,1723.4 783.1,1702.7 920.0,1681.3" stroke-width="5.0"/>
<polyline points="919.1,1682.0 971.5,1672.5 1080.5,1691.4 1085.7,1714.4 1111.9,1714.9 1118.2,1702.9 1127.6,1700.8 1138.1,1702.9 1139.2,1709.2 1129.7,1710.3 1128.7,1714.4 1140.2,1712.3 1148.6,1716.5 1154.9,1727.0 1171.6,1731.2 1184.2,1728.1 1201.0,1731.2 1215.6,1729.1 1228.0,1731.2" stroke-width="5.0"/>
<polyline points="1228.0,1731.2 1235.8,1729.1 1228.6,1751.1 1236.8,1751.7 1237.4,1759.5" stroke-width="5.0"/>
</g>
<path d="M1547.3,988.4L1547.2,975.4L1546.8,962.4L1546.3,949.5L1545.5,936.5L1544.5,923.6L1543.2,910.6L1541.8,897.7L1540.1,884.9L1538.2,872.0L1536.0,859.2L1533.7,846.4L1531.1,833.7L1528.3,821.0L1525.3,808.4L1522.0,795.8L1518.6,783.3L1514.9,770.9L1511.0,758.5L1506.9,746.2L1502.6,733.9L1498.0,721.8L1493.3,709.7L1488.3,697.7L1483.1,685.8L1477.8,673.9L1472.2,662.2L1466.4,650.6L1460.4,639.1L1454.2,627.6L1447.8,616.3L1441.2,605.1L1434.5,594.1L1427.5,583.1L1420.3,572.3L1413.0,561.6L1405.4,551.0L1397.7,540.5L1389.8,530.2L1381.7,520.1L1373.5,510.0L1365.1,500.2L1356.4,490.4L1347.7,480.9L1338.7,471.4L1329.6,462.2L1320.4,453.1L1310.9,444.1L1301.4,435.4L1291.6,426.7L1281.8,418.3L1271.7,410.1L1261.6,402.0L1251.3,394.1L1240.8,386.3L1230.2,378.8L1219.5,371.4L1208.7,364.3L1197.8,357.3L1186.7,350.5L1175.5,343.9L1164.2,337.5L1152.8,331.3L1141.2,325.3L1129.6,319.6L1117.9,314.0L1106.1,308.6L1094.2,303.4L1082.2,298.4L1070.1,293.7L1057.9,289.1L1045.7,284.8L1033.4,280.7L1021.0,276.8L1008.5,273.1L996.0,269.6L983.4,266.4L970.8,263.4L958.1,260.5L945.4,258.0L932.6,255.6L919.8,253.5L907.0,251.5L894.1,249.8L881.2,248.4L868.3,247.1L855.3,246.1L842.3,245.3L829.4,244.8L816.4,244.4L803.4,244.3L790.4,244.4L777.4,244.8L764.5,245.3L751.5,246.1L738.5,247.1L725.6,248.4L712.7,249.9L699.8,251.5L687.0,253.5L674.2,255.6L661.4,258.0L648.7,260.6L636.0,263.4L623.4,266.4L610.8,269.7L598.3,273.2L585.9,276.8L573.5,280.8L561.2,284.9L548.9,289.2L536.8,293.8L524.7,298.5L512.7,303.5L500.8,308.7L489.0,314.1L477.2,319.7L465.6,325.5L454.1,331.5L442.7,337.7L431.4,344.1L420.2,350.6L409.1,357.4L398.2,364.4L387.4,371.6L376.7,378.9L366.1,386.5L355.6,394.2L345.3,402.1L335.2,410.2L325.2,418.5L315.3,426.9L305.6,435.5L296.0,444.3L286.6,453.2L277.3,462.3L268.2,471.6L259.3,481.0L250.5,490.6L241.9,500.3L233.5,510.2L225.2,520.2L217.1,530.4L209.2,540.7L201.5,551.1L194.0,561.7L186.6,572.4L179.4,583.2L172.5,594.2L165.7,605.2L159.1,616.4L152.7,627.7L146.5,639.1L140.5,650.6L134.7,662.3L129.1,674.0L123.8,685.8L118.6,697.7L113.6,709.7L108.9,721.8L104.3,734.0L100.0,746.2L95.9,758.5L92.0,770.9L88.3,783.3L84.8,795.9L81.6,808.4L78.5,821.1L75.7,833.7L73.2,846.5L70.8,859.2L68.6,872.0L66.7,884.9L65.0,897.7L63.6,910.6L62.3,923.6L61.3,936.5L60.5,949.5L60.0,962.4L59.6,975.4L59.5,988.4L59.6,1001.4L60.0,1014.4L60.5,1027.3L61.4,1040.3L62.4,1053.2L63.7,1066.1L65.2,1079.0L66.9,1091.9L68.9,1104.7L71.1,1117.5L73.5,1130.3L76.1,1143.0L79.0,1155.6L82.1,1168.2L85.4,1180.8L88.9,1193.3L92.7,1205.7L96.7,1218.0L100.9,1230.3L105.3,1242.5L109.9,1254.6L114.7,1266.7L119.7,1278.6L125.0,1290.5L130.4,1302.2L136.1,1313.9L141.9,1325.4L148.0,1336.9L154.2,1348.2L160.7,1359.5L167.3,1370.6L174.1,1381.6L181.1,1392.5L188.3,1403.3L195.7,1413.9L203.3,1424.4L211.0,1434.8L218.9,1445.1L227.0,1455.2L235.2,1465.1L243.7,1475.0L252.3,1484.6L261.0,1494.2L269.9,1503.6L279.0,1512.8L288.2,1521.9L297.6,1530.8L307.2,1539.5L316.8,1548.1L326.7,1556.6L336.6,1564.8L346.7,1572.9L357.0,1580.8L367.4,1588.6L377.9,1596.1L388.5,1603.5L399.3,1610.7L410.2,1617.7L421.2,1624.5L432.3,1631.2L443.5,1637.6L454.9,1643.9L466.3,1649.9L477.9,1655.8L489.5,1661.5L501.3,1666.9L513.2,1672.2L525.1,1677.2L537.1,1682.0L549.3,1686.7L561.5,1691.1L573.7,1695.3L586.1,1699.2L598.5,1703.0L611.0,1706.5L623.5,1709.9L636.1,1713.0L648.8,1715.8L661.5,1718.5L674.2,1720.9L687.0,1723.1L699.9,1725.1L712.7,1726.8L725.6,1728.3L738.6,1729.6L751.5,1730.6L764.5,1731.5L777.4,1732.0L790.4,1732.4L803.4,1732.5L816.4,1732.4L829.4,1732.0L842.3,1731.5L855.3,1730.7L868.3,1729.7L881.2,1728.4L894.1,1727.0L907.0,1725.3L919.8,1723.4L932.6,1721.3L945.4,1718.9L958.1,1716.3L970.8,1713.5L983.4,1710.5L996.0,1707.3L1008.5,1703.8L1021.0,1700.1L1033.4,1696.2L1045.7,1692.1L1058.0,1687.8L1070.1,1683.3L1082.2,1678.5L1094.2,1673.6L1106.2,1668.4L1118.0,1663.0L1129.7,1657.5L1141.4,1651.7L1152.9,1645.7L1164.3,1639.5L1175.6,1633.1L1186.8,1626.6L1197.9,1619.8L1208.9,1612.8L1219.7,1605.6L1230.5,1598.3L1241.0,1590.8L1251.5,1583.0L1261.8,1575.1L1272.0,1567.0L1282.0,1558.8L1291.9,1550.3L1301.6,1541.7L1311.2,1533.0L1320.6,1524.0L1329.9,1514.9L1339.0,1505.6L1348.0,1496.2L1356.7,1486.6L1365.3,1476.9L1373.8,1467.0L1382.0,1457.0L1390.1,1446.8L1398.0,1436.5L1405.7,1426.0L1413.3,1415.4L1420.6,1404.7L1427.8,1393.9L1434.7,1382.9L1441.5,1371.8L1448.1,1360.6L1454.5,1349.3L1460.6,1337.9L1466.6,1326.3L1472.4,1314.7L1478.0,1303.0L1483.3,1291.1L1488.5,1279.2L1493.4,1267.2L1498.2,1255.1L1502.7,1242.9L1507.0,1230.7L1511.1,1218.4L1515.0,1206.0L1518.7,1193.5L1522.1,1181.0L1525.4,1168.4L1528.4,1155.8L1531.2,1143.1L1533.7,1130.4L1536.1,1117.6L1538.2,1104.8L1540.1,1091.9L1541.8,1079.1L1543.3,1066.2L1544.5,1053.2L1545.5,1040.3L1546.3,1027.3L1546.9,1014.4L1547.2,1001.4Z" fill="none" stroke="#fff" stroke-width="2.6" stroke-linejoin="round"/>
<circle cx="782.5" cy="302.5" r="6.9" fill="#fff"/>
<text class="mono" x="790.8" y="292" font-size="30.8" fill="#fff" xml:space="preserve">METÁN</text>
<circle cx="1446.5" cy="415.5" r="6.9" fill="#fff"/>
<text class="mono" x="1454.8" y="405" font-size="30.8" fill="#fff" xml:space="preserve">MONTE QUEMADO</text>
<circle cx="471.5" cy="501.5" r="6.9" fill="#fff"/>
<text class="mono" x="479.8" y="491" font-size="30.8" fill="#fff" xml:space="preserve">CAFAYATE</text>
<circle cx="687.5" cy="554.5" r="6.9" fill="#fff"/>
<text class="mono" x="695.8" y="544" font-size="30.8" fill="#fff" xml:space="preserve">TRANCAS</text>
<circle cx="1008.5" cy="544.5" r="6.9" fill="#fff"/>
<text class="mono" x="1016.8" y="534" font-size="30.8" fill="#fff" xml:space="preserve">NUEVA ESPERANZA</text>
<circle cx="452.5" cy="716.5" r="6.9" fill="#fff"/>
<text class="mono" x="460.8" y="706" font-size="30.8" fill="#fff" xml:space="preserve">SANTA MARÍA</text>
<circle cx="1217.5" cy="712.5" r="6.9" fill="#fff"/>
<text class="mono" x="1225.8" y="702" font-size="30.8" fill="#fff" xml:space="preserve">SANTOS LUGARES</text>
<circle cx="593.5" cy="936.5" r="6.9" fill="#fff"/>
<text class="mono" x="601.8" y="926" font-size="30.8" fill="#fff" xml:space="preserve">CONCEPCIÓN</text>
<circle cx="1219.5" cy="952.5" r="6.9" fill="#fff"/>
<text class="mono" x="1227.8" y="942" font-size="30.8" fill="#fff" xml:space="preserve">CASPI CORRAL</text>
<circle cx="816.5" cy="987.5" r="6.9" fill="#fff"/>
<text class="mono" x="824.8" y="977" font-size="30.8" fill="#fff" xml:space="preserve">T. DE RÍO HONDO</text>
<circle cx="373.5" cy="1019.5" r="6.9" fill="#fff"/>
<text class="mono" x="381.8" y="1009" font-size="30.8" fill="#fff" xml:space="preserve">ANDALGALÁ</text>
<circle cx="596.5" cy="1080.5" r="6.9" fill="#fff"/>
<text class="mono" x="604.8" y="1070" font-size="30.8" fill="#fff" xml:space="preserve">LA COCHA</text>
<circle cx="999.5" cy="1087.5" r="6.9" fill="#fff"/>
<text class="mono" x="1007.8" y="1077" font-size="30.8" fill="#fff" xml:space="preserve">SANTIAGO DEL ESTERO</text>
<circle cx="1019.5" cy="1264.5" r="6.9" fill="#fff"/>
<text class="mono" x="1027.8" y="1254" font-size="30.8" fill="#fff" xml:space="preserve">LORETO</text>
<circle cx="538.5" cy="1320.5" r="6.9" fill="#fff"/>
<text class="mono" x="546.8" y="1310" font-size="30.8" fill="#fff" xml:space="preserve">S. F. V. C.</text>
<circle cx="1429.5" cy="1321.5" r="6.9" fill="#fff"/>
<text class="mono" x="1437.8" y="1311" font-size="30.8" fill="#fff" xml:space="preserve">AÑATUYA</text>
<circle cx="226.5" cy="1352.5" r="6.9" fill="#fff"/>
<text class="mono" x="234.8" y="1342" font-size="30.8" fill="#fff" xml:space="preserve">AIMOGASTA</text>
<circle cx="403.5" cy="1455.5" r="6.9" fill="#fff"/>
<text class="mono" x="411.8" y="1445" font-size="30.8" fill="#fff" xml:space="preserve">CHUMBICHA</text>
<circle cx="1242.5" cy="1499.5" r="6.9" fill="#fff"/>
<text class="mono" x="1250.8" y="1489" font-size="30.8" fill="#fff" xml:space="preserve">LOS TELARES</text>
<circle cx="542.5" cy="1578.5" r="6.9" fill="#fff"/>
<text class="mono" x="550.8" y="1568" font-size="30.8" fill="#fff" xml:space="preserve">SAN MARTÍN</text>
<circle cx="757.5" cy="1597.5" r="6.9" fill="#fff"/>
<text class="mono" x="765.8" y="1587" font-size="30.8" fill="#fff" xml:space="preserve">RECREO</text>
<circle cx="219.5" cy="1646.5" r="6.9" fill="#fff"/>
<text class="mono" x="227.8" y="1636" font-size="30.8" fill="#fff" xml:space="preserve">LA RIOJA</text>
<rect x="36" y="1653" width="330" height="100" fill="#6e6e6e" fill-opacity="0.75" stroke="#777" stroke-opacity="0.8" stroke-width="2"/>
<rect x="49" y="1666.8" width="303" height="71.8" fill="#5c5c5c" fill-opacity="0.5" stroke="#ffa500" stroke-width="6"/>
<polyline points="147.4,1645.3 144.3,1657.9 149.5,1668.3 162.1,1676.7 166.3,1691.4 160.0,1716.5 162.1,1739.6 167.3,1752.2 167.3,1757.4" fill="none" stroke="#808080" stroke-opacity="0.5" stroke-width="2.4"/>
<text class="mono" x="60.5" y="1696.7" font-size="22" fill="#fff" xml:space="preserve">Avisos Meteorológicos</text>
<text class="mono" x="60.5" y="1722.5" font-size="22" fill="#fff" xml:space="preserve">a Muy Corto Plazo</text>
</g>
<rect x="28.5" y="219.0" width="1549.5" height="1539.0" fill="none" stroke="#000" stroke-width="2"/>
<rect x="1579.5" y="219.0" width="149.5" height="1539.0" fill="#1a1a1a"/>
<clipPath id="rclip"><rect x="1579.5" y="219.0" width="149.5" height="1539.0"/></clipPath>
<g id="rightpanel" clip-path="url(#rclip)">
<rect x="1637" y="249.8" width="67.2" height="1478" rx="9" ry="7" fill="#3d6698"/>
<path d="M1636.7,413.5L1636.7,417.1L1637.5,415.3ZM1704.5,413.5L1704.5,417.1L1703.3,415.3ZM1636.7,421.8L1636.7,425.5L1637.7,423.6ZM1704.5,421.8L1704.5,425.5L1703.1,423.6ZM1636.7,430.2L1636.7,434.0L1637.9,432.1ZM1704.5,430.2L1704.5,434.0L1702.9,432.1ZM1636.7,438.9L1636.7,442.7L1638.1,440.8ZM1704.5,438.9L1704.5,442.7L1702.7,440.8ZM1636.7,447.7L1636.7,451.6L1638.4,449.6ZM1704.5,447.7L1704.5,451.6L1702.5,449.6ZM1636.7,456.7L1636.7,460.7L1638.6,458.7ZM1704.5,456.7L1704.5,460.7L1702.3,458.7ZM1636.7,465.8L1636.7,469.9L1638.8,467.8ZM1704.5,465.8L1704.5,469.9L1702.1,467.8ZM1636.7,475.1L1636.7,479.2L1639.0,477.2ZM1704.5,475.1L1704.5,479.2L1701.8,477.2ZM1636.7,484.5L1636.7,488.7L1639.2,486.6ZM1704.5,484.5L1704.5,488.7L1701.6,486.6ZM1636.7,494.1L1636.7,498.4L1639.4,496.3ZM1704.5,494.1L1704.5,498.4L1701.4,496.3ZM1636.7,503.9L1636.7,508.2L1639.6,506.1ZM1704.5,503.9L1704.5,508.2L1701.2,506.1ZM1636.7,513.8L1636.7,518.2L1639.8,516.0ZM1704.5,513.8L1704.5,518.2L1701.0,516.0ZM1636.7,523.8L1636.7,528.3L1640.0,526.1ZM1704.5,523.8L1704.5,528.3L1700.8,526.1ZM1636.7,534.0L1636.7,538.6L1640.2,536.3ZM1704.5,534.0L1704.5,538.6L1700.6,536.3ZM1636.7,544.4L1636.7,548.9L1640.5,546.6ZM1704.5,544.4L1704.5,548.9L1700.4,546.6ZM1636.7,554.8L1636.7,559.5L1640.7,557.1ZM1704.5,554.8L1704.5,559.5L1700.2,557.1ZM1636.7,565.4L1636.7,570.1L1640.9,567.8ZM1704.5,565.4L1704.5,570.1L1700.0,567.8ZM1636.7,576.1L1636.7,580.9L1641.1,578.5ZM1704.5,576.1L1704.5,580.9L1699.8,578.5ZM1636.7,587.0L1636.7,591.8L1641.3,589.4ZM1704.5,587.0L1704.5,591.8L1699.6,589.4ZM1636.7,598.0L1636.7,602.8L1641.5,600.4ZM1704.5,598.0L1704.5,602.8L1699.4,600.4ZM1636.7,609.0L1636.7,614.0L1641.7,611.5ZM1704.5,609.0L1704.5,614.0L1699.2,611.5ZM1636.7,620.2L1636.7,625.2L1641.9,622.7ZM1704.5,620.2L1704.5,625.2L1699.0,622.7ZM1636.7,631.6L1636.7,636.6L1642.1,634.1ZM1704.5,631.6L1704.5,636.6L1698.8,634.1ZM1636.7,643.0L1636.7,648.1L1642.3,645.5ZM1704.5,643.0L1704.5,648.1L1698.6,645.5ZM1636.7,654.5L1636.7,659.6L1642.6,657.1ZM1704.5,654.5L1704.5,659.6L1698.4,657.1ZM1636.7,666.2L1636.7,671.3L1642.8,668.7ZM1704.5,666.2L1704.5,671.3L1698.2,668.7ZM1636.7,677.9L1636.7,683.1L1643.0,680.5ZM1704.5,677.9L1704.5,683.1L1698.0,680.5ZM1636.7,689.7L1636.7,694.9L1643.2,692.3ZM1704.5,689.7L1704.5,694.9L1697.8,692.3ZM1636.7,701.6L1636.7,706.9L1643.4,704.3ZM1704.5,701.6L1704.5,706.9L1697.7,704.3ZM1636.7,713.6L1636.7,718.9L1643.5,716.3ZM1704.5,713.6L1704.5,718.9L1697.7,716.3ZM1636.7,725.7L1636.7,731.1L1643.5,728.4ZM1704.5,725.7L1704.5,731.1L1697.7,728.4ZM1636.7,737.9L1636.7,743.3L1643.5,740.6ZM1704.5,737.9L1704.5,743.3L1697.7,740.6ZM1636.7,750.1L1636.7,755.5L1643.5,752.8ZM1704.5,750.1L1704.5,755.5L1697.7,752.8ZM1636.7,762.5L1636.7,767.9L1643.5,765.2ZM1704.5,762.5L1704.5,767.9L1697.7,765.2ZM1636.7,774.9L1636.7,780.3L1643.5,777.6ZM1704.5,774.9L1704.5,780.3L1697.7,777.6ZM1636.7,787.3L1636.7,792.7L1643.5,790.0ZM1704.5,787.3L1704.5,792.7L1697.7,790.0ZM1636.7,799.9L1636.7,805.3L1643.5,802.6ZM1704.5,799.9L1704.5,805.3L1697.7,802.6ZM1636.7,812.5L1636.7,817.9L1643.5,815.2ZM1704.5,812.5L1704.5,817.9L1697.7,815.2ZM1636.7,825.1L1636.7,830.5L1643.5,827.8ZM1704.5,825.1L1704.5,830.5L1697.7,827.8ZM1636.7,837.8L1636.7,843.2L1643.5,840.5ZM1704.5,837.8L1704.5,843.2L1697.7,840.5ZM1636.7,850.5L1636.7,855.9L1643.5,853.2ZM1704.5,850.5L1704.5,855.9L1697.7,853.2ZM1636.7,863.3L1636.7,868.7L1643.5,866.0ZM1704.5,863.3L1704.5,868.7L1697.7,866.0ZM1636.7,876.1L1636.7,881.5L1643.5,878.8ZM1704.5,876.1L1704.5,881.5L1697.7,878.8ZM1636.7,888.9L1636.7,894.3L1643.5,891.6ZM1704.5,888.9L1704.5,894.3L1697.7,891.6ZM1636.7,901.8L1636.7,907.2L1643.5,904.5ZM1704.5,901.8L1704.5,907.2L1697.7,904.5ZM1636.7,914.7L1636.7,920.1L1643.5,917.4ZM1704.5,914.7L1704.5,920.1L1697.7,917.4ZM1636.7,927.6L1636.7,933.0L1643.5,930.3ZM1704.5,927.6L1704.5,933.0L1697.7,930.3ZM1636.7,940.5L1636.7,945.9L1643.5,943.2ZM1704.5,940.5L1704.5,945.9L1697.7,943.2ZM1636.7,953.5L1636.7,958.9L1643.5,956.2ZM1704.5,953.5L1704.5,958.9L1697.7,956.2ZM1636.7,966.5L1636.7,971.9L1643.5,969.2ZM1704.5,966.5L1704.5,971.9L1697.7,969.2ZM1636.7,979.4L1636.7,984.8L1643.5,982.1ZM1704.5,979.4L1704.5,984.8L1697.7,982.1ZM1636.7,992.4L1636.7,997.8L1643.5,995.1ZM1704.5,992.4L1704.5,997.8L1697.7,995.1ZM1636.7,1005.3L1636.7,1010.7L1643.5,1008.0ZM1704.5,1005.3L1704.5,1010.7L1697.7,1008.0ZM1636.7,1018.3L1636.7,1023.7L1643.5,1021.0ZM1704.5,1018.3L1704.5,1023.7L1697.7,1021.0ZM1636.7,1031.3L1636.7,1036.7L1643.5,1034.0ZM1704.5,1031.3L1704.5,1036.7L1697.7,1034.0ZM1636.7,1044.2L1636.7,1049.6L1643.5,1046.9ZM1704.5,1044.2L1704.5,1049.6L1697.7,1046.9ZM1636.7,1057.1L1636.7,1062.5L1643.5,1059.8ZM1704.5,1057.1L1704.5,1062.5L1697.7,1059.8ZM1636.7,1070.0L1636.7,1075.4L1643.5,1072.7ZM1704.5,1070.0L1704.5,1075.4L1697.7,1072.7ZM1636.7,1082.9L1636.7,1088.3L1643.5,1085.6ZM1704.5,1082.9L1704.5,1088.3L1697.7,1085.6ZM1636.7,1095.7L1636.7,1101.1L1643.5,1098.4ZM1704.5,1095.7L1704.5,1101.1L1697.7,1098.4ZM1636.7,1108.5L1636.7,1113.9L1643.5,1111.2ZM1704.5,1108.5L1704.5,1113.9L1697.7,1111.2ZM1636.7,1121.3L1636.7,1126.7L1643.5,1124.0ZM1704.5,1121.3L1704.5,1126.7L1697.7,1124.0ZM1636.7,1134.0L1636.7,1139.4L1643.5,1136.7ZM1704.5,1134.0L1704.5,1139.4L1697.7,1136.7ZM1636.7,1146.7L1636.7,1152.1L1643.5,1149.4ZM1704.5,1146.7L1704.5,1152.1L1697.7,1149.4ZM1636.7,1159.3L1636.7,1164.7L1643.5,1162.0ZM1704.5,1159.3L1704.5,1164.7L1697.7,1162.0ZM1636.7,1171.9L1636.7,1177.3L1643.5,1174.6ZM1704.5,1171.9L1704.5,1177.3L1697.7,1174.6ZM1636.7,1184.5L1636.7,1189.9L1643.5,1187.2ZM1704.5,1184.5L1704.5,1189.9L1697.7,1187.2ZM1636.7,1196.9L1636.7,1202.3L1643.5,1199.6ZM1704.5,1196.9L1704.5,1202.3L1697.7,1199.6ZM1636.7,1209.3L1636.7,1214.7L1643.5,1212.0ZM1704.5,1209.3L1704.5,1214.7L1697.7,1212.0ZM1636.7,1221.7L1636.7,1227.1L1643.5,1224.4ZM1704.5,1221.7L1704.5,1227.1L1697.7,1224.4ZM1636.7,1233.9L1636.7,1239.3L1643.5,1236.6ZM1704.5,1233.9L1704.5,1239.3L1697.7,1236.6ZM1636.7,1246.1L1636.7,1251.5L1643.5,1248.8ZM1704.5,1246.1L1704.5,1251.5L1697.7,1248.8ZM1636.7,1258.3L1636.7,1263.6L1643.5,1260.9ZM1704.5,1258.3L1704.5,1263.6L1697.7,1260.9ZM1636.7,1270.3L1636.7,1275.6L1643.4,1272.9ZM1704.5,1270.3L1704.5,1275.6L1697.7,1272.9ZM1636.7,1282.3L1636.7,1287.5L1643.2,1284.9ZM1704.5,1282.3L1704.5,1287.5L1697.8,1284.9ZM1636.7,1294.1L1636.7,1299.3L1643.0,1296.7ZM1704.5,1294.1L1704.5,1299.3L1698.0,1296.7ZM1636.7,1305.9L1636.7,1311.0L1642.8,1308.5ZM1704.5,1305.9L1704.5,1311.0L1698.2,1308.5ZM1636.7,1317.6L1636.7,1322.7L1642.6,1320.1ZM1704.5,1317.6L1704.5,1322.7L1698.4,1320.1ZM1636.7,1329.1L1636.7,1334.2L1642.3,1331.7ZM1704.5,1329.1L1704.5,1334.2L1698.6,1331.7ZM1636.7,1340.6L1636.7,1345.6L1642.1,1343.1ZM1704.5,1340.6L1704.5,1345.6L1698.8,1343.1ZM1636.7,1352.0L1636.7,1357.0L1641.9,1354.5ZM1704.5,1352.0L1704.5,1357.0L1699.0,1354.5ZM1636.7,1363.2L1636.7,1368.2L1641.7,1365.7ZM1704.5,1363.2L1704.5,1368.2L1699.2,1365.7ZM1636.7,1374.4L1636.7,1379.2L1641.5,1376.8ZM1704.5,1374.4L1704.5,1379.2L1699.4,1376.8ZM1636.7,1385.4L1636.7,1390.2L1641.3,1387.8ZM1704.5,1385.4L1704.5,1390.2L1699.6,1387.8ZM1636.7,1396.3L1636.7,1401.1L1641.1,1398.7ZM1704.5,1396.3L1704.5,1401.1L1699.8,1398.7ZM1636.7,1407.1L1636.7,1411.8L1640.9,1409.4ZM1704.5,1407.1L1704.5,1411.8L1700.0,1409.4ZM1636.7,1417.7L1636.7,1422.4L1640.7,1420.1ZM1704.5,1417.7L1704.5,1422.4L1700.2,1420.1ZM1636.7,1428.3L1636.7,1432.8L1640.5,1430.6ZM1704.5,1428.3L1704.5,1432.8L1700.4,1430.6ZM1636.7,1438.6L1636.7,1443.2L1640.2,1440.9ZM1704.5,1438.6L1704.5,1443.2L1700.6,1440.9ZM1636.7,1448.9L1636.7,1453.4L1640.0,1451.1ZM1704.5,1448.9L1704.5,1453.4L1700.8,1451.1ZM1636.7,1459.0L1636.7,1463.4L1639.8,1461.2ZM1704.5,1459.0L1704.5,1463.4L1701.0,1461.2ZM1636.7,1469.0L1636.7,1473.3L1639.6,1471.1ZM1704.5,1469.0L1704.5,1473.3L1701.2,1471.1ZM1636.7,1478.8L1636.7,1483.1L1639.4,1480.9ZM1704.5,1478.8L1704.5,1483.1L1701.4,1480.9ZM1636.7,1488.5L1636.7,1492.7L1639.2,1490.6ZM1704.5,1488.5L1704.5,1492.7L1701.6,1490.6ZM1636.7,1498.0L1636.7,1502.1L1639.0,1500.0ZM1704.5,1498.0L1704.5,1502.1L1701.8,1500.0ZM1636.7,1507.3L1636.7,1511.4L1638.8,1509.4ZM1704.5,1507.3L1704.5,1511.4L1702.1,1509.4ZM1636.7,1516.5L1636.7,1520.5L1638.6,1518.5ZM1704.5,1516.5L1704.5,1520.5L1702.3,1518.5ZM1636.7,1525.6L1636.7,1529.5L1638.4,1527.6ZM1704.5,1525.6L1704.5,1529.5L1702.5,1527.6ZM1636.7,1534.5L1636.7,1538.3L1638.1,1536.4ZM1704.5,1534.5L1704.5,1538.3L1702.7,1536.4ZM1636.7,1543.2L1636.7,1547.0L1637.9,1545.1ZM1704.5,1543.2L1704.5,1547.0L1702.9,1545.1ZM1636.7,1551.7L1636.7,1555.4L1637.7,1553.6ZM1704.5,1551.7L1704.5,1555.4L1703.1,1553.6ZM1636.7,1560.1L1636.7,1563.7L1637.5,1561.9ZM1704.5,1560.1L1704.5,1563.7L1703.3,1561.9Z" fill="#1a1a1a"/>
<ellipse cx="1614.8" cy="665.7" rx="12" ry="3" fill="#347cb0"/>
<ellipse cx="1607.3" cy="712" rx="10.5" ry="2.6" fill="#3a70a4"/>
<ellipse cx="1602.4" cy="752.3" rx="8.5" ry="2.3" fill="#3a70a4"/>
<ellipse cx="1601.4" cy="764.2" rx="7.5" ry="2.3" fill="#3a70a4"/>
<ellipse cx="1599.3" cy="789.8" rx="7" ry="2.8" fill="#3d5a8a"/>
<ellipse cx="1598.2" cy="799.5" rx="6.2" ry="4.2" fill="#3a70a4"/>
<path d="M1589.5,809L1603,809L1602.5,830L1600,852L1597.5,880L1594,905L1590.5,925L1588,938L1582.5,938L1582,915L1584,890L1586.5,860L1588.5,830Z" fill="#3d6698"/>
<path d="M1591,815L1601,815L1599,850L1595,890L1590,925L1584.5,930L1586,895L1588.5,850Z" fill="#3a70a4" fill-opacity="0.8"/>
<path d="M1583,925L1587,925L1586,975L1582.5,990L1581.5,960Z" fill="#347cb0" fill-opacity="0.9"/>
<path d="M1582.8,985.5h5.0v1.5h-5.0zM1607.0,1007.2h2.1v1.6h-2.1zM1581.0,980.5h7.9v2.5h-7.9zM1589.7,992.7h2.2v1.4h-2.2zM1594.6,969.8h2.4v2.0h-2.4zM1593.8,1001.4h5.6v1.9h-5.6zM1593.3,968.6h5.5v2.3h-5.5zM1581.0,987.8h3.4v1.9h-3.4zM1595.3,975.4h5.2v2.4h-5.2zM1592.1,973.5h2.2v2.0h-2.2zM1590.3,981.4h5.5v1.9h-5.5zM1581.0,985.5h5.1v2.3h-5.1zM1581.6,983.4h3.6v2.5h-3.6zM1581.7,980.3h3.9v2.2h-3.9zM1590.5,1001.6h2.7v1.5h-2.7zM1590.8,973.0h3.5v2.3h-3.5zM1584.4,994.5h6.5v1.8h-6.5zM1586.0,997.3h6.4v2.0h-6.4zM1581.0,981.5h5.7v1.8h-5.7zM1586.3,991.4h7.4v1.5h-7.4zM1589.6,993.7h3.8v2.3h-3.8zM1586.3,978.9h4.8v2.6h-4.8zM1583.9,982.3h5.8v1.4h-5.8zM1582.8,978.0h5.9v1.8h-5.9zM1587.5,995.4h4.4v2.4h-4.4zM1606.7,975.1h3.0v2.0h-3.0zM1603.1,1010.7h3.3v1.3h-3.3zM1585.9,982.0h2.9v2.5h-2.9zM1584.2,994.2h4.7v1.7h-4.7zM1590.5,968.4h4.9v1.8h-4.9zM1601.1,991.1h2.3v2.0h-2.3zM1602.2,963.7h4.5v1.5h-4.5zM1603.6,955.1h3.1v1.9h-3.1zM1584.1,988.8h5.8v1.6h-5.8zM1581.0,987.5h8.3v1.8h-8.3zM1587.1,983.2h5.1v1.3h-5.1zM1592.8,1006.9h3.5v1.5h-3.5zM1602.7,1014.7h2.6v2.1h-2.6zM1586.4,994.2h7.5v1.4h-7.5zM1597.8,970.7h5.4v2.5h-5.4zM1585.8,1001.7h7.1v1.2h-7.1zM1593.2,1002.4h2.9v2.5h-2.9zM1584.9,1000.1h5.7v2.3h-5.7zM1581.0,990.4h6.5v1.4h-6.5zM1581.0,992.7h8.8v2.4h-8.8zM1581.0,984.4h8.9v2.2h-8.9zM1585.2,986.5h3.6v1.8h-3.6zM1590.5,973.9h6.4v2.5h-6.4zM1581.0,980.6h7.5v1.2h-7.5zM1598.5,966.9h4.0v1.5h-4.0zM1595.0,1003.6h2.8v1.2h-2.8zM1605.7,998.9h2.4v1.5h-2.4zM1586.9,987.3h2.7v1.4h-2.7zM1603.6,950.4h2.5v1.6h-2.5zM1592.5,987.9h5.0v1.6h-5.0zM1589.4,973.6h6.5v1.4h-6.5zM1588.6,999.7h5.4v1.2h-5.4zM1595.2,965.6h3.5v1.8h-3.5zM1582.9,996.2h5.4v2.0h-5.4zM1593.2,1008.9h3.8v1.7h-3.8zM1587.6,992.0h2.2v1.9h-2.2zM1581.0,983.8h8.7v2.1h-8.7zM1600.8,956.3h3.1v2.1h-3.1zM1588.6,996.8h2.3v2.3h-2.3zM1601.2,954.5h4.1v2.3h-4.1zM1587.2,986.0h4.1v2.6h-4.1zM1585.5,993.9h3.4v2.3h-3.4zM1583.0,990.2h3.4v1.4h-3.4zM1604.7,1021.6h2.3v2.5h-2.3zM1581.0,991.2h5.8v1.3h-5.8zM1581.0,979.6h7.0v1.5h-7.0zM1584.0,997.5h4.1v2.5h-4.1zM1603.4,987.6h4.2v1.4h-4.2zM1582.1,991.0h4.6v1.3h-4.6zM1581.0,988.7h4.7v1.7h-4.7zM1588.4,984.5h3.1v2.4h-3.1zM1581.0,988.6h8.8v2.2h-8.8zM1590.9,991.3h6.5v1.5h-6.5zM1581.0,981.6h6.8v2.5h-6.8zM1587.0,982.6h7.0v1.7h-7.0zM1591.1,964.4h4.1v2.0h-4.1zM1581.0,979.8h5.6v2.1h-5.6zM1586.3,992.8h5.9v1.6h-5.9zM1584.3,995.7h6.9v2.3h-6.9zM1590.4,1004.7h3.9v1.7h-3.9zM1607.1,965.5h2.1v1.7h-2.1zM1583.5,981.8h5.2v1.9h-5.2zM1587.6,982.9h4.8v1.5h-4.8zM1581.0,986.0h8.5v1.5h-8.5zM1588.5,989.8h2.8v2.2h-2.8zM1581.5,983.6h5.7v1.7h-5.7zM1590.6,998.5h2.1v1.5h-2.1zM1596.6,1014.0h4.6v1.9h-4.6zM1589.7,984.5h6.5v2.3h-6.5zM1581.0,986.7h9.1v1.7h-9.1zM1591.9,998.6h6.4v1.7h-6.4zM1584.0,988.4h5.1v1.4h-5.1z" fill="#3d6698"/>
<path d="M1581.0,988.2h3.8v1.6h-3.8zM1586.8,975.9h2.4v1.3h-2.4zM1602.7,1003.8h2.4v2.2h-2.4zM1583.7,976.1h6.4v2.0h-6.4zM1583.5,987.6h2.3v1.3h-2.3zM1596.5,957.2h3.1v1.4h-3.1zM1581.0,984.1h5.8v2.1h-5.8zM1585.6,999.6h4.8v1.4h-4.8zM1582.1,980.3h3.0v2.2h-3.0zM1581.0,983.3h5.9v1.8h-5.9zM1581.0,985.7h6.6v1.5h-6.6zM1581.0,988.1h7.3v1.5h-7.3zM1592.9,962.5h6.0v1.2h-6.0zM1581.0,986.8h5.5v1.8h-5.5zM1590.6,998.9h4.9v2.1h-4.9zM1595.7,959.6h4.5v1.8h-4.5zM1597.5,1000.5h2.5v1.6h-2.5zM1581.0,981.5h5.6v2.6h-5.6zM1581.5,978.7h7.4v1.6h-7.4zM1587.1,977.0h5.1v2.3h-5.1zM1581.0,984.8h8.4v2.1h-8.4zM1587.9,986.9h4.5v2.3h-4.5zM1581.0,982.7h7.1v2.1h-7.1zM1586.5,984.9h7.0v1.8h-7.0zM1581.0,985.6h8.3v2.4h-8.3zM1581.0,989.1h6.0v1.9h-6.0zM1581.7,991.6h3.8v1.8h-3.8zM1583.2,984.5h5.3v1.8h-5.3zM1590.1,999.6h5.9v1.4h-5.9zM1583.5,988.2h4.0v2.4h-4.0zM1581.0,983.9h4.6v2.4h-4.6zM1581.0,981.3h6.9v1.4h-6.9zM1597.9,1000.8h5.0v2.0h-5.0zM1592.7,975.2h2.9v2.3h-2.9zM1581.0,987.5h6.8v2.6h-6.8zM1592.4,985.5h4.6v1.9h-4.6zM1581.0,988.1h5.0v2.4h-5.0zM1589.3,996.3h6.5v1.7h-6.5zM1592.8,975.9h2.5v1.7h-2.5zM1595.5,957.7h4.5v1.9h-4.5zM1586.2,997.4h4.0v1.2h-4.0zM1589.1,975.9h5.3v1.9h-5.3zM1606.0,1018.1h3.2v1.3h-3.2zM1581.0,985.0h4.1v2.2h-4.1zM1581.4,978.9h5.9v1.9h-5.9zM1600.0,1001.3h2.1v1.7h-2.1zM1589.1,978.4h2.4v2.0h-2.4zM1606.0,960.2h3.7v1.9h-3.7zM1581.0,983.1h7.6v1.8h-7.6zM1581.0,981.3h5.3v2.2h-5.3zM1586.9,999.8h2.8v2.4h-2.8zM1581.0,982.4h3.4v2.3h-3.4zM1581.0,985.2h8.7v2.2h-8.7zM1587.8,997.0h2.5v1.5h-2.5zM1590.8,965.7h3.7v1.9h-3.7zM1585.2,979.7h3.5v1.3h-3.5zM1588.4,986.0h6.0v1.6h-6.0zM1591.3,973.5h3.7v1.7h-3.7zM1581.0,984.6h7.4v2.2h-7.4zM1603.6,1022.0h3.0v1.8h-3.0zM1600.8,961.8h3.7v2.0h-3.7zM1582.6,988.1h7.3v1.3h-7.3zM1599.9,966.1h3.4v1.5h-3.4zM1585.1,988.4h2.8v2.6h-2.8zM1607.2,1003.8h2.3v1.6h-2.3zM1589.7,985.2h5.4v1.5h-5.4zM1595.7,1011.5h5.0v2.0h-5.0zM1581.0,989.4h9.5v1.2h-9.5zM1581.0,981.3h9.2v2.4h-9.2zM1581.8,981.2h2.4v1.7h-2.4zM1598.2,994.5h2.5v1.9h-2.5zM1597.7,1013.6h5.3v2.0h-5.3zM1581.0,986.9h2.5v2.2h-2.5zM1591.5,976.3h4.1v1.8h-4.1zM1597.1,1014.1h5.5v1.3h-5.5zM1599.4,1005.9h3.5v1.7h-3.5zM1592.8,995.6h6.2v2.2h-6.2zM1607.1,978.6h2.5v2.1h-2.5zM1590.0,998.7h3.9v2.3h-3.9zM1595.4,1012.4h5.6v1.9h-5.6zM1586.0,972.7h5.4v1.8h-5.4zM1587.0,978.9h6.4v2.5h-6.4zM1581.0,984.7h7.6v1.5h-7.6z" fill="#3a70a4"/>
<path d="M1585.8,998.5h7.0v1.2h-7.0zM1592.3,1000.9h3.4v1.8h-3.4zM1581.0,983.0h6.8v2.6h-6.8zM1585.2,982.8h4.8v2.0h-4.8zM1584.7,995.4h2.2v1.3h-2.2zM1582.2,986.9h7.1v1.5h-7.1zM1583.6,999.4h7.5v2.6h-7.5zM1589.3,1001.8h6.3v1.7h-6.3zM1584.4,978.5h5.7v1.9h-5.7zM1588.9,975.9h2.2v1.3h-2.2zM1584.1,981.5h4.8v1.9h-4.8zM1581.7,993.6h7.8v1.8h-7.8zM1581.0,981.4h8.7v2.4h-8.7zM1589.4,981.0h6.0v2.2h-6.0zM1588.2,968.6h4.0v1.6h-4.0zM1581.0,978.5h5.1v1.6h-5.1zM1589.9,972.6h3.5v1.7h-3.5zM1586.5,989.3h3.6v2.3h-3.6zM1587.7,979.5h7.2v2.2h-7.2zM1584.7,969.3h7.6v1.4h-7.6zM1581.0,985.6h2.4v1.9h-2.4zM1589.3,1005.7h6.3v2.0h-6.3zM1589.3,976.2h2.8v1.8h-2.8zM1581.0,985.4h6.5v1.7h-6.5zM1589.0,992.2h5.2v1.8h-5.2zM1588.9,975.9h3.0v2.3h-3.0zM1582.8,988.8h3.2v1.3h-3.2zM1584.5,986.1h3.2v2.0h-3.2zM1581.0,986.2h4.9v2.2h-4.9zM1581.0,981.6h4.9v2.5h-4.9zM1585.2,995.8h2.6v1.7h-2.6zM1581.0,982.3h7.3v1.7h-7.3zM1587.5,991.0h2.5v2.0h-2.5zM1590.2,965.2h6.0v1.6h-6.0zM1588.2,978.0h2.9v1.4h-2.9zM1584.0,991.3h7.2v1.9h-7.2zM1583.2,989.4h6.7v1.5h-6.7zM1590.1,968.7h2.3v1.2h-2.3zM1585.5,994.8h2.2v2.2h-2.2zM1581.0,985.4h8.3v1.6h-8.3zM1581.0,990.4h9.3v1.5h-9.3z" fill="#347cb0"/>
<path d="M1592.8,989.1h4.8v1.9h-4.8zM1603.1,1011.5h4.5v2.6h-4.5zM1581.4,976.6h5.3v2.5h-5.3zM1602.6,965.0h4.2v2.6h-4.2zM1604.4,1026.5h2.9v2.3h-2.9zM1605.8,974.4h3.7v2.0h-3.7zM1585.5,991.7h4.3v2.5h-4.3zM1590.3,972.6h6.5v2.1h-6.5zM1595.4,1007.3h5.6v2.3h-5.6zM1581.0,990.0h7.1v1.9h-7.1zM1606.8,1004.0h2.0v2.3h-2.0zM1586.4,986.6h4.4v2.3h-4.4zM1593.7,962.9h2.9v2.3h-2.9zM1593.0,1009.4h3.4v1.9h-3.4zM1602.5,1018.3h3.9v1.5h-3.9zM1590.7,994.2h2.1v2.4h-2.1zM1593.8,996.2h4.9v2.1h-4.9zM1601.3,995.4h3.1v2.0h-3.1zM1596.2,1004.5h3.5v1.8h-3.5zM1605.7,966.5h2.9v1.5h-2.9zM1607.3,996.2h2.1v1.8h-2.1zM1586.2,994.5h5.5v2.3h-5.5zM1601.4,1011.9h4.4v2.3h-4.4zM1587.9,979.5h3.3v1.3h-3.3zM1595.4,1010.5h3.6v1.7h-3.6zM1601.6,1005.5h3.6v1.2h-3.6zM1604.5,990.0h3.8v1.3h-3.8zM1606.2,1007.7h2.3v2.5h-2.3zM1604.6,966.9h3.2v1.9h-3.2zM1585.6,971.3h6.0v1.4h-6.0zM1583.4,992.2h3.1v2.5h-3.1zM1594.8,998.0h4.8v1.7h-4.8zM1601.3,963.3h3.5v1.6h-3.5zM1581.0,987.3h2.2v2.0h-2.2zM1581.0,985.8h6.3v2.5h-6.3zM1603.8,989.0h2.8v1.5h-2.8zM1603.2,1014.0h2.9v1.8h-2.9zM1595.4,967.8h3.2v2.2h-3.2zM1600.6,990.2h4.4v2.1h-4.4zM1597.7,965.8h5.1v1.8h-5.1zM1593.2,973.5h4.6v2.5h-4.6zM1586.2,969.2h6.7v2.2h-6.7zM1601.5,982.5h4.6v1.5h-4.6zM1599.8,1001.6h3.3v2.5h-3.3zM1595.2,1009.7h4.4v1.5h-4.4zM1605.6,1016.0h2.4v1.2h-2.4zM1593.6,989.2h2.3v1.3h-2.3zM1601.3,996.6h3.5v1.8h-3.5zM1596.2,961.0h4.3v2.1h-4.3zM1595.3,1015.4h4.8v1.5h-4.8zM1595.0,978.7h3.6v2.1h-3.6zM1581.0,989.1h8.1v2.6h-8.1zM1603.7,1024.3h2.7v2.2h-2.7zM1604.5,976.2h2.0v1.5h-2.0zM1593.6,1006.1h5.8v2.6h-5.8zM1599.1,976.7h4.0v1.2h-4.0zM1581.0,987.8h4.4v1.4h-4.4zM1596.4,995.3h3.5v2.1h-3.5zM1597.3,961.0h2.4v1.3h-2.4zM1582.2,986.6h6.4v2.2h-6.4zM1605.0,971.0h3.4v1.6h-3.4zM1589.9,1001.3h3.2v2.6h-3.2zM1587.3,980.5h5.9v2.6h-5.9zM1592.0,1009.2h6.3v1.9h-6.3zM1595.5,1000.0h3.8v1.3h-3.8zM1591.0,968.3h4.0v1.7h-4.0zM1581.0,989.9h7.1v2.4h-7.1zM1590.3,967.1h5.5v2.5h-5.5zM1583.1,983.3h5.6v1.5h-5.6zM1593.1,986.8h3.3v1.3h-3.3zM1581.0,982.5h7.5v2.3h-7.5zM1599.7,1019.1h2.5v1.3h-2.5zM1584.6,988.1h4.7v2.2h-4.7zM1602.1,1014.3h3.8v1.9h-3.8zM1581.0,992.1h9.0v1.7h-9.0zM1602.4,953.6h4.0v2.3h-4.0zM1600.5,962.9h4.1v2.5h-4.1zM1590.9,1006.4h3.8v1.6h-3.8zM1589.4,996.7h4.8v1.3h-4.8zM1581.0,982.8h8.8v2.1h-8.8zM1597.4,1002.8h3.7v2.3h-3.7zM1581.0,981.6h4.4v1.3h-4.4zM1594.1,990.5h3.9v1.3h-3.9zM1594.0,964.3h3.2v1.3h-3.2zM1585.4,984.9h6.6v2.5h-6.6zM1590.7,962.1h6.6v2.1h-6.6zM1602.2,984.1h4.6v2.3h-4.6zM1590.9,993.3h6.2v2.5h-6.2zM1603.1,1025.0h3.8v1.5h-3.8zM1600.1,1007.3h3.6v1.8h-3.6zM1601.9,1015.7h2.9v2.0h-2.9zM1583.8,993.1h2.2v1.7h-2.2zM1587.7,970.5h5.2v2.1h-5.2zM1599.6,1015.5h2.2v1.9h-2.2zM1581.0,983.9h7.4v2.2h-7.4zM1605.7,1013.9h3.5v2.2h-3.5zM1595.8,1008.5h2.7v1.3h-2.7zM1606.5,1020.9h2.0v1.5h-2.0zM1599.1,953.9h2.7v1.4h-2.7z" fill="#3d5a8a"/>
<path d="M1581,970L1585,966L1590,972L1593,984L1591,996L1586,1003L1582,997Z" fill="#3a70a4" fill-opacity="0.8"/>
<rect x="1617" y="989" width="9" height="3.5" fill="#3d5a8a"/>
<rect x="1614.5" y="998" width="4" height="3" fill="#3d5a8a"/>
<rect x="1615" y="1021" width="8" height="2.5" fill="#3d5a8a"/>
<rect x="1617" y="1029" width="6" height="2.5" fill="#3d5a8a"/>
<rect x="1632" y="993.5" width="10" height="1.6" fill="#3d5a8a"/>
<rect x="1634" y="1006" width="6" height="4" fill="#3d5a8a"/>
<rect x="1632" y="1019" width="6" height="1.5" fill="#3d5a8a"/>
<path d="M1709,1031L1727,1028L1727,1042L1719,1040Z" fill="#3d6698"/>
<path d="M1697,1031L1708,1036L1720,1046L1712,1046L1700,1038Z" fill="#3d6698"/>
<path d="M1697,1044L1706,1052L1700,1050Z" fill="#3d6698"/>
<rect x="1719.5" y="1054" width="7.5" height="6.5" fill="#3d6698"/>
<path d="M1716,1067L1727,1068L1727,1075L1720,1072Z" fill="#3d6698"/>
<line y1="219.0" y2="1758.0" x1="1629.7" x2="1629.7" stroke="#fff" stroke-width="1.5"/>
<line y1="219.0" y2="1758.0" x1="1679.6" x2="1679.6" stroke="#fff" stroke-width="1.5"/>
<text class="sans" transform="translate(1607.1,220.6) rotate(90)" font-size="22.6" fill="#fff">5 km</text>
<text class="sans" transform="translate(1657.1,220.6) rotate(90)" font-size="22.6" fill="#fff">10 km</text>
<text class="sans" transform="translate(1707.1,220.6) rotate(90)" font-size="22.6" fill="#fff">15 km</text>
</g>
<rect x="1579.5" y="219.0" width="149.5" height="1539.0" fill="none" stroke="#000" stroke-width="2"/>
<rect x="1730.0" y="219.00" width="37.0" height="24.56" fill="#88dfbf"/>
<rect x="1730.0" y="243.06" width="37.0" height="24.56" fill="#88dfbf"/>
<rect x="1730.0" y="267.12" width="37.0" height="24.56" fill="#88dfbf"/>
<rect x="1730.0" y="291.19" width="37.0" height="24.56" fill="#88dfbf"/>
<rect x="1730.0" y="315.25" width="37.0" height="24.56" fill="#88dfbf"/>
<rect x="1730.0" y="339.31" width="37.0" height="24.56" fill="#95e5c9"/>
<rect x="1730.0" y="363.38" width="37.0" height="24.56" fill="#95e5c9"/>
<rect x="1730.0" y="387.44" width="37.0" height="24.56" fill="#a2ebd2"/>
<rect x="1730.0" y="411.50" width="37.0" height="24.56" fill="#b1eddb"/>
<rect x="1730.0" y="435.56" width="37.0" height="24.56" fill="#c6f2e3"/>
<rect x="1730.0" y="459.62" width="37.0" height="24.56" fill="#dff6ec"/>
<rect x="1730.0" y="483.69" width="37.0" height="24.56" fill="#ffffff"/>
<rect x="1730.0" y="507.75" width="37.0" height="24.56" fill="#9b009b"/>
<rect x="1730.0" y="531.81" width="37.0" height="24.56" fill="#b400b4"/>
<rect x="1730.0" y="555.88" width="37.0" height="24.56" fill="#cd00cd"/>
<rect x="1730.0" y="579.94" width="37.0" height="24.56" fill="#eb00eb"/>
<rect x="1730.0" y="604.00" width="37.0" height="24.56" fill="#dc0096"/>
<rect x="1730.0" y="628.06" width="37.0" height="24.56" fill="#c2005a"/>
<rect x="1730.0" y="652.12" width="37.0" height="24.56" fill="#9b0000"/>
<rect x="1730.0" y="676.19" width="37.0" height="24.56" fill="#b40008"/>
<rect x="1730.0" y="700.25" width="37.0" height="24.56" fill="#c00018"/>
<rect x="1730.0" y="724.31" width="37.0" height="24.56" fill="#cc0020"/>
<rect x="1730.0" y="748.38" width="37.0" height="24.56" fill="#ec0c30"/>
<rect x="1730.0" y="772.44" width="37.0" height="24.56" fill="#e08018"/>
<rect x="1730.0" y="796.50" width="37.0" height="24.56" fill="#dc9820"/>
<rect x="1730.0" y="820.56" width="37.0" height="24.56" fill="#d4ac28"/>
<rect x="1730.0" y="844.62" width="37.0" height="24.56" fill="#c4c430"/>
<rect x="1730.0" y="868.69" width="37.0" height="24.56" fill="#d0d034"/>
<rect x="1730.0" y="892.75" width="37.0" height="24.56" fill="#dcdc38"/>
<rect x="1730.0" y="916.81" width="37.0" height="24.56" fill="#e4e43c"/>
<rect x="1730.0" y="940.88" width="37.0" height="24.56" fill="#f0f040"/>
<rect x="1730.0" y="964.94" width="37.0" height="24.56" fill="#247014"/>
<rect x="1730.0" y="989.00" width="37.0" height="24.56" fill="#2a8a1e"/>
<rect x="1730.0" y="1013.06" width="37.0" height="24.56" fill="#32a022"/>
<rect x="1730.0" y="1037.12" width="37.0" height="24.56" fill="#38b028"/>
<rect x="1730.0" y="1061.19" width="37.0" height="24.56" fill="#40c030"/>
<rect x="1730.0" y="1085.25" width="37.0" height="24.56" fill="#48d434"/>
<rect x="1730.0" y="1109.31" width="37.0" height="24.56" fill="#50e83c"/>
<rect x="1730.0" y="1133.38" width="37.0" height="24.56" fill="#58fc40"/>
<rect x="1730.0" y="1157.44" width="37.0" height="24.56" fill="#28acd8"/>
<rect x="1730.0" y="1181.50" width="37.0" height="24.56" fill="#24a0d0"/>
<rect x="1730.0" y="1205.56" width="37.0" height="24.56" fill="#2896c6"/>
<rect x="1730.0" y="1229.62" width="37.0" height="24.56" fill="#2892c2"/>
<rect x="1730.0" y="1253.69" width="37.0" height="24.56" fill="#2c8abe"/>
<rect x="1730.0" y="1277.75" width="37.0" height="24.56" fill="#2c86ba"/>
<rect x="1730.0" y="1301.81" width="37.0" height="24.56" fill="#347eb2"/>
<rect x="1730.0" y="1325.88" width="37.0" height="24.56" fill="#347aae"/>
<rect x="1730.0" y="1349.94" width="37.0" height="24.56" fill="#3a72a6"/>
<rect x="1730.0" y="1374.00" width="37.0" height="24.56" fill="#3a70a4"/>
<rect x="1730.0" y="1398.06" width="37.0" height="24.56" fill="#3a6ea2"/>
<rect x="1730.0" y="1422.12" width="37.0" height="24.56" fill="#3d6698"/>
<rect x="1730.0" y="1446.19" width="37.0" height="24.56" fill="#3d6698"/>
<rect x="1730.0" y="1470.25" width="37.0" height="24.56" fill="#3d6698"/>
<rect x="1730.0" y="1494.31" width="37.0" height="24.56" fill="#3d5a8a"/>
<rect x="1730.0" y="1518.38" width="37.0" height="24.56" fill="#3d5a8a"/>
<rect x="1730.0" y="1542.44" width="37.0" height="24.56" fill="#3d5a8a"/>
<rect x="1730.0" y="1566.50" width="37.0" height="24.56" fill="#3d4e7c"/>
<rect x="1730.0" y="1590.56" width="37.0" height="24.56" fill="#3d4e7c"/>
<rect x="1730.0" y="1614.62" width="37.0" height="24.56" fill="#3d4e7c"/>
<rect x="1730.0" y="1638.69" width="37.0" height="24.56" fill="#3d426e"/>
<rect x="1730.0" y="1662.75" width="37.0" height="24.56" fill="#3d426e"/>
<rect x="1730.0" y="1686.81" width="37.0" height="24.56" fill="#3d426e"/>
<rect x="1730.0" y="1710.88" width="37.0" height="24.56" fill="#3d426e"/>
<rect x="1730.0" y="1734.94" width="37.0" height="24.56" fill="#3d426e"/>
<rect x="1730.0" y="219.0" width="37.0" height="1540.0" fill="none" stroke="#000" stroke-width="2"/>
<line x1="1768.0" x2="1777.0" y1="1686.81" y2="1686.81" stroke="#000" stroke-width="2"/>
<text class="sans" x="1786" y="1696.81" font-size="27" fill="#000">−15</text>
<line x1="1768.0" x2="1777.0" y1="1606.60" y2="1606.60" stroke="#000" stroke-width="2"/>
<text class="sans" x="1786" y="1616.60" font-size="27" fill="#000">−10</text>
<line x1="1768.0" x2="1777.0" y1="1526.40" y2="1526.40" stroke="#000" stroke-width="2"/>
<text class="sans" x="1786" y="1536.40" font-size="27" fill="#000">−5</text>
<line x1="1768.0" x2="1777.0" y1="1446.19" y2="1446.19" stroke="#000" stroke-width="2"/>
<text class="sans" x="1786" y="1456.19" font-size="27" fill="#000">0</text>
<line x1="1768.0" x2="1777.0" y1="1365.98" y2="1365.98" stroke="#000" stroke-width="2"/>
<text class="sans" x="1786" y="1375.98" font-size="27" fill="#000">5</text>
<line x1="1768.0" x2="1777.0" y1="1285.77" y2="1285.77" stroke="#000" stroke-width="2"/>
<text class="sans" x="1786" y="1295.77" font-size="27" fill="#000">10</text>
<line x1="1768.0" x2="1777.0" y1="1205.56" y2="1205.56" stroke="#000" stroke-width="2"/>
<text class="sans" x="1786" y="1215.56" font-size="27" fill="#000">15</text>
<line x1="1768.0" x2="1777.0" y1="1125.35" y2="1125.35" stroke="#000" stroke-width="2"/>
<text class="sans" x="1786" y="1135.35" font-size="27" fill="#000">20</text>
<line x1="1768.0" x2="1777.0" y1="1045.15" y2="1045.15" stroke="#000" stroke-width="2"/>
<text class="sans" x="1786" y="1055.15" font-size="27" fill="#000">25</text>
<line x1="1768.0" x2="1777.0" y1="964.94" y2="964.94" stroke="#000" stroke-width="2"/>
<text class="sans" x="1786" y="974.94" font-size="27" fill="#000">30</text>
<line x1="1768.0" x2="1777.0" y1="884.73" y2="884.73" stroke="#000" stroke-width="2"/>
<text class="sans" x="1786" y="894.73" font-size="27" fill="#000">35</text>
<line x1="1768.0" x2="1777.0" y1="804.52" y2="804.52" stroke="#000" stroke-width="2"/>
<text class="sans" x="1786" y="814.52" font-size="27" fill="#000">40</text>
<line x1="1768.0" x2="1777.0" y1="724.31" y2="724.31" stroke="#000" stroke-width="2"/>
<text class="sans" x="1786" y="734.31" font-size="27" fill="#000">45</text>
<line x1="1768.0" x2="1777.0" y1="644.10" y2="644.10" stroke="#000" stroke-width="2"/>
<text class="sans" x="1786" y="654.10" font-size="27" fill="#000">50</text>
<line x1="1768.0" x2="1777.0" y1="563.90" y2="563.90" stroke="#000" stroke-width="2"/>
<text class="sans" x="1786" y="573.90" font-size="27" fill="#000">55</text>
<line x1="1768.0" x2="1777.0" y1="483.69" y2="483.69" stroke="#000" stroke-width="2"/>
<text class="sans" x="1786" y="493.69" font-size="27" fill="#000">60</text>
<line x1="1768.0" x2="1777.0" y1="403.48" y2="403.48" stroke="#000" stroke-width="2"/>
<text class="sans" x="1786" y="413.48" font-size="27" fill="#000">65</text>
<line x1="1768.0" x2="1777.0" y1="323.27" y2="323.27" stroke="#000" stroke-width="2"/>
<text class="sans" x="1786" y="333.27" font-size="27" fill="#000">70</text>
<line x1="1768.0" x2="1777.0" y1="243.06" y2="243.06" stroke="#000" stroke-width="2"/>
<text class="sans" x="1786" y="253.06" font-size="27" fill="#000">75</text>
<path d="M139.89,1817.50A38.1,38.1 0 1,0 139.45,1851.20" fill="none" stroke="#fdb201" stroke-width="18.4"/>
<path d="M99.7,1819.9C105,1817.6 111,1814.6 118.9,1814.6C128,1814.6 136,1819.4 145.2,1819.4C150,1819.4 153,1819.1 156.4,1818.4C160,1817.6 163.5,1815.8 166.2,1814L166.2,1826.4C164,1828 162,1829.2 160.2,1829.7C156,1830.9 152.5,1831.7 148.9,1831.6C143,1831.4 139,1828.6 133.9,1828.2C127,1827.6 121,1827.2 115.1,1827.9C109.5,1828.6 104.5,1830.4 99.7,1832.5Z" fill="#0095da"/>
<path d="M99.7,1819.9C105,1817.6 111,1814.6 118.9,1814.6C128,1814.6 136,1819.4 145.2,1819.4C150,1819.4 153,1819.1 156.4,1818.4C160,1817.6 163.5,1815.8 166.2,1814L166.2,1826.4C164,1828 162,1829.2 160.2,1829.7C156,1830.9 152.5,1831.7 148.9,1831.6C143,1831.4 139,1828.6 133.9,1828.2C127,1827.6 121,1827.2 115.1,1827.9C109.5,1828.6 104.5,1830.4 99.7,1832.5Z" fill="#0095da" transform="translate(0,20.2)"/>
<g class="lsans" fill="#1d1d1d" stroke="#1d1d1d" stroke-width="0.45">
<text x="178.4" y="1806.6" font-size="26.8" textLength="112.3" lengthAdjust="spacingAndGlyphs">Servicio</text>
<text x="179.6" y="1833.2" font-size="26.8" textLength="200.5" lengthAdjust="spacingAndGlyphs">Meteorológico</text>
<text x="179.6" y="1860.1" font-size="26.8" textLength="118.6" lengthAdjust="spacingAndGlyphs">Nacional</text>
<text x="180.6" y="1879.9" font-size="16.4" stroke-width="0.6" textLength="92.3" lengthAdjust="spacingAndGlyphs">Argentina</text>
</g>
<g transform="translate(532.9,1842) scale(1.0)" fill="none" stroke="#262e52" stroke-linecap="round">
<ellipse cx="0" cy="0.5" rx="32.6" ry="43.5" stroke-width="6.6" stroke-dasharray="2.6 1.7" stroke-linecap="butt" stroke-opacity="0.6"/>
<ellipse cx="0" cy="0.5" rx="32.6" ry="43.5" stroke-width="1" stroke-opacity="0.9"/>
<path d="M-10.5,-50L10.5,-50L14,-36L-14,-36Z" fill="#e6e6e6" stroke="none"/>
<path d="M7.04,-45.50L20.74,-42.59M7.17,-46.29L18.71,-45.16M7.20,-47.09L21.20,-47.28M7.14,-47.89L18.65,-49.33M7.00,-48.68L20.61,-51.95M6.77,-49.45L17.68,-53.39M6.46,-50.18L19.01,-56.38M6.06,-50.88L15.83,-57.14M5.60,-51.53L16.48,-60.34M5.06,-52.12L13.21,-60.38M4.46,-52.65L13.12,-63.65M3.80,-53.11L9.93,-62.97M3.10,-53.50L9.13,-66.13M2.36,-53.80L6.16,-64.76M1.59,-54.02L4.68,-67.68M0.80,-54.16L2.09,-65.68M0.00,-54.20L0.00,-68.20M-0.80,-54.16L-2.09,-65.68M-1.59,-54.02L-4.68,-67.68M-2.36,-53.80L-6.16,-64.76M-3.10,-53.50L-9.13,-66.13M-3.80,-53.11L-9.93,-62.97M-4.46,-52.65L-13.12,-63.65M-5.06,-52.12L-13.21,-60.38M-5.60,-51.53L-16.48,-60.34M-6.06,-50.88L-15.83,-57.14M-6.46,-50.18L-19.01,-56.38M-6.77,-49.45L-17.68,-53.39M-7.00,-48.68L-20.61,-51.95M-7.14,-47.89L-18.65,-49.33M-7.20,-47.09L-21.20,-47.28M-7.17,-46.29L-18.71,-45.16M-7.04,-45.50L-20.74,-42.59" stroke-width="1.0"/>
<circle cx="0" cy="-47" r="6.2" fill="#e6e6e6" stroke-width="0.9"/>
<path d="M-3.2,-48.2h2.4M0.8,-48.2h2.4M-1.2,-45.2h2.4" stroke-width="1.1"/>
<ellipse cx="-0.4" cy="-0.8" rx="27.2" ry="39.6" fill="#e6e6e6" stroke-width="1.5"/>
<path d="M-13.31,-35.00H12.51M-17.55,-30.55H16.75M-20.52,-26.10H19.72M-22.72,-21.65H21.92M-24.36,-17.20H23.56M-25.53,-12.75H24.73M-26.31,-8.30H25.51M-26.72,-3.85H25.92" stroke-width="0.8" stroke-opacity="0.75"/>
<path d="M-8.6,-13.5C-10,-22 -6,-28.5 0.5,-28.8C7.5,-29 10,-22 8.8,-13.2C5,-11.6 -4,-11.6 -8.6,-13.5Z" fill="#e6e6e6" stroke-width="1.4"/>
<path d="M-5.5,-17C-5.8,-22 -3,-25 0,-25.5" stroke-width="0.8"/>
<path d="M0,-12.5V31" stroke-width="2.1" stroke-linecap="butt"/>
<path d="M-25.5,7C-16,3.5 -8,1 0,-0.5C8,1 16,3.5 25,7" stroke-width="0.9"/>
<path d="M-23.5,17.5L-6,8.5M23,17.5L6,8.5" stroke-width="1.0"/>
<path d="M-8.5,9.5C-6,5.5 -2,4 1,5.2C4.5,4.2 8,6.5 9.5,9.5C7,13.5 3.5,15 0,14.2C-3.5,15 -6.5,13 -8.5,9.5Z" fill="#e6e6e6" stroke-width="1.1"/>
<path d="M-4.5,8.5L-1.5,12.5M-2,7.5L1,11.8M0.8,7L3.6,11M3.6,7.2L6,10.4" stroke-width="0.8"/>
<path d="M0,14V31" stroke-width="2.1" stroke-linecap="butt"/>
<path d="M-4.5,41.5h9v6.5h-9z" fill="#262e52" stroke-width="0.8"/>
<path d="M-4,46.5L-11.5,54.5L-8.5,50.5L-3,49M4,46.5L11.5,54.5L8.5,50.5L3,49" stroke-width="1.6" stroke-linejoin="round"/>
<path d="M-4.5,42C-9,41 -12,42.5 -14,45M4.5,42C9,41 12,42.5 14,45" stroke-width="1.4"/>
</g>
<g class="serif" fill="#262e52">
<text x="583.4" y="1827.4" font-size="27" font-weight="bold" textLength="132.4" lengthAdjust="spacingAndGlyphs">Ministerio</text>
<text x="583.2" y="1853.1" font-size="27" font-weight="bold" textLength="132.8" lengthAdjust="spacingAndGlyphs">de Defensa</text>
<text x="583.6" y="1873.2" font-size="16.2" fill="#343c60" textLength="150.2" lengthAdjust="spacingAndGlyphs">República Argentina</text>
</g>
<g transform="translate(894.0,1842) scale(1.025)" fill="none" stroke="#262e52" stroke-linecap="round">
<ellipse cx="0" cy="0.5" rx="32.6" ry="43.5" stroke-width="6.6" stroke-dasharray="2.6 1.7" stroke-linecap="butt" stroke-opacity="0.6"/>
<ellipse cx="0" cy="0.5" rx="32.6" ry="43.5" stroke-width="1" stroke-opacity="0.9"/>
<path d="M-10.5,-50L10.5,-50L14,-36L-14,-36Z" fill="#e6e6e6" stroke="none"/>
<path d="M7.04,-45.50L20.74,-42.59M7.17,-46.29L18.71,-45.16M7.20,-47.09L21.20,-47.28M7.14,-47.89L18.65,-49.33M7.00,-48.68L20.61,-51.95M6.77,-49.45L17.68,-53.39M6.46,-50.18L19.01,-56.38M6.06,-50.88L15.83,-57.14M5.60,-51.53L16.48,-60.34M5.06,-52.12L13.21,-60.38M4.46,-52.65L13.12,-63.65M3.80,-53.11L9.93,-62.97M3.10,-53.50L9.13,-66.13M2.36,-53.80L6.16,-64.76M1.59,-54.02L4.68,-67.68M0.80,-54.16L2.09,-65.68M0.00,-54.20L0.00,-68.20M-0.80,-54.16L-2.09,-65.68M-1.59,-54.02L-4.68,-67.68M-2.36,-53.80L-6.16,-64.76M-3.10,-53.50L-9.13,-66.13M-3.80,-53.11L-9.93,-62.97M-4.46,-52.65L-13.12,-63.65M-5.06,-52.12L-13.21,-60.38M-5.60,-51.53L-16.48,-60.34M-6.06,-50.88L-15.83,-57.14M-6.46,-50.18L-19.01,-56.38M-6.77,-49.45L-17.68,-53.39M-7.00,-48.68L-20.61,-51.95M-7.14,-47.89L-18.65,-49.33M-7.20,-47.09L-21.20,-47.28M-7.17,-46.29L-18.71,-45.16M-7.04,-45.50L-20.74,-42.59" stroke-width="1.0"/>
<circle cx="0" cy="-47" r="6.2" fill="#e6e6e6" stroke-width="0.9"/>
<path d="M-3.2,-48.2h2.4M0.8,-48.2h2.4M-1.2,-45.2h2.4" stroke-width="1.1"/>
<ellipse cx="-0.4" cy="-0.8" rx="27.2" ry="39.6" fill="#e6e6e6" stroke-width="1.5"/>
<path d="M-13.31,-35.00H12.51M-17.55,-30.55H16.75M-20.52,-26.10H19.72M-22.72,-21.65H21.92M-24.36,-17.20H23.56M-25.53,-12.75H24.73M-26.31,-8.30H25.51M-26.72,-3.85H25.92" stroke-width="0.8" stroke-opacity="0.75"/>
<path d="M-8.6,-13.5C-10,-22 -6,-28.5 0.5,-28.8C7.5,-29 10,-22 8.8,-13.2C5,-11.6 -4,-11.6 -8.6,-13.5Z" fill="#e6e6e6" stroke-width="1.4"/>
<path d="M-5.5,-17C-5.8,-22 -3,-25 0,-25.5" stroke-width="0.8"/>
<path d="M0,-12.5V31" stroke-width="2.1" stroke-linecap="butt"/>
<path d="M-25.5,7C-16,3.5 -8,1 0,-0.5C8,1 16,3.5 25,7" stroke-width="0.9"/>
<path d="M-23.5,17.5L-6,8.5M23,17.5L6,8.5" stroke-width="1.0"/>
<path d="M-8.5,9.5C-6,5.5 -2,4 1,5.2C4.5,4.2 8,6.5 9.5,9.5C7,13.5 3.5,15 0,14.2C-3.5,15 -6.5,13 -8.5,9.5Z" fill="#e6e6e6" stroke-width="1.1"/>
<path d="M-4.5,8.5L-1.5,12.5M-2,7.5L1,11.8M0.8,7L3.6,11M3.6,7.2L6,10.4" stroke-width="0.8"/>
<path d="M0,14V31" stroke-width="2.1" stroke-linecap="butt"/>
<path d="M-4.5,41.5h9v6.5h-9z" fill="#262e52" stroke-width="0.8"/>
<path d="M-4,46.5L-11.5,54.5L-8.5,50.5L-3,49M4,46.5L11.5,54.5L8.5,50.5L3,49" stroke-width="1.6" stroke-linejoin="round"/>
<path d="M-4.5,42C-9,41 -12,42.5 -14,45M4.5,42C9,41 12,42.5 14,45" stroke-width="1.4"/>
</g>
<g class="serif" fill="#262e52">
<text x="946.0" y="1827.2" font-size="27.6" font-weight="bold" textLength="135.2" lengthAdjust="spacingAndGlyphs">Ministerio</text>
<text x="945.8" y="1853.2" font-size="27.6" font-weight="bold" textLength="162.4" lengthAdjust="spacingAndGlyphs">de Economía</text>
<text x="946.3" y="1873.6" font-size="16.5" fill="#343c60" textLength="153.2" lengthAdjust="spacingAndGlyphs">República Argentina</text>
</g>
</svg></body></html>
